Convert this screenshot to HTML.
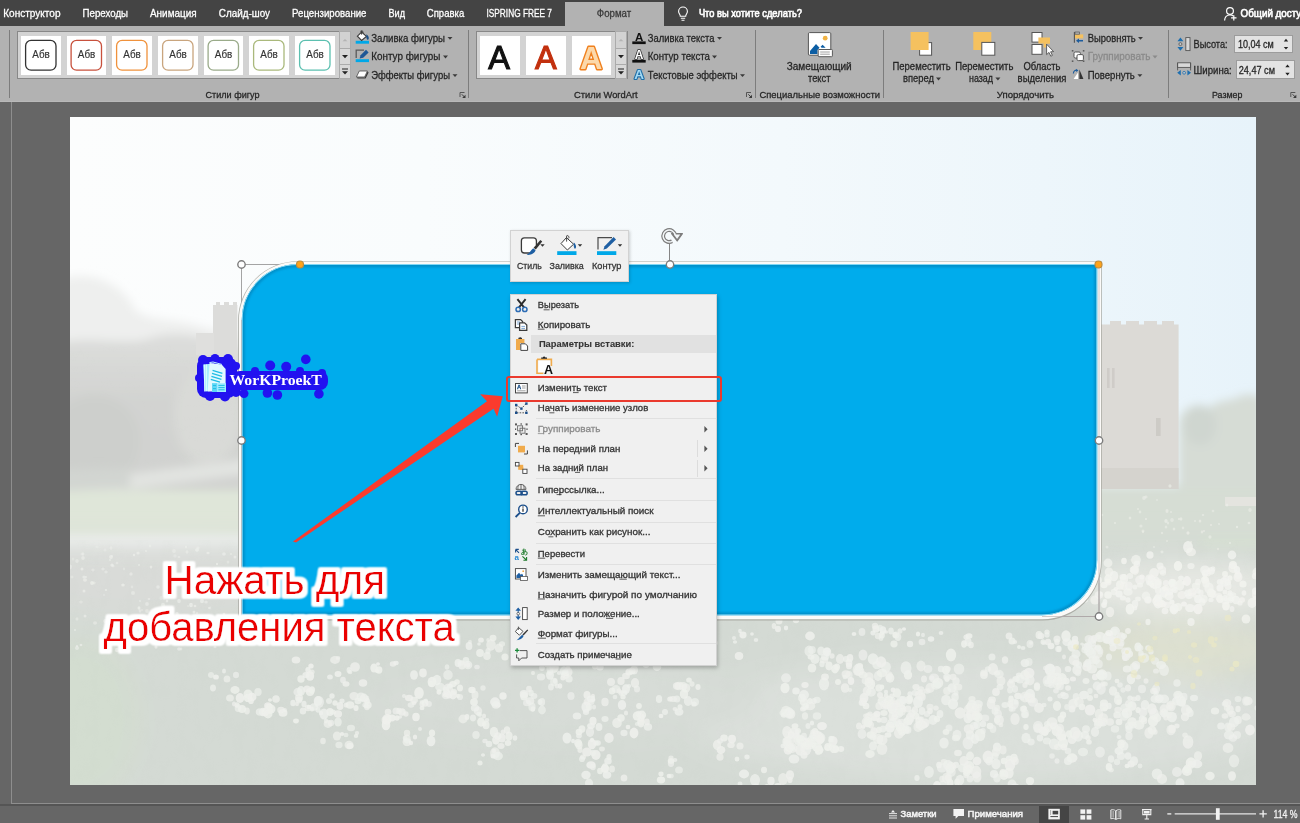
<!DOCTYPE html>
<html lang="ru"><head><meta charset="utf-8"><title>PowerPoint</title>
<style>
html,body{margin:0;padding:0;}
body{width:1300px;height:823px;overflow:hidden;position:relative;background:#666666;font-family:"Liberation Sans",sans-serif;}
.abs{position:absolute;}
#tabbar{left:0;top:0;width:1300px;height:26px;background:#444444;}
#acttab{left:565px;top:2px;width:99px;height:24px;background:#b2b2b2;}
#ribbon{left:0;top:26px;width:1300px;height:76px;background:#b2b2b2;border-bottom:1px solid #b9b9b9;box-sizing:border-box;}
.sep{width:1px;top:30px;height:68px;background:#7d7d7d;}
.gal{background:#d3d3d3;border:1px solid #888888;box-sizing:border-box;}
.gi{background:#ffffff;width:39.5px;height:39px;top:36px;}
.sb{box-sizing:border-box;border:1px solid #ababab;background:#d8d8d8;}
#vline{left:11px;top:102px;width:1px;height:702px;background:#8e8e8e;}
#hline{left:11px;top:803px;width:1289px;height:1px;background:#8e8e8e;}
#hline2{left:0;top:804px;width:1300px;height:2px;background:#555555;}
#status{left:0;top:806px;width:1300px;height:17px;background:#666666;}
#slide{left:70px;top:117px;width:1186px;height:668px;overflow:hidden;background:#eef2f2;}
svg{position:absolute;left:0;top:0;overflow:visible;}
</style></head><body>
<div id="slide" class="abs"></div>
<svg class="abs" width="1300" height="823" viewBox="0 0 1300 823">
<defs>
<clipPath id="sl"><rect x="70" y="117" width="1186" height="668"/></clipPath>
<linearGradient id="sky" x1="0" y1="0" x2="1" y2="0"><stop offset="0" stop-color="#fcfdfd"/><stop offset="0.3" stop-color="#f9fcfd"/><stop offset="0.6" stop-color="#f3f9fc"/><stop offset="0.82" stop-color="#edf6fb"/><stop offset="1" stop-color="#e7f3fa"/></linearGradient>
<linearGradient id="trg" x1="0" y1="0" x2="0" y2="1"><stop offset="0" stop-color="#dddedc"/><stop offset="0.4" stop-color="#d2d3d1"/><stop offset="1" stop-color="#d0d2cf"/></linearGradient>
<filter id="b12" x="-30%" y="-30%" width="160%" height="160%"><feGaussianBlur stdDeviation="12"/></filter>
<filter id="b6" x="-30%" y="-30%" width="160%" height="160%"><feGaussianBlur stdDeviation="5"/></filter>
<filter id="b2" x="-30%" y="-30%" width="160%" height="160%"><feGaussianBlur stdDeviation="1.6"/></filter>
<filter id="b1" x="-30%" y="-30%" width="160%" height="160%"><feGaussianBlur stdDeviation="0.7"/></filter>
<filter id="tex" x="0" y="0" width="100%" height="100%"><feTurbulence type="fractalNoise" baseFrequency="0.09 0.05" numOctaves="3" seed="4"/><feColorMatrix type="matrix" values="0 0 0 0 0.55  0 0 0 0 0.6  0 0 0 0 0.55  0 0 0 -1.6 0.95"/></filter>
<filter id="tex2" x="0" y="0" width="100%" height="100%"><feTurbulence type="fractalNoise" baseFrequency="0.05 0.12" numOctaves="3" seed="9"/><feColorMatrix type="matrix" values="0 0 0 0 0.62  0 0 0 0 0.66  0 0 0 0 0.62  0 0 0 -1.8 1.0"/></filter>
</defs>
<g clip-path="url(#sl)">
<rect x="70" y="117" width="1186" height="668" fill="url(#sky)"/>
<g filter="url(#b6)">
<path d="M60 280 C90 268 125 285 135 310 C150 322 175 318 200 326 L250 338 V360 H60 Z" fill="#eeefee"/>
<path d="M60 342 C100 336 130 346 150 338 C175 330 200 334 215 344 L250 350 V500 H60 Z" fill="url(#trg)"/>
<ellipse cx="95" cy="440" rx="45" ry="45" fill="#cdcfcc"/>
<ellipse cx="208" cy="415" rx="34" ry="50" fill="#d9dad7"/>
</g>
<rect x="70" y="345" width="175" height="135" filter="url(#tex2)" opacity="0.08"/>
<g filter="url(#b1)"><path d="M213 305 h3 v-3 h4 v3 h4 v-3 h5 v3 h4 v-3 h4 v3 h0.4 v56 h-24.4 z" fill="#dcdcda"/><rect x="196" y="333" width="18" height="22" fill="#dfdfdd"/></g>
<g filter="url(#b6)">
<path d="M40 486 L250 458 L250 474 L40 500 Z" fill="#e2e4e1"/>
<rect x="40" y="490" width="330" height="46" fill="#dfe6d9"/>
<path d="M40 470 L130 468 L130 488 L40 492 Z" fill="#d2d5d1"/>
</g>
<g filter="url(#b6)"><path d="M1179 420 C1185 404 1200 402 1208 410 C1216 398 1232 402 1240 396 C1250 392 1262 396 1262 400 V500 H1179 Z" fill="#d6dcd5"/><ellipse cx="1200" cy="425" rx="16" ry="20" fill="#cfd6d0"/></g>
<g filter="url(#b6)"><rect x="1090" y="486" width="180" height="74" fill="#d6ddd4"/><rect x="1200" y="536" width="70" height="18" fill="#d7e3d0"/></g>
<g filter="url(#b1)"><path d="M1101 324.5 h9 v-3.6 h11 v3.6 h5 v-3.6 h13 v3.6 h5 v-3.6 h13 v3.6 h5 v-3.6 h12 v3.6 h4.6 v164 h-77.6 z" fill="#dcdad6"/><rect x="1101" y="468" width="77.6" height="21" fill="#d5d3ce"/><rect x="1107" y="368" width="2.6" height="20" fill="#cfccc8"/><rect x="1112" y="368" width="2.6" height="20" fill="#cfccc8"/><rect x="1156" y="418" width="4.6" height="18" fill="#cdcbc6"/><rect x="1225" y="497" width="31" height="9" fill="#e4e4df"/></g>
<g filter="url(#b12)">
<rect x="30" y="540" width="1260" height="280" fill="#d4dad4"/>
<ellipse cx="150" cy="580" rx="150" ry="38" fill="#d9dbd8"/>
<ellipse cx="1185" cy="590" rx="105" ry="28" fill="#e6e8e3"/>
<ellipse cx="1180" cy="650" rx="100" ry="28" fill="#dde0d0"/>
<ellipse cx="980" cy="720" rx="300" ry="60" fill="#dbe0db"/>
<ellipse cx="560" cy="700" rx="200" ry="40" fill="#d7dcd7"/>
<ellipse cx="80" cy="720" rx="60" ry="80" fill="#d3ddd0"/>
</g>
<rect x="70" y="540" width="1186" height="245" filter="url(#tex)" opacity="0.10"/>
<g filter="url(#b1)"><ellipse cx="147" cy="604" rx="1.9" ry="2.0" fill="#eceeea" opacity="0.59"/><ellipse cx="170" cy="564" rx="1.5" ry="1.7" fill="#eceeea" opacity="0.65"/><ellipse cx="86" cy="577" rx="1.0" ry="1.1" fill="#eceeea" opacity="0.72"/><ellipse cx="77" cy="648" rx="2.0" ry="2.1" fill="#eceeea" opacity="0.66"/><ellipse cx="97" cy="547" rx="1.5" ry="1.3" fill="#eceeea" opacity="0.42"/><ellipse cx="111" cy="548" rx="1.4" ry="1.7" fill="#eceeea" opacity="0.58"/><ellipse cx="158" cy="612" rx="1.4" ry="1.5" fill="#eceeea" opacity="0.66"/><ellipse cx="117" cy="650" rx="2.0" ry="2.2" fill="#eceeea" opacity="0.74"/><ellipse cx="124" cy="569" rx="1.2" ry="1.4" fill="#eceeea" opacity="0.43"/><ellipse cx="138" cy="634" rx="1.3" ry="1.6" fill="#eceeea" opacity="0.78"/><ellipse cx="70" cy="567" rx="1.9" ry="2.4" fill="#eceeea" opacity="0.59"/><ellipse cx="138" cy="553" rx="1.6" ry="1.5" fill="#eceeea" opacity="0.71"/><ellipse cx="85" cy="580" rx="2.0" ry="1.7" fill="#eceeea" opacity="0.70"/><ellipse cx="112" cy="556" rx="1.0" ry="0.8" fill="#eceeea" opacity="0.72"/><ellipse cx="165" cy="592" rx="1.1" ry="1.0" fill="#eceeea" opacity="0.69"/><ellipse cx="179" cy="557" rx="1.4" ry="1.3" fill="#eceeea" opacity="0.49"/><ellipse cx="235" cy="629" rx="1.2" ry="1.1" fill="#eceeea" opacity="0.75"/><ellipse cx="137" cy="635" rx="1.6" ry="2.0" fill="#eceeea" opacity="0.44"/><ellipse cx="106" cy="572" rx="1.7" ry="1.6" fill="#eceeea" opacity="0.53"/><ellipse cx="82" cy="554" rx="1.5" ry="1.6" fill="#eceeea" opacity="0.50"/><ellipse cx="133" cy="593" rx="2.0" ry="2.1" fill="#eceeea" opacity="0.59"/><ellipse cx="217" cy="564" rx="1.1" ry="1.2" fill="#eceeea" opacity="0.76"/><ellipse cx="112" cy="565" rx="1.7" ry="1.5" fill="#eceeea" opacity="0.78"/><ellipse cx="232" cy="638" rx="1.6" ry="1.3" fill="#eceeea" opacity="0.57"/><ellipse cx="77" cy="646" rx="1.2" ry="1.1" fill="#eceeea" opacity="0.68"/><ellipse cx="210" cy="608" rx="1.2" ry="1.4" fill="#eceeea" opacity="0.47"/><ellipse cx="82" cy="569" rx="1.5" ry="1.6" fill="#eceeea" opacity="0.74"/><ellipse cx="118" cy="641" rx="1.1" ry="1.0" fill="#eceeea" opacity="0.41"/><ellipse cx="146" cy="551" rx="1.1" ry="1.2" fill="#eceeea" opacity="0.55"/><ellipse cx="92" cy="583" rx="1.9" ry="2.1" fill="#eceeea" opacity="0.79"/><ellipse cx="188" cy="606" rx="1.1" ry="0.9" fill="#eceeea" opacity="0.41"/><ellipse cx="225" cy="619" rx="2.0" ry="2.1" fill="#eceeea" opacity="0.41"/><ellipse cx="152" cy="622" rx="1.3" ry="1.0" fill="#eceeea" opacity="0.80"/><ellipse cx="163" cy="622" rx="1.9" ry="2.1" fill="#eceeea" opacity="0.69"/><ellipse cx="205" cy="641" rx="1.3" ry="1.6" fill="#eceeea" opacity="0.67"/><ellipse cx="218" cy="589" rx="1.8" ry="1.9" fill="#eceeea" opacity="0.75"/><ellipse cx="176" cy="585" rx="1.5" ry="1.3" fill="#eceeea" opacity="0.64"/><ellipse cx="179" cy="649" rx="1.9" ry="1.8" fill="#eceeea" opacity="0.69"/><ellipse cx="195" cy="606" rx="1.4" ry="1.2" fill="#eceeea" opacity="0.74"/><ellipse cx="198" cy="548" rx="1.6" ry="1.4" fill="#eceeea" opacity="0.59"/><ellipse cx="189" cy="597" rx="1.6" ry="1.4" fill="#eceeea" opacity="0.77"/><ellipse cx="72" cy="577" rx="1.6" ry="1.4" fill="#eceeea" opacity="0.48"/><ellipse cx="224" cy="614" rx="1.4" ry="1.3" fill="#eceeea" opacity="0.76"/><ellipse cx="183" cy="566" rx="1.4" ry="1.7" fill="#eceeea" opacity="0.72"/><ellipse cx="220" cy="585" rx="1.5" ry="1.3" fill="#eceeea" opacity="0.53"/><ellipse cx="154" cy="633" rx="1.8" ry="2.3" fill="#eceeea" opacity="0.68"/><ellipse cx="117" cy="563" rx="1.4" ry="1.3" fill="#eceeea" opacity="0.51"/><ellipse cx="140" cy="611" rx="1.4" ry="1.7" fill="#eceeea" opacity="0.53"/><ellipse cx="237" cy="593" rx="1.0" ry="1.2" fill="#eceeea" opacity="0.41"/><ellipse cx="77" cy="619" rx="1.5" ry="1.8" fill="#eceeea" opacity="0.52"/><ellipse cx="73" cy="559" rx="1.4" ry="1.6" fill="#eceeea" opacity="0.41"/><ellipse cx="110" cy="560" rx="1.0" ry="1.0" fill="#eceeea" opacity="0.65"/><ellipse cx="177" cy="614" rx="1.8" ry="2.0" fill="#eceeea" opacity="0.78"/><ellipse cx="104" cy="595" rx="1.1" ry="1.1" fill="#eceeea" opacity="0.40"/><ellipse cx="191" cy="564" rx="1.2" ry="1.3" fill="#eceeea" opacity="0.54"/><ellipse cx="158" cy="610" rx="1.7" ry="2.0" fill="#eceeea" opacity="0.56"/><ellipse cx="224" cy="554" rx="1.9" ry="1.7" fill="#eceeea" opacity="0.69"/><ellipse cx="147" cy="611" rx="1.9" ry="2.0" fill="#eceeea" opacity="0.55"/><ellipse cx="219" cy="629" rx="1.9" ry="2.1" fill="#eceeea" opacity="0.59"/><ellipse cx="105" cy="621" rx="1.8" ry="2.0" fill="#eceeea" opacity="0.66"/><ellipse cx="106" cy="639" rx="2.0" ry="2.1" fill="#eceeea" opacity="0.79"/><ellipse cx="204" cy="579" rx="1.9" ry="1.8" fill="#eceeea" opacity="0.74"/><ellipse cx="84" cy="591" rx="1.5" ry="1.5" fill="#eceeea" opacity="0.71"/><ellipse cx="75" cy="630" rx="1.0" ry="0.9" fill="#eceeea" opacity="0.72"/><ellipse cx="127" cy="628" rx="1.1" ry="1.1" fill="#eceeea" opacity="0.46"/><ellipse cx="193" cy="633" rx="1.7" ry="1.7" fill="#eceeea" opacity="0.78"/><ellipse cx="231" cy="554" rx="1.1" ry="1.1" fill="#eceeea" opacity="0.61"/><ellipse cx="194" cy="612" rx="1.5" ry="1.6" fill="#eceeea" opacity="0.74"/><ellipse cx="123" cy="585" rx="1.8" ry="1.6" fill="#eceeea" opacity="0.76"/><ellipse cx="215" cy="647" rx="1.5" ry="1.3" fill="#eceeea" opacity="0.63"/><ellipse cx="161" cy="598" rx="1.6" ry="1.9" fill="#eceeea" opacity="0.41"/><ellipse cx="158" cy="587" rx="1.8" ry="1.8" fill="#eceeea" opacity="0.63"/><ellipse cx="187" cy="552" rx="1.5" ry="1.8" fill="#eceeea" opacity="0.57"/><ellipse cx="227" cy="573" rx="1.4" ry="1.4" fill="#eceeea" opacity="0.45"/><ellipse cx="209" cy="640" rx="1.4" ry="1.3" fill="#eceeea" opacity="0.53"/><ellipse cx="175" cy="642" rx="1.0" ry="0.8" fill="#eceeea" opacity="0.71"/><ellipse cx="103" cy="569" rx="1.7" ry="1.6" fill="#eceeea" opacity="0.53"/><ellipse cx="175" cy="556" rx="1.7" ry="1.8" fill="#eceeea" opacity="0.45"/><ellipse cx="113" cy="566" rx="1.5" ry="1.4" fill="#eceeea" opacity="0.57"/><ellipse cx="140" cy="601" rx="1.1" ry="1.2" fill="#eceeea" opacity="0.48"/><ellipse cx="179" cy="601" rx="1.8" ry="2.2" fill="#eceeea" opacity="0.64"/><ellipse cx="110" cy="623" rx="1.8" ry="1.7" fill="#eceeea" opacity="0.76"/><ellipse cx="124" cy="642" rx="1.1" ry="1.4" fill="#eceeea" opacity="0.80"/><ellipse cx="93" cy="570" rx="1.7" ry="1.4" fill="#eceeea" opacity="0.50"/><ellipse cx="211" cy="589" rx="1.8" ry="1.7" fill="#eceeea" opacity="0.45"/><ellipse cx="186" cy="547" rx="1.1" ry="1.4" fill="#eceeea" opacity="0.67"/><ellipse cx="235" cy="557" rx="1.5" ry="1.5" fill="#eceeea" opacity="0.70"/><ellipse cx="187" cy="565" rx="1.0" ry="0.8" fill="#eceeea" opacity="0.44"/><ellipse cx="164" cy="599" rx="1.5" ry="1.3" fill="#eceeea" opacity="0.46"/><ellipse cx="105" cy="633" rx="2.0" ry="1.7" fill="#eceeea" opacity="0.77"/><ellipse cx="81" cy="645" rx="1.4" ry="1.3" fill="#eceeea" opacity="0.71"/><ellipse cx="149" cy="599" rx="1.4" ry="1.1" fill="#eceeea" opacity="0.64"/><ellipse cx="189" cy="634" rx="1.1" ry="1.2" fill="#eceeea" opacity="0.58"/><ellipse cx="139" cy="565" rx="1.1" ry="0.9" fill="#eceeea" opacity="0.61"/><ellipse cx="222" cy="629" rx="1.7" ry="1.8" fill="#eceeea" opacity="0.74"/><ellipse cx="139" cy="608" rx="1.5" ry="1.7" fill="#eceeea" opacity="0.79"/><ellipse cx="114" cy="641" rx="1.7" ry="2.0" fill="#eceeea" opacity="0.71"/><ellipse cx="139" cy="639" rx="1.9" ry="2.1" fill="#eceeea" opacity="0.68"/><ellipse cx="200" cy="588" rx="1.7" ry="1.6" fill="#eceeea" opacity="0.43"/><ellipse cx="150" cy="546" rx="1.3" ry="1.4" fill="#eceeea" opacity="0.66"/><ellipse cx="109" cy="644" rx="1.6" ry="1.8" fill="#eceeea" opacity="0.54"/><ellipse cx="167" cy="601" rx="1.3" ry="1.4" fill="#eceeea" opacity="0.80"/><ellipse cx="189" cy="625" rx="2.0" ry="2.1" fill="#eceeea" opacity="0.41"/><ellipse cx="196" cy="572" rx="1.3" ry="1.2" fill="#eceeea" opacity="0.42"/><ellipse cx="134" cy="555" rx="1.2" ry="1.2" fill="#eceeea" opacity="0.76"/><ellipse cx="156" cy="647" rx="1.5" ry="1.7" fill="#eceeea" opacity="0.80"/><ellipse cx="208" cy="553" rx="1.6" ry="1.3" fill="#eceeea" opacity="0.70"/><ellipse cx="228" cy="562" rx="1.4" ry="1.5" fill="#eceeea" opacity="0.47"/><ellipse cx="174" cy="551" rx="1.9" ry="2.0" fill="#eceeea" opacity="0.57"/><ellipse cx="172" cy="583" rx="1.2" ry="1.3" fill="#eceeea" opacity="0.66"/><ellipse cx="118" cy="620" rx="1.2" ry="1.1" fill="#eceeea" opacity="0.41"/><ellipse cx="77" cy="561" rx="1.7" ry="2.1" fill="#eceeea" opacity="0.56"/><ellipse cx="197" cy="550" rx="2.0" ry="1.7" fill="#eceeea" opacity="0.78"/><ellipse cx="224" cy="590" rx="1.4" ry="1.3" fill="#eceeea" opacity="0.79"/><ellipse cx="159" cy="643" rx="1.7" ry="2.1" fill="#eceeea" opacity="0.59"/><ellipse cx="209" cy="608" rx="1.0" ry="1.0" fill="#eceeea" opacity="0.65"/><ellipse cx="105" cy="550" rx="1.5" ry="1.5" fill="#eceeea" opacity="0.45"/><ellipse cx="184" cy="593" rx="1.2" ry="1.2" fill="#eceeea" opacity="0.63"/><ellipse cx="202" cy="601" rx="2.0" ry="2.3" fill="#eceeea" opacity="0.78"/><ellipse cx="111" cy="557" rx="1.9" ry="2.0" fill="#eceeea" opacity="0.71"/><ellipse cx="131" cy="574" rx="1.7" ry="1.8" fill="#eceeea" opacity="0.63"/><ellipse cx="178" cy="624" rx="1.1" ry="1.4" fill="#eceeea" opacity="0.50"/><ellipse cx="226" cy="637" rx="0.9" ry="0.9" fill="#eceeea" opacity="0.42"/><ellipse cx="142" cy="610" rx="1.0" ry="0.8" fill="#eceeea" opacity="0.62"/><ellipse cx="85" cy="616" rx="1.5" ry="1.5" fill="#eceeea" opacity="0.65"/><ellipse cx="151" cy="567" rx="1.3" ry="1.5" fill="#eceeea" opacity="0.70"/><ellipse cx="83" cy="558" rx="1.8" ry="2.1" fill="#eceeea" opacity="0.65"/><ellipse cx="106" cy="590" rx="1.2" ry="1.1" fill="#eceeea" opacity="0.72"/><ellipse cx="181" cy="649" rx="1.3" ry="1.4" fill="#eceeea" opacity="0.62"/><ellipse cx="227" cy="590" rx="1.3" ry="1.6" fill="#eceeea" opacity="0.44"/><ellipse cx="83" cy="554" rx="1.5" ry="1.7" fill="#eceeea" opacity="0.59"/><ellipse cx="121" cy="626" rx="1.0" ry="1.1" fill="#eceeea" opacity="0.49"/><ellipse cx="84" cy="577" rx="1.7" ry="1.6" fill="#eceeea" opacity="0.68"/><ellipse cx="94" cy="583" rx="1.7" ry="1.4" fill="#eceeea" opacity="0.55"/><ellipse cx="191" cy="605" rx="1.9" ry="2.3" fill="#eceeea" opacity="0.78"/><ellipse cx="144" cy="629" rx="1.2" ry="1.2" fill="#eceeea" opacity="0.53"/><ellipse cx="229" cy="639" rx="1.2" ry="1.1" fill="#eceeea" opacity="0.54"/><ellipse cx="132" cy="587" rx="1.3" ry="1.4" fill="#eceeea" opacity="0.48"/><ellipse cx="206" cy="602" rx="1.8" ry="1.6" fill="#eceeea" opacity="0.63"/><ellipse cx="199" cy="637" rx="1.2" ry="1.2" fill="#eceeea" opacity="0.41"/><ellipse cx="163" cy="605" rx="2.0" ry="2.3" fill="#eceeea" opacity="0.66"/><ellipse cx="81" cy="602" rx="1.8" ry="1.5" fill="#eceeea" opacity="0.43"/><ellipse cx="195" cy="639" rx="1.0" ry="0.9" fill="#eceeea" opacity="0.65"/><ellipse cx="197" cy="613" rx="1.2" ry="1.3" fill="#eceeea" opacity="0.49"/><ellipse cx="159" cy="625" rx="1.3" ry="1.6" fill="#eceeea" opacity="0.54"/><ellipse cx="184" cy="597" rx="1.5" ry="1.7" fill="#eceeea" opacity="0.69"/><ellipse cx="226" cy="588" rx="1.8" ry="2.1" fill="#eceeea" opacity="0.67"/><ellipse cx="207" cy="633" rx="1.9" ry="2.0" fill="#eceeea" opacity="0.78"/><ellipse cx="159" cy="620" rx="1.8" ry="1.8" fill="#eceeea" opacity="0.57"/><ellipse cx="95" cy="623" rx="2.0" ry="1.7" fill="#eceeea" opacity="0.55"/><ellipse cx="487" cy="720" rx="2.4" ry="2.0" fill="#eef0ec" opacity="0.74"/><ellipse cx="483" cy="688" rx="2.7" ry="2.7" fill="#eef0ec" opacity="0.69"/><ellipse cx="473" cy="691" rx="2.3" ry="2.0" fill="#eef0ec" opacity="0.70"/><ellipse cx="496" cy="705" rx="4.2" ry="3.8" fill="#eef0ec" opacity="0.81"/><ellipse cx="498" cy="705" rx="2.7" ry="2.5" fill="#eef0ec" opacity="0.85"/><ellipse cx="475" cy="695" rx="3.5" ry="4.2" fill="#eef0ec" opacity="0.73"/><ellipse cx="503" cy="696" rx="3.7" ry="3.8" fill="#eef0ec" opacity="0.89"/><ellipse cx="495" cy="702" rx="4.9" ry="4.7" fill="#eef0ec" opacity="0.86"/><ellipse cx="796" cy="736" rx="4.0" ry="3.3" fill="#eef0ec" opacity="0.73"/><ellipse cx="791" cy="714" rx="4.4" ry="4.8" fill="#eef0ec" opacity="0.84"/><ellipse cx="805" cy="716" rx="3.1" ry="3.7" fill="#eef0ec" opacity="0.73"/><ellipse cx="786" cy="711" rx="5.0" ry="5.2" fill="#eef0ec" opacity="0.73"/><ellipse cx="812" cy="723" rx="2.2" ry="2.6" fill="#eef0ec" opacity="0.86"/><ellipse cx="803" cy="709" rx="3.0" ry="2.5" fill="#eef0ec" opacity="0.84"/><ellipse cx="789" cy="713" rx="4.9" ry="5.8" fill="#eef0ec" opacity="0.81"/><ellipse cx="795" cy="726" rx="3.4" ry="2.8" fill="#eef0ec" opacity="0.88"/><ellipse cx="805" cy="707" rx="3.7" ry="3.2" fill="#eef0ec" opacity="0.79"/><ellipse cx="806" cy="706" rx="3.1" ry="2.9" fill="#eef0ec" opacity="0.69"/><ellipse cx="784" cy="715" rx="3.2" ry="2.7" fill="#eef0ec" opacity="0.83"/><ellipse cx="695" cy="702" rx="4.0" ry="3.9" fill="#eef0ec" opacity="0.68"/><ellipse cx="673" cy="699" rx="3.8" ry="3.0" fill="#eef0ec" opacity="0.78"/><ellipse cx="694" cy="704" rx="2.8" ry="2.6" fill="#eef0ec" opacity="0.81"/><ellipse cx="665" cy="712" rx="3.0" ry="3.0" fill="#eef0ec" opacity="0.75"/><ellipse cx="670" cy="699" rx="2.8" ry="2.6" fill="#eef0ec" opacity="0.84"/><ellipse cx="688" cy="701" rx="4.2" ry="5.0" fill="#eef0ec" opacity="0.75"/><ellipse cx="680" cy="707" rx="2.5" ry="2.8" fill="#eef0ec" opacity="0.83"/><ellipse cx="679" cy="712" rx="4.5" ry="3.8" fill="#eef0ec" opacity="0.81"/><ellipse cx="675" cy="709" rx="2.5" ry="2.1" fill="#eef0ec" opacity="0.77"/><ellipse cx="1159" cy="699" rx="4.3" ry="4.2" fill="#eef0ec" opacity="0.86"/><ellipse cx="1169" cy="707" rx="2.2" ry="2.5" fill="#eef0ec" opacity="0.77"/><ellipse cx="1194" cy="698" rx="4.0" ry="3.3" fill="#eef0ec" opacity="0.81"/><ellipse cx="1170" cy="706" rx="4.0" ry="3.9" fill="#eef0ec" opacity="0.70"/><ellipse cx="1155" cy="699" rx="4.5" ry="3.9" fill="#eef0ec" opacity="0.81"/><ellipse cx="1177" cy="683" rx="3.7" ry="3.8" fill="#eef0ec" opacity="0.75"/><ellipse cx="1186" cy="710" rx="5.0" ry="5.6" fill="#eef0ec" opacity="0.79"/><ellipse cx="1178" cy="695" rx="4.8" ry="4.3" fill="#eef0ec" opacity="0.82"/><ellipse cx="1182" cy="703" rx="3.8" ry="3.6" fill="#eef0ec" opacity="0.83"/><ellipse cx="1184" cy="697" rx="3.5" ry="4.3" fill="#eef0ec" opacity="0.70"/><ellipse cx="1190" cy="713" rx="3.7" ry="3.9" fill="#eef0ec" opacity="0.80"/><ellipse cx="1172" cy="717" rx="5.0" ry="5.3" fill="#eef0ec" opacity="0.86"/><ellipse cx="1189" cy="710" rx="3.0" ry="2.7" fill="#eef0ec" opacity="0.88"/><ellipse cx="1156" cy="693" rx="2.7" ry="2.3" fill="#eef0ec" opacity="0.80"/><ellipse cx="1181" cy="701" rx="5.0" ry="5.4" fill="#eef0ec" opacity="0.89"/><ellipse cx="591" cy="726" rx="3.9" ry="3.1" fill="#eef0ec" opacity="0.86"/><ellipse cx="596" cy="743" rx="2.6" ry="2.7" fill="#eef0ec" opacity="0.76"/><ellipse cx="598" cy="743" rx="2.9" ry="2.8" fill="#eef0ec" opacity="0.80"/><ellipse cx="590" cy="732" rx="4.1" ry="5.0" fill="#eef0ec" opacity="0.71"/><ellipse cx="582" cy="729" rx="3.4" ry="3.7" fill="#eef0ec" opacity="0.82"/><ellipse cx="593" cy="721" rx="3.6" ry="4.2" fill="#eef0ec" opacity="0.90"/><ellipse cx="599" cy="727" rx="3.4" ry="4.1" fill="#eef0ec" opacity="0.80"/><ellipse cx="579" cy="732" rx="3.4" ry="3.2" fill="#eef0ec" opacity="0.88"/><ellipse cx="609" cy="738" rx="4.7" ry="5.0" fill="#eef0ec" opacity="0.84"/><ellipse cx="1011" cy="681" rx="2.5" ry="2.6" fill="#eef0ec" opacity="0.78"/><ellipse cx="1011" cy="684" rx="4.1" ry="3.8" fill="#eef0ec" opacity="0.79"/><ellipse cx="1010" cy="690" rx="2.9" ry="3.5" fill="#eef0ec" opacity="0.69"/><ellipse cx="1030" cy="680" rx="4.6" ry="5.4" fill="#eef0ec" opacity="0.77"/><ellipse cx="1018" cy="696" rx="3.8" ry="3.2" fill="#eef0ec" opacity="0.88"/><ellipse cx="1016" cy="679" rx="3.7" ry="3.0" fill="#eef0ec" opacity="0.89"/><ellipse cx="1015" cy="689" rx="3.1" ry="3.7" fill="#eef0ec" opacity="0.69"/><ellipse cx="1019" cy="675" rx="3.2" ry="2.6" fill="#eef0ec" opacity="0.81"/><ellipse cx="1037" cy="686" rx="3.1" ry="3.7" fill="#eef0ec" opacity="0.79"/><ellipse cx="1027" cy="681" rx="2.8" ry="3.4" fill="#eef0ec" opacity="0.74"/><ellipse cx="1020" cy="679" rx="4.5" ry="4.6" fill="#eef0ec" opacity="0.75"/><ellipse cx="1025" cy="697" rx="5.0" ry="5.4" fill="#eef0ec" opacity="0.72"/><ellipse cx="1022" cy="698" rx="2.3" ry="2.6" fill="#eef0ec" opacity="0.70"/><ellipse cx="609" cy="757" rx="2.6" ry="3.1" fill="#eef0ec" opacity="0.83"/><ellipse cx="593" cy="767" rx="2.8" ry="3.2" fill="#eef0ec" opacity="0.74"/><ellipse cx="600" cy="771" rx="2.9" ry="3.3" fill="#eef0ec" opacity="0.82"/><ellipse cx="586" cy="775" rx="4.7" ry="4.2" fill="#eef0ec" opacity="0.81"/><ellipse cx="589" cy="783" rx="4.1" ry="4.4" fill="#eef0ec" opacity="0.74"/><ellipse cx="624" cy="778" rx="3.4" ry="3.6" fill="#eef0ec" opacity="0.79"/><ellipse cx="612" cy="769" rx="3.0" ry="3.5" fill="#eef0ec" opacity="0.73"/><ellipse cx="605" cy="769" rx="4.3" ry="4.0" fill="#eef0ec" opacity="0.73"/><ellipse cx="591" cy="765" rx="4.7" ry="3.8" fill="#eef0ec" opacity="0.90"/><ellipse cx="720" cy="757" rx="3.6" ry="3.8" fill="#eef0ec" opacity="0.72"/><ellipse cx="732" cy="739" rx="4.0" ry="4.2" fill="#eef0ec" opacity="0.85"/><ellipse cx="717" cy="745" rx="4.1" ry="5.1" fill="#eef0ec" opacity="0.79"/><ellipse cx="747" cy="757" rx="2.7" ry="2.4" fill="#eef0ec" opacity="0.81"/><ellipse cx="721" cy="750" rx="4.4" ry="4.0" fill="#eef0ec" opacity="0.85"/><ellipse cx="731" cy="745" rx="3.8" ry="3.1" fill="#eef0ec" opacity="0.79"/><ellipse cx="724" cy="738" rx="3.8" ry="3.4" fill="#eef0ec" opacity="0.87"/><ellipse cx="740" cy="746" rx="3.6" ry="3.6" fill="#eef0ec" opacity="0.77"/><ellipse cx="737" cy="759" rx="2.4" ry="2.5" fill="#eef0ec" opacity="0.88"/><ellipse cx="720" cy="741" rx="2.9" ry="2.7" fill="#eef0ec" opacity="0.71"/><ellipse cx="330" cy="677" rx="2.9" ry="2.5" fill="#eef0ec" opacity="0.81"/><ellipse cx="343" cy="680" rx="2.9" ry="3.2" fill="#eef0ec" opacity="0.71"/><ellipse cx="350" cy="672" rx="2.4" ry="2.3" fill="#eef0ec" opacity="0.77"/><ellipse cx="346" cy="705" rx="2.3" ry="2.6" fill="#eef0ec" opacity="0.79"/><ellipse cx="346" cy="684" rx="3.5" ry="2.8" fill="#eef0ec" opacity="0.84"/><ellipse cx="342" cy="701" rx="2.6" ry="2.4" fill="#eef0ec" opacity="0.76"/><ellipse cx="739" cy="656" rx="4.3" ry="3.9" fill="#eef0ec" opacity="0.84"/><ellipse cx="703" cy="661" rx="2.9" ry="3.5" fill="#eef0ec" opacity="0.78"/><ellipse cx="697" cy="656" rx="4.9" ry="4.0" fill="#eef0ec" opacity="0.81"/><ellipse cx="690" cy="657" rx="2.4" ry="2.6" fill="#eef0ec" opacity="0.75"/><ellipse cx="713" cy="643" rx="4.7" ry="4.6" fill="#eef0ec" opacity="0.78"/><ellipse cx="709" cy="644" rx="4.4" ry="4.2" fill="#eef0ec" opacity="0.72"/><ellipse cx="709" cy="660" rx="2.7" ry="2.4" fill="#eef0ec" opacity="0.72"/><ellipse cx="694" cy="652" rx="3.5" ry="3.8" fill="#eef0ec" opacity="0.90"/><ellipse cx="708" cy="647" rx="3.3" ry="3.6" fill="#eef0ec" opacity="0.69"/><ellipse cx="697" cy="656" rx="2.3" ry="2.1" fill="#eef0ec" opacity="0.72"/><ellipse cx="671" cy="763" rx="3.2" ry="3.9" fill="#eef0ec" opacity="0.71"/><ellipse cx="661" cy="780" rx="4.2" ry="3.4" fill="#eef0ec" opacity="0.88"/><ellipse cx="669" cy="776" rx="2.4" ry="2.3" fill="#eef0ec" opacity="0.87"/><ellipse cx="675" cy="760" rx="2.4" ry="2.1" fill="#eef0ec" opacity="0.76"/><ellipse cx="679" cy="770" rx="3.9" ry="3.6" fill="#eef0ec" opacity="0.68"/><ellipse cx="661" cy="774" rx="2.6" ry="2.4" fill="#eef0ec" opacity="0.83"/><ellipse cx="671" cy="758" rx="2.6" ry="2.4" fill="#eef0ec" opacity="0.72"/><ellipse cx="671" cy="761" rx="3.3" ry="3.0" fill="#eef0ec" opacity="0.87"/><ellipse cx="671" cy="776" rx="2.8" ry="2.3" fill="#eef0ec" opacity="0.68"/><ellipse cx="910" cy="699" rx="3.0" ry="3.7" fill="#eef0ec" opacity="0.83"/><ellipse cx="902" cy="731" rx="4.1" ry="4.8" fill="#eef0ec" opacity="0.89"/><ellipse cx="900" cy="730" rx="2.5" ry="2.4" fill="#eef0ec" opacity="0.77"/><ellipse cx="909" cy="722" rx="3.1" ry="2.9" fill="#eef0ec" opacity="0.79"/><ellipse cx="905" cy="726" rx="3.5" ry="3.9" fill="#eef0ec" opacity="0.71"/><ellipse cx="899" cy="723" rx="3.2" ry="2.7" fill="#eef0ec" opacity="0.77"/><ellipse cx="884" cy="713" rx="3.7" ry="3.0" fill="#eef0ec" opacity="0.83"/><ellipse cx="891" cy="724" rx="2.4" ry="2.0" fill="#eef0ec" opacity="0.77"/><ellipse cx="884" cy="720" rx="3.5" ry="3.2" fill="#eef0ec" opacity="0.75"/><ellipse cx="909" cy="720" rx="4.7" ry="4.3" fill="#eef0ec" opacity="0.80"/><ellipse cx="895" cy="715" rx="3.5" ry="4.3" fill="#eef0ec" opacity="0.81"/><ellipse cx="890" cy="727" rx="4.8" ry="5.2" fill="#eef0ec" opacity="0.85"/><ellipse cx="882" cy="701" rx="4.5" ry="4.4" fill="#eef0ec" opacity="0.87"/><ellipse cx="892" cy="696" rx="2.6" ry="2.4" fill="#eef0ec" opacity="0.79"/><ellipse cx="870" cy="714" rx="2.6" ry="2.4" fill="#eef0ec" opacity="0.72"/><ellipse cx="886" cy="692" rx="2.2" ry="2.2" fill="#eef0ec" opacity="0.80"/><ellipse cx="891" cy="707" rx="4.0" ry="4.3" fill="#eef0ec" opacity="0.80"/><ellipse cx="871" cy="692" rx="4.9" ry="4.7" fill="#eef0ec" opacity="0.75"/><ellipse cx="897" cy="693" rx="4.2" ry="4.7" fill="#eef0ec" opacity="0.83"/><ellipse cx="910" cy="694" rx="2.6" ry="2.7" fill="#eef0ec" opacity="0.81"/><ellipse cx="880" cy="695" rx="3.0" ry="3.1" fill="#eef0ec" opacity="0.84"/><ellipse cx="890" cy="704" rx="3.1" ry="3.2" fill="#eef0ec" opacity="0.72"/><ellipse cx="893" cy="700" rx="2.4" ry="2.7" fill="#eef0ec" opacity="0.70"/><ellipse cx="899" cy="703" rx="4.4" ry="3.8" fill="#eef0ec" opacity="0.78"/><ellipse cx="1131" cy="764" rx="3.6" ry="3.5" fill="#eef0ec" opacity="0.85"/><ellipse cx="1121" cy="756" rx="4.2" ry="4.0" fill="#eef0ec" opacity="0.75"/><ellipse cx="1124" cy="746" rx="4.5" ry="4.5" fill="#eef0ec" opacity="0.80"/><ellipse cx="1119" cy="751" rx="4.5" ry="3.9" fill="#eef0ec" opacity="0.86"/><ellipse cx="1111" cy="770" rx="2.8" ry="2.3" fill="#eef0ec" opacity="0.72"/><ellipse cx="1100" cy="752" rx="4.9" ry="5.5" fill="#eef0ec" opacity="0.71"/><ellipse cx="1109" cy="767" rx="3.3" ry="4.1" fill="#eef0ec" opacity="0.89"/><ellipse cx="1140" cy="766" rx="2.5" ry="2.4" fill="#eef0ec" opacity="0.68"/><ellipse cx="1119" cy="737" rx="2.5" ry="2.1" fill="#eef0ec" opacity="0.75"/><ellipse cx="1111" cy="759" rx="3.2" ry="3.8" fill="#eef0ec" opacity="0.74"/><ellipse cx="1128" cy="756" rx="3.3" ry="3.8" fill="#eef0ec" opacity="0.81"/><ellipse cx="1134" cy="761" rx="4.1" ry="4.8" fill="#eef0ec" opacity="0.80"/><ellipse cx="1127" cy="766" rx="2.5" ry="2.3" fill="#eef0ec" opacity="0.89"/><ellipse cx="1117" cy="762" rx="3.1" ry="3.3" fill="#eef0ec" opacity="0.68"/><ellipse cx="550" cy="673" rx="2.9" ry="2.4" fill="#eef0ec" opacity="0.69"/><ellipse cx="568" cy="668" rx="2.4" ry="2.5" fill="#eef0ec" opacity="0.72"/><ellipse cx="568" cy="672" rx="4.6" ry="4.6" fill="#eef0ec" opacity="0.78"/><ellipse cx="564" cy="664" rx="2.4" ry="2.6" fill="#eef0ec" opacity="0.80"/><ellipse cx="554" cy="667" rx="4.8" ry="6.0" fill="#eef0ec" opacity="0.87"/><ellipse cx="541" cy="677" rx="4.2" ry="3.4" fill="#eef0ec" opacity="0.71"/><ellipse cx="563" cy="675" rx="2.4" ry="2.7" fill="#eef0ec" opacity="0.76"/><ellipse cx="555" cy="681" rx="2.2" ry="2.7" fill="#eef0ec" opacity="0.72"/><ellipse cx="318" cy="701" rx="4.3" ry="4.9" fill="#eef0ec" opacity="0.76"/><ellipse cx="319" cy="702" rx="5.0" ry="6.1" fill="#eef0ec" opacity="0.70"/><ellipse cx="296" cy="721" rx="2.9" ry="2.4" fill="#eef0ec" opacity="0.88"/><ellipse cx="303" cy="711" rx="3.3" ry="3.6" fill="#eef0ec" opacity="0.76"/><ellipse cx="314" cy="707" rx="4.0" ry="3.7" fill="#eef0ec" opacity="0.75"/><ellipse cx="318" cy="710" rx="2.5" ry="2.8" fill="#eef0ec" opacity="0.75"/><ellipse cx="485" cy="741" rx="2.7" ry="2.3" fill="#eef0ec" opacity="0.70"/><ellipse cx="494" cy="751" rx="2.2" ry="2.2" fill="#eef0ec" opacity="0.79"/><ellipse cx="495" cy="753" rx="4.9" ry="5.8" fill="#eef0ec" opacity="0.72"/><ellipse cx="493" cy="756" rx="2.5" ry="2.5" fill="#eef0ec" opacity="0.90"/><ellipse cx="508" cy="743" rx="3.3" ry="2.9" fill="#eef0ec" opacity="0.83"/><ellipse cx="498" cy="756" rx="4.9" ry="4.3" fill="#eef0ec" opacity="0.75"/><ellipse cx="480" cy="763" rx="2.6" ry="2.5" fill="#eef0ec" opacity="0.82"/><ellipse cx="496" cy="740" rx="3.9" ry="4.7" fill="#eef0ec" opacity="0.87"/><ellipse cx="892" cy="709" rx="4.5" ry="4.6" fill="#eef0ec" opacity="0.83"/><ellipse cx="891" cy="703" rx="3.3" ry="3.5" fill="#eef0ec" opacity="0.73"/><ellipse cx="885" cy="706" rx="2.3" ry="2.3" fill="#eef0ec" opacity="0.82"/><ellipse cx="885" cy="705" rx="4.8" ry="4.9" fill="#eef0ec" opacity="0.71"/><ellipse cx="915" cy="710" rx="3.1" ry="3.8" fill="#eef0ec" opacity="0.84"/><ellipse cx="879" cy="720" rx="2.6" ry="2.6" fill="#eef0ec" opacity="0.90"/><ellipse cx="899" cy="726" rx="4.0" ry="4.7" fill="#eef0ec" opacity="0.89"/><ellipse cx="901" cy="702" rx="5.0" ry="5.9" fill="#eef0ec" opacity="0.69"/><ellipse cx="895" cy="705" rx="4.5" ry="4.6" fill="#eef0ec" opacity="0.78"/><ellipse cx="902" cy="707" rx="3.0" ry="2.5" fill="#eef0ec" opacity="0.82"/><ellipse cx="879" cy="706" rx="3.6" ry="4.1" fill="#eef0ec" opacity="0.73"/><ellipse cx="909" cy="700" rx="3.7" ry="4.3" fill="#eef0ec" opacity="0.88"/><ellipse cx="447" cy="693" rx="3.2" ry="3.7" fill="#eef0ec" opacity="0.87"/><ellipse cx="449" cy="695" rx="3.3" ry="3.5" fill="#eef0ec" opacity="0.87"/><ellipse cx="448" cy="689" rx="5.0" ry="5.4" fill="#eef0ec" opacity="0.72"/><ellipse cx="457" cy="682" rx="2.8" ry="2.7" fill="#eef0ec" opacity="0.83"/><ellipse cx="454" cy="692" rx="3.1" ry="2.9" fill="#eef0ec" opacity="0.82"/><ellipse cx="431" cy="684" rx="2.7" ry="3.0" fill="#eef0ec" opacity="0.70"/><ellipse cx="439" cy="692" rx="2.5" ry="2.7" fill="#eef0ec" opacity="0.89"/><ellipse cx="657" cy="667" rx="4.3" ry="4.0" fill="#eef0ec" opacity="0.76"/><ellipse cx="634" cy="670" rx="4.0" ry="4.6" fill="#eef0ec" opacity="0.77"/><ellipse cx="629" cy="672" rx="3.6" ry="3.5" fill="#eef0ec" opacity="0.89"/><ellipse cx="637" cy="662" rx="3.8" ry="4.6" fill="#eef0ec" opacity="0.74"/><ellipse cx="635" cy="683" rx="4.1" ry="5.0" fill="#eef0ec" opacity="0.78"/><ellipse cx="626" cy="676" rx="3.9" ry="3.2" fill="#eef0ec" opacity="0.78"/><ellipse cx="632" cy="671" rx="3.4" ry="3.2" fill="#eef0ec" opacity="0.89"/><ellipse cx="634" cy="656" rx="2.9" ry="2.5" fill="#eef0ec" opacity="0.77"/><ellipse cx="646" cy="664" rx="3.4" ry="3.9" fill="#eef0ec" opacity="0.75"/><ellipse cx="1103" cy="722" rx="4.7" ry="4.5" fill="#eef0ec" opacity="0.69"/><ellipse cx="1095" cy="732" rx="4.1" ry="4.9" fill="#eef0ec" opacity="0.75"/><ellipse cx="1110" cy="722" rx="4.0" ry="3.8" fill="#eef0ec" opacity="0.78"/><ellipse cx="1098" cy="724" rx="4.1" ry="5.0" fill="#eef0ec" opacity="0.81"/><ellipse cx="1142" cy="719" rx="3.3" ry="3.6" fill="#eef0ec" opacity="0.86"/><ellipse cx="1096" cy="696" rx="2.4" ry="2.3" fill="#eef0ec" opacity="0.78"/><ellipse cx="1103" cy="718" rx="5.0" ry="4.8" fill="#eef0ec" opacity="0.72"/><ellipse cx="1115" cy="729" rx="4.3" ry="3.7" fill="#eef0ec" opacity="0.69"/><ellipse cx="1099" cy="714" rx="4.3" ry="5.0" fill="#eef0ec" opacity="0.73"/><ellipse cx="1105" cy="709" rx="2.5" ry="2.0" fill="#eef0ec" opacity="0.78"/><ellipse cx="1125" cy="708" rx="4.7" ry="4.5" fill="#eef0ec" opacity="0.68"/><ellipse cx="1095" cy="720" rx="2.5" ry="2.3" fill="#eef0ec" opacity="0.85"/><ellipse cx="1102" cy="723" rx="3.8" ry="3.2" fill="#eef0ec" opacity="0.70"/><ellipse cx="1099" cy="722" rx="4.4" ry="4.3" fill="#eef0ec" opacity="0.73"/><ellipse cx="338" cy="674" rx="3.5" ry="3.0" fill="#eef0ec" opacity="0.87"/><ellipse cx="355" cy="667" rx="4.9" ry="4.8" fill="#eef0ec" opacity="0.79"/><ellipse cx="335" cy="660" rx="4.9" ry="3.9" fill="#eef0ec" opacity="0.77"/><ellipse cx="363" cy="683" rx="4.3" ry="3.7" fill="#eef0ec" opacity="0.84"/><ellipse cx="349" cy="670" rx="2.5" ry="3.1" fill="#eef0ec" opacity="0.74"/><ellipse cx="338" cy="658" rx="2.3" ry="1.9" fill="#eef0ec" opacity="0.77"/><ellipse cx="556" cy="652" rx="3.6" ry="4.3" fill="#eef0ec" opacity="0.82"/><ellipse cx="561" cy="652" rx="3.6" ry="3.5" fill="#eef0ec" opacity="0.88"/><ellipse cx="542" cy="668" rx="2.9" ry="2.9" fill="#eef0ec" opacity="0.76"/><ellipse cx="538" cy="657" rx="3.4" ry="2.8" fill="#eef0ec" opacity="0.78"/><ellipse cx="550" cy="653" rx="3.7" ry="3.6" fill="#eef0ec" opacity="0.80"/><ellipse cx="549" cy="659" rx="3.2" ry="3.3" fill="#eef0ec" opacity="0.75"/><ellipse cx="550" cy="669" rx="3.6" ry="3.5" fill="#eef0ec" opacity="0.68"/><ellipse cx="549" cy="655" rx="3.9" ry="3.7" fill="#eef0ec" opacity="0.89"/><ellipse cx="863" cy="702" rx="3.9" ry="3.9" fill="#eef0ec" opacity="0.75"/><ellipse cx="850" cy="690" rx="2.3" ry="2.1" fill="#eef0ec" opacity="0.70"/><ellipse cx="866" cy="706" rx="3.4" ry="3.3" fill="#eef0ec" opacity="0.87"/><ellipse cx="864" cy="703" rx="2.4" ry="2.9" fill="#eef0ec" opacity="0.90"/><ellipse cx="864" cy="698" rx="4.5" ry="4.9" fill="#eef0ec" opacity="0.85"/><ellipse cx="886" cy="696" rx="2.3" ry="2.4" fill="#eef0ec" opacity="0.82"/><ellipse cx="882" cy="687" rx="2.3" ry="2.6" fill="#eef0ec" opacity="0.89"/><ellipse cx="867" cy="691" rx="4.3" ry="4.7" fill="#eef0ec" opacity="0.77"/><ellipse cx="893" cy="690" rx="2.4" ry="2.4" fill="#eef0ec" opacity="0.85"/><ellipse cx="868" cy="684" rx="3.5" ry="2.9" fill="#eef0ec" opacity="0.77"/><ellipse cx="861" cy="703" rx="2.4" ry="2.8" fill="#eef0ec" opacity="0.70"/><ellipse cx="937" cy="719" rx="3.1" ry="3.2" fill="#eef0ec" opacity="0.89"/><ellipse cx="940" cy="714" rx="3.4" ry="4.0" fill="#eef0ec" opacity="0.80"/><ellipse cx="949" cy="728" rx="3.5" ry="3.5" fill="#eef0ec" opacity="0.68"/><ellipse cx="921" cy="725" rx="4.8" ry="5.3" fill="#eef0ec" opacity="0.79"/><ellipse cx="918" cy="726" rx="2.5" ry="2.2" fill="#eef0ec" opacity="0.84"/><ellipse cx="927" cy="714" rx="3.2" ry="3.0" fill="#eef0ec" opacity="0.71"/><ellipse cx="922" cy="711" rx="3.3" ry="3.9" fill="#eef0ec" opacity="0.80"/><ellipse cx="924" cy="725" rx="3.5" ry="3.4" fill="#eef0ec" opacity="0.90"/><ellipse cx="930" cy="711" rx="2.9" ry="3.1" fill="#eef0ec" opacity="0.84"/><ellipse cx="933" cy="720" rx="4.5" ry="5.1" fill="#eef0ec" opacity="0.76"/><ellipse cx="919" cy="721" rx="3.8" ry="4.6" fill="#eef0ec" opacity="0.89"/><ellipse cx="921" cy="719" rx="2.8" ry="2.4" fill="#eef0ec" opacity="0.84"/><ellipse cx="608" cy="761" rx="3.8" ry="3.6" fill="#eef0ec" opacity="0.80"/><ellipse cx="607" cy="775" rx="4.3" ry="3.7" fill="#eef0ec" opacity="0.86"/><ellipse cx="593" cy="753" rx="2.8" ry="3.0" fill="#eef0ec" opacity="0.80"/><ellipse cx="605" cy="768" rx="3.8" ry="4.7" fill="#eef0ec" opacity="0.88"/><ellipse cx="587" cy="752" rx="4.9" ry="4.5" fill="#eef0ec" opacity="0.84"/><ellipse cx="602" cy="749" rx="2.9" ry="2.4" fill="#eef0ec" opacity="0.73"/><ellipse cx="583" cy="757" rx="3.0" ry="2.6" fill="#eef0ec" opacity="0.73"/><ellipse cx="582" cy="759" rx="3.0" ry="3.1" fill="#eef0ec" opacity="0.74"/><ellipse cx="596" cy="755" rx="4.6" ry="4.9" fill="#eef0ec" opacity="0.87"/><ellipse cx="801" cy="740" rx="4.8" ry="4.4" fill="#eef0ec" opacity="0.85"/><ellipse cx="841" cy="749" rx="3.2" ry="2.9" fill="#eef0ec" opacity="0.85"/><ellipse cx="806" cy="745" rx="4.2" ry="4.4" fill="#eef0ec" opacity="0.89"/><ellipse cx="807" cy="740" rx="2.9" ry="2.4" fill="#eef0ec" opacity="0.89"/><ellipse cx="832" cy="738" rx="2.4" ry="2.0" fill="#eef0ec" opacity="0.88"/><ellipse cx="812" cy="741" rx="5.0" ry="5.9" fill="#eef0ec" opacity="0.74"/><ellipse cx="832" cy="747" rx="2.4" ry="2.5" fill="#eef0ec" opacity="0.68"/><ellipse cx="833" cy="741" rx="4.6" ry="4.8" fill="#eef0ec" opacity="0.85"/><ellipse cx="829" cy="747" rx="2.7" ry="2.6" fill="#eef0ec" opacity="0.79"/><ellipse cx="809" cy="743" rx="4.2" ry="4.3" fill="#eef0ec" opacity="0.77"/><ellipse cx="828" cy="747" rx="3.8" ry="4.0" fill="#eef0ec" opacity="0.89"/><ellipse cx="419" cy="693" rx="4.8" ry="5.9" fill="#eef0ec" opacity="0.89"/><ellipse cx="448" cy="675" rx="4.8" ry="4.9" fill="#eef0ec" opacity="0.68"/><ellipse cx="414" cy="675" rx="3.9" ry="4.8" fill="#eef0ec" opacity="0.81"/><ellipse cx="440" cy="687" rx="4.9" ry="4.2" fill="#eef0ec" opacity="0.68"/><ellipse cx="447" cy="667" rx="2.3" ry="2.7" fill="#eef0ec" opacity="0.68"/><ellipse cx="423" cy="673" rx="3.8" ry="4.4" fill="#eef0ec" opacity="0.85"/><ellipse cx="432" cy="682" rx="4.4" ry="5.2" fill="#eef0ec" opacity="0.89"/><ellipse cx="686" cy="688" rx="4.4" ry="4.6" fill="#eef0ec" opacity="0.73"/><ellipse cx="677" cy="686" rx="4.1" ry="3.7" fill="#eef0ec" opacity="0.78"/><ellipse cx="692" cy="684" rx="2.6" ry="2.7" fill="#eef0ec" opacity="0.73"/><ellipse cx="689" cy="680" rx="2.9" ry="2.6" fill="#eef0ec" opacity="0.82"/><ellipse cx="679" cy="686" rx="4.7" ry="4.2" fill="#eef0ec" opacity="0.72"/><ellipse cx="684" cy="694" rx="4.2" ry="4.9" fill="#eef0ec" opacity="0.83"/><ellipse cx="683" cy="686" rx="4.3" ry="3.9" fill="#eef0ec" opacity="0.73"/><ellipse cx="659" cy="699" rx="3.2" ry="3.9" fill="#eef0ec" opacity="0.76"/><ellipse cx="698" cy="687" rx="2.6" ry="3.0" fill="#eef0ec" opacity="0.85"/><ellipse cx="677" cy="699" rx="3.3" ry="3.5" fill="#eef0ec" opacity="0.74"/><ellipse cx="1005" cy="705" rx="3.6" ry="3.0" fill="#eef0ec" opacity="0.76"/><ellipse cx="1010" cy="704" rx="2.8" ry="3.4" fill="#eef0ec" opacity="0.87"/><ellipse cx="1014" cy="704" rx="4.8" ry="5.4" fill="#eef0ec" opacity="0.71"/><ellipse cx="1011" cy="705" rx="2.6" ry="3.1" fill="#eef0ec" opacity="0.83"/><ellipse cx="1000" cy="687" rx="3.5" ry="3.0" fill="#eef0ec" opacity="0.76"/><ellipse cx="1001" cy="725" rx="2.4" ry="2.3" fill="#eef0ec" opacity="0.72"/><ellipse cx="1013" cy="709" rx="2.7" ry="2.8" fill="#eef0ec" opacity="0.70"/><ellipse cx="991" cy="704" rx="4.3" ry="5.3" fill="#eef0ec" opacity="0.79"/><ellipse cx="1011" cy="709" rx="2.4" ry="2.8" fill="#eef0ec" opacity="0.74"/><ellipse cx="1016" cy="702" rx="2.6" ry="2.8" fill="#eef0ec" opacity="0.75"/><ellipse cx="999" cy="720" rx="4.9" ry="5.3" fill="#eef0ec" opacity="0.78"/><ellipse cx="1011" cy="699" rx="2.7" ry="3.4" fill="#eef0ec" opacity="0.89"/><ellipse cx="1023" cy="709" rx="3.3" ry="2.9" fill="#eef0ec" opacity="0.69"/><ellipse cx="505" cy="657" rx="3.6" ry="3.6" fill="#eef0ec" opacity="0.82"/><ellipse cx="502" cy="644" rx="3.1" ry="2.8" fill="#eef0ec" opacity="0.68"/><ellipse cx="493" cy="638" rx="3.5" ry="3.3" fill="#eef0ec" opacity="0.82"/><ellipse cx="487" cy="656" rx="3.8" ry="4.0" fill="#eef0ec" opacity="0.77"/><ellipse cx="491" cy="645" rx="4.8" ry="5.8" fill="#eef0ec" opacity="0.73"/><ellipse cx="515" cy="630" rx="2.7" ry="3.3" fill="#eef0ec" opacity="0.79"/><ellipse cx="499" cy="648" rx="4.2" ry="4.5" fill="#eef0ec" opacity="0.73"/><ellipse cx="516" cy="659" rx="3.0" ry="3.3" fill="#eef0ec" opacity="0.70"/><ellipse cx="605" cy="719" rx="3.6" ry="2.9" fill="#eef0ec" opacity="0.76"/><ellipse cx="621" cy="718" rx="3.8" ry="3.8" fill="#eef0ec" opacity="0.82"/><ellipse cx="641" cy="723" rx="3.5" ry="4.4" fill="#eef0ec" opacity="0.82"/><ellipse cx="628" cy="727" rx="2.4" ry="2.2" fill="#eef0ec" opacity="0.85"/><ellipse cx="639" cy="706" rx="2.9" ry="3.0" fill="#eef0ec" opacity="0.88"/><ellipse cx="617" cy="723" rx="4.8" ry="4.9" fill="#eef0ec" opacity="0.79"/><ellipse cx="624" cy="733" rx="3.6" ry="3.2" fill="#eef0ec" opacity="0.75"/><ellipse cx="634" cy="733" rx="4.4" ry="5.4" fill="#eef0ec" opacity="0.90"/><ellipse cx="622" cy="705" rx="4.2" ry="4.9" fill="#eef0ec" opacity="0.86"/><ellipse cx="247" cy="711" rx="2.8" ry="3.4" fill="#eef0ec" opacity="0.73"/><ellipse cx="251" cy="701" rx="2.9" ry="3.1" fill="#eef0ec" opacity="0.85"/><ellipse cx="258" cy="692" rx="3.7" ry="4.0" fill="#eef0ec" opacity="0.69"/><ellipse cx="260" cy="712" rx="4.3" ry="3.8" fill="#eef0ec" opacity="0.74"/><ellipse cx="235" cy="690" rx="4.6" ry="3.9" fill="#eef0ec" opacity="0.82"/><ellipse cx="240" cy="698" rx="4.3" ry="4.9" fill="#eef0ec" opacity="0.85"/><ellipse cx="248" cy="694" rx="4.5" ry="4.5" fill="#eef0ec" opacity="0.82"/><ellipse cx="234" cy="704" rx="2.1" ry="2.4" fill="#eef0ec" opacity="0.71"/><ellipse cx="242" cy="709" rx="4.0" ry="4.1" fill="#eef0ec" opacity="0.83"/><ellipse cx="237" cy="705" rx="2.5" ry="2.8" fill="#eef0ec" opacity="0.82"/><ellipse cx="248" cy="698" rx="4.4" ry="4.1" fill="#eef0ec" opacity="0.88"/><ellipse cx="252" cy="697" rx="4.5" ry="4.3" fill="#eef0ec" opacity="0.85"/><ellipse cx="238" cy="708" rx="3.3" ry="3.9" fill="#eef0ec" opacity="0.68"/><ellipse cx="230" cy="698" rx="3.9" ry="3.5" fill="#eef0ec" opacity="0.73"/><ellipse cx="269" cy="706" rx="2.9" ry="2.3" fill="#eef0ec" opacity="0.69"/><ellipse cx="268" cy="714" rx="4.5" ry="4.4" fill="#eef0ec" opacity="0.82"/><ellipse cx="270" cy="711" rx="3.2" ry="2.8" fill="#eef0ec" opacity="0.89"/><ellipse cx="263" cy="712" rx="4.0" ry="4.3" fill="#eef0ec" opacity="0.80"/><ellipse cx="293" cy="703" rx="2.7" ry="3.3" fill="#eef0ec" opacity="0.80"/><ellipse cx="269" cy="707" rx="4.0" ry="3.5" fill="#eef0ec" opacity="0.69"/><ellipse cx="268" cy="706" rx="3.9" ry="3.7" fill="#eef0ec" opacity="0.84"/><ellipse cx="276" cy="699" rx="3.8" ry="3.8" fill="#eef0ec" opacity="0.78"/><ellipse cx="283" cy="713" rx="4.5" ry="3.7" fill="#eef0ec" opacity="0.87"/><ellipse cx="281" cy="710" rx="3.8" ry="3.3" fill="#eef0ec" opacity="0.77"/><ellipse cx="265" cy="712" rx="3.9" ry="4.3" fill="#eef0ec" opacity="0.77"/><ellipse cx="270" cy="700" rx="2.1" ry="1.8" fill="#eef0ec" opacity="0.83"/><ellipse cx="285" cy="710" rx="2.0" ry="2.0" fill="#eef0ec" opacity="0.69"/><ellipse cx="271" cy="709" rx="4.5" ry="4.6" fill="#eef0ec" opacity="0.87"/><ellipse cx="298" cy="692" rx="4.6" ry="4.3" fill="#eef0ec" opacity="0.70"/><ellipse cx="308" cy="708" rx="3.3" ry="3.3" fill="#eef0ec" opacity="0.77"/><ellipse cx="310" cy="692" rx="4.1" ry="4.1" fill="#eef0ec" opacity="0.83"/><ellipse cx="299" cy="700" rx="3.2" ry="3.4" fill="#eef0ec" opacity="0.75"/><ellipse cx="299" cy="698" rx="4.0" ry="4.1" fill="#eef0ec" opacity="0.78"/><ellipse cx="312" cy="690" rx="3.0" ry="3.7" fill="#eef0ec" opacity="0.88"/><ellipse cx="307" cy="689" rx="3.7" ry="3.5" fill="#eef0ec" opacity="0.84"/><ellipse cx="301" cy="679" rx="3.7" ry="3.7" fill="#eef0ec" opacity="0.83"/><ellipse cx="301" cy="691" rx="4.0" ry="5.0" fill="#eef0ec" opacity="0.80"/><ellipse cx="297" cy="704" rx="2.0" ry="2.3" fill="#eef0ec" opacity="0.77"/><ellipse cx="304" cy="704" rx="2.6" ry="3.2" fill="#eef0ec" opacity="0.76"/><ellipse cx="312" cy="709" rx="2.2" ry="2.5" fill="#eef0ec" opacity="0.81"/><ellipse cx="340" cy="706" rx="3.5" ry="4.0" fill="#eef0ec" opacity="0.84"/><ellipse cx="335" cy="703" rx="2.7" ry="2.8" fill="#eef0ec" opacity="0.83"/><ellipse cx="309" cy="707" rx="2.4" ry="2.2" fill="#eef0ec" opacity="0.85"/><ellipse cx="332" cy="696" rx="2.7" ry="2.8" fill="#eef0ec" opacity="0.80"/><ellipse cx="330" cy="712" rx="3.6" ry="4.0" fill="#eef0ec" opacity="0.88"/><ellipse cx="331" cy="723" rx="3.1" ry="3.3" fill="#eef0ec" opacity="0.71"/><ellipse cx="324" cy="714" rx="4.6" ry="5.6" fill="#eef0ec" opacity="0.80"/><ellipse cx="326" cy="721" rx="2.2" ry="2.4" fill="#eef0ec" opacity="0.74"/><ellipse cx="329" cy="701" rx="3.0" ry="2.9" fill="#eef0ec" opacity="0.74"/><ellipse cx="333" cy="712" rx="3.0" ry="2.6" fill="#eef0ec" opacity="0.82"/><ellipse cx="328" cy="724" rx="4.4" ry="3.9" fill="#eef0ec" opacity="0.73"/><ellipse cx="338" cy="714" rx="4.1" ry="3.7" fill="#eef0ec" opacity="0.84"/><ellipse cx="321" cy="713" rx="2.1" ry="2.5" fill="#eef0ec" opacity="0.86"/><ellipse cx="338" cy="722" rx="3.8" ry="4.6" fill="#eef0ec" opacity="0.75"/><ellipse cx="367" cy="707" rx="2.8" ry="3.3" fill="#eef0ec" opacity="0.77"/><ellipse cx="354" cy="696" rx="4.6" ry="4.1" fill="#eef0ec" opacity="0.73"/><ellipse cx="361" cy="697" rx="4.5" ry="4.5" fill="#eef0ec" opacity="0.75"/><ellipse cx="350" cy="705" rx="4.4" ry="3.8" fill="#eef0ec" opacity="0.83"/><ellipse cx="356" cy="708" rx="2.6" ry="3.1" fill="#eef0ec" opacity="0.87"/><ellipse cx="366" cy="706" rx="2.6" ry="2.1" fill="#eef0ec" opacity="0.84"/><ellipse cx="364" cy="698" rx="4.2" ry="4.4" fill="#eef0ec" opacity="0.80"/><ellipse cx="367" cy="701" rx="2.9" ry="3.1" fill="#eef0ec" opacity="0.90"/><ellipse cx="367" cy="698" rx="2.3" ry="2.5" fill="#eef0ec" opacity="0.68"/><ellipse cx="368" cy="705" rx="3.7" ry="3.5" fill="#eef0ec" opacity="0.83"/><ellipse cx="358" cy="701" rx="3.5" ry="3.3" fill="#eef0ec" opacity="0.76"/><ellipse cx="365" cy="705" rx="2.7" ry="2.5" fill="#eef0ec" opacity="0.68"/><ellipse cx="389" cy="717" rx="2.3" ry="2.3" fill="#eef0ec" opacity="0.87"/><ellipse cx="387" cy="720" rx="4.3" ry="4.7" fill="#eef0ec" opacity="0.84"/><ellipse cx="388" cy="712" rx="3.3" ry="3.2" fill="#eef0ec" opacity="0.77"/><ellipse cx="385" cy="720" rx="3.4" ry="3.9" fill="#eef0ec" opacity="0.79"/><ellipse cx="400" cy="717" rx="2.1" ry="1.7" fill="#eef0ec" opacity="0.74"/><ellipse cx="399" cy="711" rx="2.7" ry="3.3" fill="#eef0ec" opacity="0.72"/><ellipse cx="402" cy="712" rx="3.8" ry="3.8" fill="#eef0ec" opacity="0.84"/><ellipse cx="386" cy="725" rx="4.3" ry="5.2" fill="#eef0ec" opacity="0.90"/><ellipse cx="397" cy="718" rx="2.6" ry="2.8" fill="#eef0ec" opacity="0.89"/><ellipse cx="387" cy="719" rx="4.2" ry="5.3" fill="#eef0ec" opacity="0.79"/><ellipse cx="420" cy="729" rx="2.0" ry="2.0" fill="#eef0ec" opacity="0.71"/><ellipse cx="392" cy="718" rx="3.5" ry="3.4" fill="#eef0ec" opacity="0.89"/><ellipse cx="396" cy="711" rx="3.5" ry="3.5" fill="#eef0ec" opacity="0.71"/><ellipse cx="406" cy="714" rx="2.6" ry="2.7" fill="#eef0ec" opacity="0.78"/><ellipse cx="339" cy="745" rx="3.6" ry="3.3" fill="#eef0ec" opacity="0.68"/><ellipse cx="342" cy="734" rx="2.2" ry="2.1" fill="#eef0ec" opacity="0.85"/><ellipse cx="356" cy="736" rx="2.3" ry="2.1" fill="#eef0ec" opacity="0.82"/><ellipse cx="351" cy="728" rx="4.0" ry="3.2" fill="#eef0ec" opacity="0.69"/><ellipse cx="346" cy="735" rx="2.5" ry="2.2" fill="#eef0ec" opacity="0.68"/><ellipse cx="323" cy="741" rx="2.8" ry="3.3" fill="#eef0ec" opacity="0.73"/><ellipse cx="350" cy="746" rx="3.6" ry="3.0" fill="#eef0ec" opacity="0.89"/><ellipse cx="337" cy="736" rx="4.1" ry="4.6" fill="#eef0ec" opacity="0.73"/><ellipse cx="349" cy="745" rx="4.5" ry="4.2" fill="#eef0ec" opacity="0.73"/><ellipse cx="357" cy="733" rx="2.2" ry="2.0" fill="#eef0ec" opacity="0.72"/><ellipse cx="416" cy="717" rx="3.8" ry="4.2" fill="#eef0ec" opacity="0.90"/><ellipse cx="414" cy="700" rx="3.9" ry="3.2" fill="#eef0ec" opacity="0.79"/><ellipse cx="411" cy="705" rx="3.4" ry="2.7" fill="#eef0ec" opacity="0.69"/><ellipse cx="429" cy="704" rx="2.9" ry="3.0" fill="#eef0ec" opacity="0.71"/><ellipse cx="425" cy="703" rx="3.3" ry="3.8" fill="#eef0ec" opacity="0.79"/><ellipse cx="414" cy="703" rx="2.5" ry="2.1" fill="#eef0ec" opacity="0.84"/><ellipse cx="422" cy="704" rx="2.5" ry="2.9" fill="#eef0ec" opacity="0.78"/><ellipse cx="409" cy="698" rx="4.0" ry="3.3" fill="#eef0ec" opacity="0.84"/><ellipse cx="422" cy="702" rx="2.4" ry="2.0" fill="#eef0ec" opacity="0.68"/><ellipse cx="426" cy="701" rx="2.2" ry="2.6" fill="#eef0ec" opacity="0.69"/><ellipse cx="404" cy="696" rx="2.1" ry="1.9" fill="#eef0ec" opacity="0.70"/><ellipse cx="422" cy="708" rx="2.5" ry="2.2" fill="#eef0ec" opacity="0.82"/><ellipse cx="460" cy="697" rx="3.0" ry="3.1" fill="#eef0ec" opacity="0.71"/><ellipse cx="446" cy="690" rx="3.2" ry="3.5" fill="#eef0ec" opacity="0.68"/><ellipse cx="458" cy="696" rx="2.0" ry="2.2" fill="#eef0ec" opacity="0.87"/><ellipse cx="446" cy="695" rx="4.4" ry="4.3" fill="#eef0ec" opacity="0.70"/><ellipse cx="453" cy="684" rx="3.8" ry="3.1" fill="#eef0ec" opacity="0.88"/><ellipse cx="453" cy="695" rx="4.0" ry="4.4" fill="#eef0ec" opacity="0.85"/><ellipse cx="460" cy="688" rx="3.0" ry="3.5" fill="#eef0ec" opacity="0.87"/><ellipse cx="474" cy="702" rx="3.9" ry="3.8" fill="#eef0ec" opacity="0.87"/><ellipse cx="437" cy="680" rx="4.3" ry="5.2" fill="#eef0ec" opacity="0.80"/><ellipse cx="472" cy="690" rx="3.7" ry="3.2" fill="#eef0ec" opacity="0.89"/><ellipse cx="445" cy="695" rx="2.3" ry="1.9" fill="#eef0ec" opacity="0.85"/><ellipse cx="450" cy="686" rx="2.8" ry="2.5" fill="#eef0ec" opacity="0.81"/><ellipse cx="463" cy="719" rx="4.6" ry="4.4" fill="#eef0ec" opacity="0.73"/><ellipse cx="478" cy="711" rx="4.2" ry="4.4" fill="#eef0ec" opacity="0.72"/><ellipse cx="480" cy="715" rx="2.0" ry="1.9" fill="#eef0ec" opacity="0.68"/><ellipse cx="476" cy="735" rx="3.7" ry="4.1" fill="#eef0ec" opacity="0.69"/><ellipse cx="481" cy="722" rx="3.9" ry="4.7" fill="#eef0ec" opacity="0.87"/><ellipse cx="473" cy="718" rx="3.0" ry="3.4" fill="#eef0ec" opacity="0.75"/><ellipse cx="467" cy="717" rx="2.4" ry="3.0" fill="#eef0ec" opacity="0.85"/><ellipse cx="484" cy="724" rx="2.4" ry="2.4" fill="#eef0ec" opacity="0.68"/><ellipse cx="486" cy="725" rx="3.5" ry="4.3" fill="#eef0ec" opacity="0.83"/><ellipse cx="484" cy="716" rx="2.1" ry="2.5" fill="#eef0ec" opacity="0.78"/><ellipse cx="475" cy="708" rx="4.2" ry="3.6" fill="#eef0ec" opacity="0.76"/><ellipse cx="479" cy="714" rx="2.6" ry="2.3" fill="#eef0ec" opacity="0.68"/><ellipse cx="515" cy="738" rx="2.3" ry="2.7" fill="#eef0ec" opacity="0.81"/><ellipse cx="502" cy="738" rx="3.7" ry="4.5" fill="#eef0ec" opacity="0.84"/><ellipse cx="494" cy="732" rx="4.2" ry="5.3" fill="#eef0ec" opacity="0.83"/><ellipse cx="501" cy="746" rx="3.6" ry="2.9" fill="#eef0ec" opacity="0.78"/><ellipse cx="498" cy="736" rx="3.6" ry="3.7" fill="#eef0ec" opacity="0.79"/><ellipse cx="509" cy="736" rx="3.6" ry="4.5" fill="#eef0ec" opacity="0.83"/><ellipse cx="507" cy="730" rx="3.2" ry="3.7" fill="#eef0ec" opacity="0.79"/><ellipse cx="489" cy="744" rx="3.3" ry="3.3" fill="#eef0ec" opacity="0.76"/><ellipse cx="483" cy="755" rx="2.1" ry="1.8" fill="#eef0ec" opacity="0.76"/><ellipse cx="503" cy="732" rx="2.4" ry="2.6" fill="#eef0ec" opacity="0.77"/><ellipse cx="531" cy="693" rx="2.8" ry="3.3" fill="#eef0ec" opacity="0.76"/><ellipse cx="530" cy="701" rx="4.3" ry="3.7" fill="#eef0ec" opacity="0.78"/><ellipse cx="542" cy="710" rx="3.9" ry="4.4" fill="#eef0ec" opacity="0.69"/><ellipse cx="532" cy="707" rx="3.6" ry="4.4" fill="#eef0ec" opacity="0.69"/><ellipse cx="527" cy="703" rx="4.0" ry="3.3" fill="#eef0ec" opacity="0.70"/><ellipse cx="524" cy="694" rx="4.3" ry="3.9" fill="#eef0ec" opacity="0.85"/><ellipse cx="542" cy="702" rx="3.2" ry="3.9" fill="#eef0ec" opacity="0.74"/><ellipse cx="533" cy="709" rx="2.2" ry="2.7" fill="#eef0ec" opacity="0.88"/><ellipse cx="524" cy="696" rx="3.9" ry="4.5" fill="#eef0ec" opacity="0.88"/><ellipse cx="540" cy="702" rx="2.4" ry="2.9" fill="#eef0ec" opacity="0.80"/><ellipse cx="534" cy="696" rx="3.4" ry="3.0" fill="#eef0ec" opacity="0.75"/><ellipse cx="529" cy="689" rx="2.9" ry="3.2" fill="#eef0ec" opacity="0.77"/><ellipse cx="559" cy="673" rx="2.3" ry="2.0" fill="#eef0ec" opacity="0.70"/><ellipse cx="565" cy="673" rx="3.7" ry="3.6" fill="#eef0ec" opacity="0.76"/><ellipse cx="571" cy="696" rx="3.6" ry="4.0" fill="#eef0ec" opacity="0.70"/><ellipse cx="550" cy="675" rx="4.0" ry="4.8" fill="#eef0ec" opacity="0.81"/><ellipse cx="569" cy="679" rx="3.7" ry="3.6" fill="#eef0ec" opacity="0.76"/><ellipse cx="551" cy="687" rx="2.9" ry="3.4" fill="#eef0ec" opacity="0.75"/><ellipse cx="564" cy="671" rx="4.2" ry="4.6" fill="#eef0ec" opacity="0.76"/><ellipse cx="560" cy="686" rx="2.3" ry="2.7" fill="#eef0ec" opacity="0.85"/><ellipse cx="557" cy="686" rx="2.3" ry="2.5" fill="#eef0ec" opacity="0.71"/><ellipse cx="563" cy="678" rx="2.7" ry="2.4" fill="#eef0ec" opacity="0.85"/><ellipse cx="566" cy="676" rx="3.2" ry="3.0" fill="#eef0ec" opacity="0.72"/><ellipse cx="554" cy="682" rx="3.9" ry="4.2" fill="#eef0ec" opacity="0.68"/><ellipse cx="593" cy="700" rx="2.5" ry="2.1" fill="#eef0ec" opacity="0.70"/><ellipse cx="593" cy="696" rx="2.0" ry="2.2" fill="#eef0ec" opacity="0.78"/><ellipse cx="589" cy="707" rx="3.1" ry="3.8" fill="#eef0ec" opacity="0.75"/><ellipse cx="577" cy="716" rx="4.3" ry="3.6" fill="#eef0ec" opacity="0.80"/><ellipse cx="591" cy="702" rx="3.4" ry="2.9" fill="#eef0ec" opacity="0.70"/><ellipse cx="586" cy="707" rx="4.6" ry="5.5" fill="#eef0ec" opacity="0.81"/><ellipse cx="605" cy="702" rx="3.7" ry="4.2" fill="#eef0ec" opacity="0.78"/><ellipse cx="587" cy="702" rx="3.4" ry="3.5" fill="#eef0ec" opacity="0.77"/><ellipse cx="587" cy="695" rx="3.5" ry="4.1" fill="#eef0ec" opacity="0.85"/><ellipse cx="594" cy="707" rx="2.1" ry="2.6" fill="#eef0ec" opacity="0.71"/><ellipse cx="586" cy="712" rx="3.2" ry="3.0" fill="#eef0ec" opacity="0.80"/><ellipse cx="591" cy="699" rx="4.2" ry="3.4" fill="#eef0ec" opacity="0.86"/><ellipse cx="616" cy="689" rx="4.3" ry="4.0" fill="#eef0ec" opacity="0.69"/><ellipse cx="621" cy="681" rx="3.7" ry="3.9" fill="#eef0ec" opacity="0.77"/><ellipse cx="623" cy="697" rx="2.7" ry="2.3" fill="#eef0ec" opacity="0.83"/><ellipse cx="624" cy="693" rx="3.4" ry="2.7" fill="#eef0ec" opacity="0.81"/><ellipse cx="637" cy="689" rx="3.0" ry="3.5" fill="#eef0ec" opacity="0.71"/><ellipse cx="626" cy="689" rx="4.0" ry="4.8" fill="#eef0ec" opacity="0.86"/><ellipse cx="621" cy="693" rx="2.4" ry="2.9" fill="#eef0ec" opacity="0.73"/><ellipse cx="629" cy="686" rx="2.3" ry="2.1" fill="#eef0ec" opacity="0.75"/><ellipse cx="611" cy="682" rx="4.0" ry="4.0" fill="#eef0ec" opacity="0.77"/><ellipse cx="612" cy="691" rx="3.2" ry="3.6" fill="#eef0ec" opacity="0.83"/><ellipse cx="615" cy="697" rx="2.4" ry="2.3" fill="#eef0ec" opacity="0.69"/><ellipse cx="619" cy="691" rx="2.2" ry="2.7" fill="#eef0ec" opacity="0.77"/><ellipse cx="641" cy="719" rx="2.8" ry="2.7" fill="#eef0ec" opacity="0.76"/><ellipse cx="648" cy="727" rx="4.2" ry="3.7" fill="#eef0ec" opacity="0.76"/><ellipse cx="641" cy="721" rx="4.0" ry="4.5" fill="#eef0ec" opacity="0.73"/><ellipse cx="641" cy="717" rx="2.5" ry="2.9" fill="#eef0ec" opacity="0.75"/><ellipse cx="639" cy="714" rx="3.2" ry="3.2" fill="#eef0ec" opacity="0.75"/><ellipse cx="642" cy="715" rx="4.1" ry="4.4" fill="#eef0ec" opacity="0.88"/><ellipse cx="661" cy="716" rx="2.4" ry="2.2" fill="#eef0ec" opacity="0.90"/><ellipse cx="642" cy="717" rx="2.8" ry="3.3" fill="#eef0ec" opacity="0.77"/><ellipse cx="637" cy="716" rx="4.3" ry="4.5" fill="#eef0ec" opacity="0.87"/><ellipse cx="647" cy="722" rx="2.8" ry="3.4" fill="#eef0ec" opacity="0.77"/><ellipse cx="626" cy="713" rx="2.2" ry="2.5" fill="#eef0ec" opacity="0.73"/><ellipse cx="637" cy="724" rx="2.2" ry="2.1" fill="#eef0ec" opacity="0.69"/><ellipse cx="461" cy="663" rx="3.5" ry="2.8" fill="#eef0ec" opacity="0.74"/><ellipse cx="466" cy="660" rx="3.3" ry="3.0" fill="#eef0ec" opacity="0.76"/><ellipse cx="477" cy="667" rx="2.8" ry="2.3" fill="#eef0ec" opacity="0.70"/><ellipse cx="468" cy="665" rx="4.3" ry="4.3" fill="#eef0ec" opacity="0.76"/><ellipse cx="468" cy="665" rx="2.3" ry="2.4" fill="#eef0ec" opacity="0.85"/><ellipse cx="462" cy="665" rx="4.0" ry="4.6" fill="#eef0ec" opacity="0.79"/><ellipse cx="480" cy="653" rx="3.9" ry="3.9" fill="#eef0ec" opacity="0.83"/><ellipse cx="458" cy="663" rx="3.4" ry="4.0" fill="#eef0ec" opacity="0.86"/><ellipse cx="554" cy="663" rx="3.6" ry="4.4" fill="#eef0ec" opacity="0.81"/><ellipse cx="550" cy="662" rx="3.0" ry="2.6" fill="#eef0ec" opacity="0.89"/><ellipse cx="535" cy="659" rx="4.0" ry="4.5" fill="#eef0ec" opacity="0.79"/><ellipse cx="533" cy="673" rx="2.0" ry="2.3" fill="#eef0ec" opacity="0.73"/><ellipse cx="551" cy="652" rx="2.7" ry="3.0" fill="#eef0ec" opacity="0.69"/><ellipse cx="540" cy="658" rx="4.4" ry="3.6" fill="#eef0ec" opacity="0.79"/><ellipse cx="532" cy="661" rx="2.3" ry="2.8" fill="#eef0ec" opacity="0.87"/><ellipse cx="547" cy="665" rx="2.7" ry="2.3" fill="#eef0ec" opacity="0.83"/><ellipse cx="595" cy="666" rx="3.2" ry="3.4" fill="#eef0ec" opacity="0.77"/><ellipse cx="619" cy="654" rx="4.4" ry="3.9" fill="#eef0ec" opacity="0.86"/><ellipse cx="600" cy="667" rx="3.7" ry="3.5" fill="#eef0ec" opacity="0.81"/><ellipse cx="608" cy="660" rx="2.1" ry="1.8" fill="#eef0ec" opacity="0.70"/><ellipse cx="598" cy="648" rx="2.1" ry="1.9" fill="#eef0ec" opacity="0.73"/><ellipse cx="604" cy="646" rx="2.7" ry="3.3" fill="#eef0ec" opacity="0.70"/><ellipse cx="614" cy="658" rx="3.2" ry="3.7" fill="#eef0ec" opacity="0.84"/><ellipse cx="593" cy="660" rx="3.4" ry="3.2" fill="#eef0ec" opacity="0.82"/><ellipse cx="407" cy="742" rx="4.5" ry="4.1" fill="#eef0ec" opacity="0.72"/><ellipse cx="431" cy="741" rx="4.4" ry="5.2" fill="#eef0ec" opacity="0.86"/><ellipse cx="415" cy="737" rx="2.2" ry="2.6" fill="#eef0ec" opacity="0.84"/><ellipse cx="411" cy="743" rx="2.2" ry="2.2" fill="#eef0ec" opacity="0.84"/><ellipse cx="432" cy="733" rx="3.2" ry="3.5" fill="#eef0ec" opacity="0.83"/><ellipse cx="407" cy="739" rx="3.7" ry="4.4" fill="#eef0ec" opacity="0.69"/><ellipse cx="407" cy="733" rx="3.2" ry="3.2" fill="#eef0ec" opacity="0.72"/><ellipse cx="405" cy="738" rx="2.3" ry="2.2" fill="#eef0ec" opacity="0.68"/><ellipse cx="580" cy="750" rx="2.6" ry="2.9" fill="#eef0ec" opacity="0.77"/><ellipse cx="592" cy="740" rx="2.1" ry="2.2" fill="#eef0ec" opacity="0.87"/><ellipse cx="579" cy="736" rx="2.9" ry="2.4" fill="#eef0ec" opacity="0.75"/><ellipse cx="578" cy="743" rx="3.8" ry="4.1" fill="#eef0ec" opacity="0.88"/><ellipse cx="567" cy="738" rx="4.5" ry="5.6" fill="#eef0ec" opacity="0.86"/><ellipse cx="579" cy="745" rx="3.6" ry="4.3" fill="#eef0ec" opacity="0.82"/><ellipse cx="573" cy="741" rx="2.0" ry="2.2" fill="#eef0ec" opacity="0.86"/><ellipse cx="592" cy="744" rx="4.2" ry="5.3" fill="#eef0ec" opacity="0.85"/><ellipse cx="211" cy="675" rx="3.0" ry="2.9" fill="#eef0ec" opacity="0.68"/><ellipse cx="213" cy="688" rx="3.0" ry="3.4" fill="#eef0ec" opacity="0.74"/><ellipse cx="236" cy="675" rx="3.0" ry="3.2" fill="#eef0ec" opacity="0.70"/><ellipse cx="216" cy="677" rx="2.9" ry="2.6" fill="#eef0ec" opacity="0.89"/><ellipse cx="224" cy="671" rx="2.0" ry="2.5" fill="#eef0ec" opacity="0.74"/><ellipse cx="227" cy="679" rx="3.4" ry="3.5" fill="#eef0ec" opacity="0.73"/><ellipse cx="308" cy="670" rx="2.7" ry="3.1" fill="#eef0ec" opacity="0.86"/><ellipse cx="296" cy="660" rx="4.3" ry="3.5" fill="#eef0ec" opacity="0.84"/><ellipse cx="310" cy="676" rx="4.2" ry="4.8" fill="#eef0ec" opacity="0.90"/><ellipse cx="306" cy="675" rx="3.6" ry="3.1" fill="#eef0ec" opacity="0.81"/><ellipse cx="311" cy="666" rx="2.7" ry="2.6" fill="#eef0ec" opacity="0.90"/><ellipse cx="312" cy="672" rx="2.7" ry="2.5" fill="#eef0ec" opacity="0.72"/><ellipse cx="374" cy="668" rx="3.7" ry="4.6" fill="#eef0ec" opacity="0.88"/><ellipse cx="396" cy="663" rx="2.7" ry="2.2" fill="#eef0ec" opacity="0.86"/><ellipse cx="377" cy="671" rx="2.3" ry="1.9" fill="#eef0ec" opacity="0.89"/><ellipse cx="378" cy="664" rx="2.0" ry="1.7" fill="#eef0ec" opacity="0.85"/><ellipse cx="393" cy="664" rx="3.3" ry="2.7" fill="#eef0ec" opacity="0.78"/><ellipse cx="379" cy="670" rx="3.4" ry="3.7" fill="#eef0ec" opacity="0.88"/><ellipse cx="814" cy="736" rx="4.8" ry="4.7" fill="#eef0ec" opacity="0.81"/><ellipse cx="807" cy="743" rx="3.4" ry="3.2" fill="#eef0ec" opacity="0.87"/><ellipse cx="819" cy="735" rx="3.1" ry="3.8" fill="#eef0ec" opacity="0.68"/><ellipse cx="817" cy="716" rx="4.3" ry="3.7" fill="#eef0ec" opacity="0.69"/><ellipse cx="834" cy="749" rx="4.4" ry="4.1" fill="#eef0ec" opacity="0.89"/><ellipse cx="818" cy="752" rx="2.9" ry="3.0" fill="#eef0ec" opacity="0.68"/><ellipse cx="806" cy="749" rx="5.4" ry="6.3" fill="#eef0ec" opacity="0.75"/><ellipse cx="811" cy="744" rx="2.6" ry="3.1" fill="#eef0ec" opacity="0.81"/><ellipse cx="836" cy="749" rx="3.2" ry="3.8" fill="#eef0ec" opacity="0.83"/><ellipse cx="816" cy="737" rx="3.0" ry="3.6" fill="#eef0ec" opacity="0.89"/><ellipse cx="831" cy="739" rx="2.7" ry="3.2" fill="#eef0ec" opacity="0.76"/><ellipse cx="827" cy="748" rx="2.6" ry="2.5" fill="#eef0ec" opacity="0.87"/><ellipse cx="804" cy="702" rx="4.3" ry="3.7" fill="#eef0ec" opacity="0.82"/><ellipse cx="796" cy="691" rx="3.8" ry="3.5" fill="#eef0ec" opacity="0.86"/><ellipse cx="805" cy="685" rx="3.7" ry="2.9" fill="#eef0ec" opacity="0.85"/><ellipse cx="785" cy="688" rx="4.6" ry="5.2" fill="#eef0ec" opacity="0.89"/><ellipse cx="802" cy="698" rx="3.9" ry="4.1" fill="#eef0ec" opacity="0.74"/><ellipse cx="817" cy="700" rx="3.7" ry="3.2" fill="#eef0ec" opacity="0.69"/><ellipse cx="824" cy="684" rx="5.1" ry="6.4" fill="#eef0ec" opacity="0.76"/><ellipse cx="810" cy="706" rx="5.3" ry="4.3" fill="#eef0ec" opacity="0.72"/><ellipse cx="804" cy="695" rx="4.9" ry="5.0" fill="#eef0ec" opacity="0.81"/><ellipse cx="814" cy="701" rx="2.9" ry="3.1" fill="#eef0ec" opacity="0.71"/><ellipse cx="786" cy="678" rx="5.0" ry="4.7" fill="#eef0ec" opacity="0.71"/><ellipse cx="810" cy="701" rx="2.6" ry="2.9" fill="#eef0ec" opacity="0.87"/><ellipse cx="1177" cy="701" rx="5.0" ry="4.5" fill="#eef0ec" opacity="0.86"/><ellipse cx="1154" cy="714" rx="4.8" ry="6.0" fill="#eef0ec" opacity="0.78"/><ellipse cx="1153" cy="721" rx="5.1" ry="5.8" fill="#eef0ec" opacity="0.89"/><ellipse cx="1178" cy="696" rx="3.3" ry="2.7" fill="#eef0ec" opacity="0.81"/><ellipse cx="1142" cy="689" rx="4.0" ry="4.2" fill="#eef0ec" opacity="0.71"/><ellipse cx="1169" cy="715" rx="2.7" ry="3.2" fill="#eef0ec" opacity="0.77"/><ellipse cx="1154" cy="691" rx="3.9" ry="3.2" fill="#eef0ec" opacity="0.77"/><ellipse cx="1160" cy="698" rx="3.7" ry="3.7" fill="#eef0ec" opacity="0.71"/><ellipse cx="1162" cy="713" rx="2.7" ry="2.4" fill="#eef0ec" opacity="0.77"/><ellipse cx="1164" cy="699" rx="5.1" ry="4.4" fill="#eef0ec" opacity="0.80"/><ellipse cx="1152" cy="730" rx="4.3" ry="4.6" fill="#eef0ec" opacity="0.82"/><ellipse cx="1164" cy="713" rx="3.8" ry="4.6" fill="#eef0ec" opacity="0.86"/><ellipse cx="1066" cy="681" rx="3.7" ry="3.3" fill="#eef0ec" opacity="0.88"/><ellipse cx="1050" cy="679" rx="2.6" ry="3.1" fill="#eef0ec" opacity="0.86"/><ellipse cx="1051" cy="679" rx="4.2" ry="4.6" fill="#eef0ec" opacity="0.73"/><ellipse cx="1068" cy="669" rx="3.3" ry="3.1" fill="#eef0ec" opacity="0.81"/><ellipse cx="1050" cy="670" rx="5.1" ry="6.1" fill="#eef0ec" opacity="0.83"/><ellipse cx="1031" cy="698" rx="4.2" ry="4.6" fill="#eef0ec" opacity="0.73"/><ellipse cx="1047" cy="682" rx="2.6" ry="2.4" fill="#eef0ec" opacity="0.81"/><ellipse cx="1068" cy="688" rx="2.9" ry="2.7" fill="#eef0ec" opacity="0.84"/><ellipse cx="1030" cy="695" rx="5.0" ry="6.2" fill="#eef0ec" opacity="0.86"/><ellipse cx="1025" cy="663" rx="4.4" ry="4.1" fill="#eef0ec" opacity="0.81"/><ellipse cx="1037" cy="687" rx="3.2" ry="3.9" fill="#eef0ec" opacity="0.82"/><ellipse cx="1048" cy="671" rx="2.6" ry="2.6" fill="#eef0ec" opacity="0.76"/><ellipse cx="1157" cy="718" rx="4.2" ry="4.4" fill="#eef0ec" opacity="0.83"/><ellipse cx="1166" cy="717" rx="2.9" ry="3.4" fill="#eef0ec" opacity="0.77"/><ellipse cx="1185" cy="717" rx="4.2" ry="4.2" fill="#eef0ec" opacity="0.79"/><ellipse cx="1185" cy="735" rx="2.8" ry="2.6" fill="#eef0ec" opacity="0.73"/><ellipse cx="1177" cy="726" rx="2.7" ry="2.4" fill="#eef0ec" opacity="0.79"/><ellipse cx="1164" cy="709" rx="4.4" ry="4.7" fill="#eef0ec" opacity="0.78"/><ellipse cx="1171" cy="730" rx="4.6" ry="5.2" fill="#eef0ec" opacity="0.72"/><ellipse cx="1145" cy="705" rx="4.3" ry="5.0" fill="#eef0ec" opacity="0.80"/><ellipse cx="1172" cy="729" rx="3.8" ry="4.3" fill="#eef0ec" opacity="0.84"/><ellipse cx="1188" cy="742" rx="5.4" ry="6.8" fill="#eef0ec" opacity="0.79"/><ellipse cx="1166" cy="713" rx="2.8" ry="2.9" fill="#eef0ec" opacity="0.68"/><ellipse cx="1171" cy="706" rx="4.8" ry="5.5" fill="#eef0ec" opacity="0.77"/><ellipse cx="1038" cy="728" rx="4.2" ry="4.6" fill="#eef0ec" opacity="0.70"/><ellipse cx="1052" cy="722" rx="5.4" ry="4.7" fill="#eef0ec" opacity="0.78"/><ellipse cx="1044" cy="731" rx="3.0" ry="2.6" fill="#eef0ec" opacity="0.87"/><ellipse cx="1054" cy="726" rx="4.1" ry="3.4" fill="#eef0ec" opacity="0.90"/><ellipse cx="1057" cy="731" rx="5.4" ry="5.4" fill="#eef0ec" opacity="0.88"/><ellipse cx="1047" cy="724" rx="3.0" ry="3.0" fill="#eef0ec" opacity="0.76"/><ellipse cx="1060" cy="728" rx="4.1" ry="4.3" fill="#eef0ec" opacity="0.78"/><ellipse cx="1061" cy="719" rx="3.5" ry="3.7" fill="#eef0ec" opacity="0.89"/><ellipse cx="1054" cy="744" rx="5.1" ry="5.6" fill="#eef0ec" opacity="0.69"/><ellipse cx="1045" cy="733" rx="3.0" ry="3.0" fill="#eef0ec" opacity="0.73"/><ellipse cx="1040" cy="738" rx="3.3" ry="3.4" fill="#eef0ec" opacity="0.81"/><ellipse cx="1063" cy="715" rx="3.2" ry="3.4" fill="#eef0ec" opacity="0.89"/><ellipse cx="921" cy="666" rx="4.6" ry="5.4" fill="#eef0ec" opacity="0.73"/><ellipse cx="922" cy="697" rx="3.8" ry="4.0" fill="#eef0ec" opacity="0.77"/><ellipse cx="908" cy="675" rx="4.2" ry="4.7" fill="#eef0ec" opacity="0.89"/><ellipse cx="956" cy="693" rx="2.5" ry="3.0" fill="#eef0ec" opacity="0.69"/><ellipse cx="924" cy="679" rx="3.0" ry="3.6" fill="#eef0ec" opacity="0.79"/><ellipse cx="932" cy="678" rx="2.5" ry="2.4" fill="#eef0ec" opacity="0.69"/><ellipse cx="890" cy="678" rx="4.4" ry="4.7" fill="#eef0ec" opacity="0.87"/><ellipse cx="941" cy="669" rx="3.2" ry="3.3" fill="#eef0ec" opacity="0.76"/><ellipse cx="947" cy="691" rx="3.9" ry="4.0" fill="#eef0ec" opacity="0.72"/><ellipse cx="928" cy="669" rx="4.3" ry="3.9" fill="#eef0ec" opacity="0.70"/><ellipse cx="930" cy="688" rx="4.6" ry="5.1" fill="#eef0ec" opacity="0.73"/><ellipse cx="906" cy="668" rx="5.5" ry="6.8" fill="#eef0ec" opacity="0.75"/><ellipse cx="985" cy="718" rx="4.4" ry="3.6" fill="#eef0ec" opacity="0.70"/><ellipse cx="997" cy="720" rx="3.1" ry="3.5" fill="#eef0ec" opacity="0.73"/><ellipse cx="976" cy="716" rx="4.5" ry="4.9" fill="#eef0ec" opacity="0.90"/><ellipse cx="968" cy="718" rx="4.6" ry="5.3" fill="#eef0ec" opacity="0.86"/><ellipse cx="983" cy="731" rx="2.8" ry="2.9" fill="#eef0ec" opacity="0.70"/><ellipse cx="990" cy="726" rx="3.4" ry="3.3" fill="#eef0ec" opacity="0.89"/><ellipse cx="996" cy="692" rx="3.9" ry="3.9" fill="#eef0ec" opacity="0.85"/><ellipse cx="978" cy="717" rx="4.5" ry="5.0" fill="#eef0ec" opacity="0.88"/><ellipse cx="977" cy="725" rx="3.6" ry="4.1" fill="#eef0ec" opacity="0.76"/><ellipse cx="998" cy="714" rx="4.0" ry="4.6" fill="#eef0ec" opacity="0.71"/><ellipse cx="983" cy="724" rx="3.2" ry="3.2" fill="#eef0ec" opacity="0.81"/><ellipse cx="978" cy="704" rx="4.9" ry="4.1" fill="#eef0ec" opacity="0.80"/><ellipse cx="992" cy="700" rx="3.9" ry="3.4" fill="#eef0ec" opacity="0.84"/><ellipse cx="997" cy="673" rx="3.2" ry="2.6" fill="#eef0ec" opacity="0.70"/><ellipse cx="1029" cy="662" rx="3.6" ry="4.1" fill="#eef0ec" opacity="0.68"/><ellipse cx="999" cy="674" rx="4.8" ry="4.3" fill="#eef0ec" opacity="0.69"/><ellipse cx="1005" cy="660" rx="3.2" ry="3.7" fill="#eef0ec" opacity="0.79"/><ellipse cx="988" cy="669" rx="3.1" ry="2.7" fill="#eef0ec" opacity="0.69"/><ellipse cx="984" cy="675" rx="3.9" ry="4.1" fill="#eef0ec" opacity="0.82"/><ellipse cx="993" cy="669" rx="5.0" ry="6.0" fill="#eef0ec" opacity="0.79"/><ellipse cx="1025" cy="675" rx="4.8" ry="5.1" fill="#eef0ec" opacity="0.83"/><ellipse cx="1001" cy="681" rx="4.5" ry="4.8" fill="#eef0ec" opacity="0.73"/><ellipse cx="984" cy="673" rx="3.8" ry="3.5" fill="#eef0ec" opacity="0.73"/><ellipse cx="992" cy="657" rx="3.5" ry="3.5" fill="#eef0ec" opacity="0.75"/><ellipse cx="971" cy="715" rx="4.9" ry="6.1" fill="#eef0ec" opacity="0.84"/><ellipse cx="957" cy="735" rx="4.5" ry="5.2" fill="#eef0ec" opacity="0.75"/><ellipse cx="956" cy="738" rx="4.1" ry="3.3" fill="#eef0ec" opacity="0.76"/><ellipse cx="968" cy="743" rx="5.4" ry="6.5" fill="#eef0ec" opacity="0.71"/><ellipse cx="993" cy="729" rx="3.3" ry="4.0" fill="#eef0ec" opacity="0.68"/><ellipse cx="980" cy="735" rx="5.3" ry="6.2" fill="#eef0ec" opacity="0.83"/><ellipse cx="974" cy="726" rx="4.0" ry="3.9" fill="#eef0ec" opacity="0.70"/><ellipse cx="946" cy="732" rx="3.4" ry="2.9" fill="#eef0ec" opacity="0.82"/><ellipse cx="970" cy="735" rx="4.2" ry="4.8" fill="#eef0ec" opacity="0.81"/><ellipse cx="944" cy="743" rx="4.7" ry="5.6" fill="#eef0ec" opacity="0.80"/><ellipse cx="975" cy="739" rx="4.2" ry="5.1" fill="#eef0ec" opacity="0.81"/><ellipse cx="969" cy="729" rx="5.3" ry="4.8" fill="#eef0ec" opacity="0.78"/><ellipse cx="1144" cy="721" rx="3.3" ry="3.3" fill="#eef0ec" opacity="0.78"/><ellipse cx="1123" cy="742" rx="2.9" ry="2.5" fill="#eef0ec" opacity="0.73"/><ellipse cx="1149" cy="733" rx="4.7" ry="5.7" fill="#eef0ec" opacity="0.77"/><ellipse cx="1119" cy="722" rx="3.4" ry="3.2" fill="#eef0ec" opacity="0.88"/><ellipse cx="1139" cy="725" rx="5.4" ry="4.7" fill="#eef0ec" opacity="0.83"/><ellipse cx="1133" cy="725" rx="3.7" ry="3.5" fill="#eef0ec" opacity="0.76"/><ellipse cx="1129" cy="736" rx="3.7" ry="4.3" fill="#eef0ec" opacity="0.70"/><ellipse cx="1121" cy="744" rx="3.8" ry="4.5" fill="#eef0ec" opacity="0.89"/><ellipse cx="1127" cy="713" rx="5.2" ry="5.2" fill="#eef0ec" opacity="0.88"/><ellipse cx="1129" cy="729" rx="3.6" ry="3.9" fill="#eef0ec" opacity="0.75"/><ellipse cx="1155" cy="732" rx="2.7" ry="2.8" fill="#eef0ec" opacity="0.77"/><ellipse cx="1144" cy="719" rx="2.9" ry="2.7" fill="#eef0ec" opacity="0.82"/><ellipse cx="1076" cy="697" rx="3.3" ry="4.1" fill="#eef0ec" opacity="0.74"/><ellipse cx="1057" cy="706" rx="4.1" ry="5.0" fill="#eef0ec" opacity="0.83"/><ellipse cx="1073" cy="704" rx="4.7" ry="5.2" fill="#eef0ec" opacity="0.79"/><ellipse cx="1060" cy="696" rx="2.7" ry="2.5" fill="#eef0ec" opacity="0.71"/><ellipse cx="1067" cy="707" rx="2.8" ry="2.9" fill="#eef0ec" opacity="0.68"/><ellipse cx="1063" cy="694" rx="2.8" ry="2.3" fill="#eef0ec" opacity="0.84"/><ellipse cx="1072" cy="709" rx="3.4" ry="3.5" fill="#eef0ec" opacity="0.85"/><ellipse cx="1050" cy="699" rx="2.6" ry="2.5" fill="#eef0ec" opacity="0.86"/><ellipse cx="1065" cy="696" rx="3.8" ry="3.3" fill="#eef0ec" opacity="0.80"/><ellipse cx="1090" cy="710" rx="5.3" ry="5.6" fill="#eef0ec" opacity="0.90"/><ellipse cx="1060" cy="686" rx="3.9" ry="4.3" fill="#eef0ec" opacity="0.71"/><ellipse cx="1044" cy="705" rx="2.6" ry="2.2" fill="#eef0ec" opacity="0.74"/><ellipse cx="1129" cy="726" rx="4.1" ry="4.0" fill="#eef0ec" opacity="0.74"/><ellipse cx="1138" cy="710" rx="2.6" ry="3.1" fill="#eef0ec" opacity="0.89"/><ellipse cx="1104" cy="703" rx="4.1" ry="3.5" fill="#eef0ec" opacity="0.83"/><ellipse cx="1117" cy="715" rx="3.7" ry="3.6" fill="#eef0ec" opacity="0.82"/><ellipse cx="1129" cy="704" rx="4.0" ry="4.1" fill="#eef0ec" opacity="0.77"/><ellipse cx="1143" cy="712" rx="4.6" ry="4.7" fill="#eef0ec" opacity="0.71"/><ellipse cx="1152" cy="709" rx="4.7" ry="5.8" fill="#eef0ec" opacity="0.85"/><ellipse cx="1124" cy="716" rx="4.8" ry="4.8" fill="#eef0ec" opacity="0.68"/><ellipse cx="1132" cy="722" rx="4.7" ry="4.8" fill="#eef0ec" opacity="0.87"/><ellipse cx="1132" cy="706" rx="4.5" ry="4.8" fill="#eef0ec" opacity="0.88"/><ellipse cx="1118" cy="710" rx="3.7" ry="3.3" fill="#eef0ec" opacity="0.72"/><ellipse cx="1138" cy="698" rx="2.6" ry="3.1" fill="#eef0ec" opacity="0.81"/><ellipse cx="1087" cy="664" rx="4.0" ry="3.5" fill="#eef0ec" opacity="0.78"/><ellipse cx="1078" cy="673" rx="3.0" ry="3.3" fill="#eef0ec" opacity="0.68"/><ellipse cx="1074" cy="660" rx="5.4" ry="5.4" fill="#eef0ec" opacity="0.77"/><ellipse cx="1096" cy="660" rx="3.9" ry="4.4" fill="#eef0ec" opacity="0.84"/><ellipse cx="1077" cy="670" rx="4.7" ry="5.0" fill="#eef0ec" opacity="0.84"/><ellipse cx="1095" cy="677" rx="3.0" ry="3.3" fill="#eef0ec" opacity="0.85"/><ellipse cx="1076" cy="663" rx="3.6" ry="3.1" fill="#eef0ec" opacity="0.84"/><ellipse cx="1092" cy="669" rx="5.1" ry="4.6" fill="#eef0ec" opacity="0.82"/><ellipse cx="1101" cy="675" rx="5.0" ry="4.5" fill="#eef0ec" opacity="0.83"/><ellipse cx="1079" cy="665" rx="3.0" ry="3.7" fill="#eef0ec" opacity="0.75"/><ellipse cx="1087" cy="667" rx="4.7" ry="4.3" fill="#eef0ec" opacity="0.85"/><ellipse cx="1102" cy="675" rx="5.4" ry="5.7" fill="#eef0ec" opacity="0.88"/><ellipse cx="787" cy="732" rx="4.8" ry="5.9" fill="#eef0ec" opacity="0.79"/><ellipse cx="788" cy="750" rx="4.4" ry="4.7" fill="#eef0ec" opacity="0.85"/><ellipse cx="811" cy="744" rx="5.2" ry="5.0" fill="#eef0ec" opacity="0.87"/><ellipse cx="819" cy="750" rx="4.4" ry="4.6" fill="#eef0ec" opacity="0.89"/><ellipse cx="798" cy="731" rx="3.0" ry="3.0" fill="#eef0ec" opacity="0.83"/><ellipse cx="804" cy="755" rx="3.6" ry="3.8" fill="#eef0ec" opacity="0.84"/><ellipse cx="800" cy="750" rx="4.9" ry="5.7" fill="#eef0ec" opacity="0.84"/><ellipse cx="803" cy="744" rx="3.3" ry="3.1" fill="#eef0ec" opacity="0.78"/><ellipse cx="806" cy="741" rx="2.5" ry="2.1" fill="#eef0ec" opacity="0.78"/><ellipse cx="819" cy="750" rx="4.3" ry="3.6" fill="#eef0ec" opacity="0.80"/><ellipse cx="787" cy="743" rx="3.4" ry="3.0" fill="#eef0ec" opacity="0.73"/><ellipse cx="789" cy="748" rx="4.3" ry="3.9" fill="#eef0ec" opacity="0.83"/><ellipse cx="1057" cy="671" rx="4.3" ry="5.0" fill="#eef0ec" opacity="0.84"/><ellipse cx="1029" cy="673" rx="5.5" ry="5.2" fill="#eef0ec" opacity="0.85"/><ellipse cx="1056" cy="691" rx="2.9" ry="2.4" fill="#eef0ec" opacity="0.71"/><ellipse cx="1050" cy="669" rx="5.3" ry="5.5" fill="#eef0ec" opacity="0.86"/><ellipse cx="1051" cy="685" rx="2.7" ry="3.2" fill="#eef0ec" opacity="0.70"/><ellipse cx="1057" cy="679" rx="5.4" ry="6.2" fill="#eef0ec" opacity="0.76"/><ellipse cx="1025" cy="685" rx="2.7" ry="3.0" fill="#eef0ec" opacity="0.78"/><ellipse cx="1086" cy="681" rx="3.5" ry="2.9" fill="#eef0ec" opacity="0.83"/><ellipse cx="1062" cy="679" rx="4.9" ry="5.9" fill="#eef0ec" opacity="0.89"/><ellipse cx="1052" cy="677" rx="4.8" ry="5.6" fill="#eef0ec" opacity="0.79"/><ellipse cx="1046" cy="668" rx="3.0" ry="2.5" fill="#eef0ec" opacity="0.71"/><ellipse cx="1048" cy="681" rx="5.4" ry="6.1" fill="#eef0ec" opacity="0.69"/><ellipse cx="827" cy="652" rx="4.3" ry="4.2" fill="#eef0ec" opacity="0.81"/><ellipse cx="815" cy="659" rx="4.6" ry="4.9" fill="#eef0ec" opacity="0.76"/><ellipse cx="821" cy="651" rx="3.8" ry="4.6" fill="#eef0ec" opacity="0.75"/><ellipse cx="812" cy="650" rx="3.9" ry="4.0" fill="#eef0ec" opacity="0.68"/><ellipse cx="825" cy="657" rx="4.0" ry="3.6" fill="#eef0ec" opacity="0.80"/><ellipse cx="809" cy="651" rx="4.6" ry="5.4" fill="#eef0ec" opacity="0.69"/><ellipse cx="811" cy="657" rx="3.4" ry="2.8" fill="#eef0ec" opacity="0.82"/><ellipse cx="827" cy="651" rx="3.7" ry="3.8" fill="#eef0ec" opacity="0.69"/><ellipse cx="827" cy="653" rx="3.0" ry="3.3" fill="#eef0ec" opacity="0.80"/><ellipse cx="824" cy="660" rx="4.3" ry="3.5" fill="#eef0ec" opacity="0.73"/><ellipse cx="810" cy="636" rx="4.9" ry="4.4" fill="#eef0ec" opacity="0.87"/><ellipse cx="812" cy="668" rx="4.3" ry="4.6" fill="#eef0ec" opacity="0.82"/><ellipse cx="878" cy="676" rx="4.2" ry="5.1" fill="#eef0ec" opacity="0.69"/><ellipse cx="882" cy="673" rx="5.4" ry="4.3" fill="#eef0ec" opacity="0.82"/><ellipse cx="865" cy="681" rx="3.4" ry="3.1" fill="#eef0ec" opacity="0.69"/><ellipse cx="889" cy="676" rx="3.9" ry="4.8" fill="#eef0ec" opacity="0.73"/><ellipse cx="886" cy="667" rx="4.9" ry="5.6" fill="#eef0ec" opacity="0.75"/><ellipse cx="877" cy="665" rx="4.7" ry="4.1" fill="#eef0ec" opacity="0.75"/><ellipse cx="869" cy="677" rx="4.7" ry="4.8" fill="#eef0ec" opacity="0.73"/><ellipse cx="881" cy="662" rx="5.2" ry="5.8" fill="#eef0ec" opacity="0.84"/><ellipse cx="873" cy="659" rx="5.3" ry="5.8" fill="#eef0ec" opacity="0.81"/><ellipse cx="859" cy="671" rx="5.3" ry="4.7" fill="#eef0ec" opacity="0.74"/><ellipse cx="863" cy="675" rx="4.6" ry="3.7" fill="#eef0ec" opacity="0.82"/><ellipse cx="879" cy="688" rx="3.7" ry="3.7" fill="#eef0ec" opacity="0.83"/><ellipse cx="820" cy="739" rx="4.3" ry="4.7" fill="#eef0ec" opacity="0.81"/><ellipse cx="799" cy="740" rx="5.5" ry="5.4" fill="#eef0ec" opacity="0.87"/><ellipse cx="822" cy="726" rx="4.9" ry="4.1" fill="#eef0ec" opacity="0.90"/><ellipse cx="817" cy="747" rx="5.0" ry="4.5" fill="#eef0ec" opacity="0.88"/><ellipse cx="787" cy="742" rx="4.7" ry="5.6" fill="#eef0ec" opacity="0.81"/><ellipse cx="820" cy="738" rx="5.4" ry="5.8" fill="#eef0ec" opacity="0.74"/><ellipse cx="815" cy="732" rx="3.4" ry="4.0" fill="#eef0ec" opacity="0.88"/><ellipse cx="820" cy="739" rx="4.4" ry="5.4" fill="#eef0ec" opacity="0.84"/><ellipse cx="813" cy="732" rx="2.8" ry="2.6" fill="#eef0ec" opacity="0.71"/><ellipse cx="804" cy="736" rx="2.9" ry="3.3" fill="#eef0ec" opacity="0.69"/><ellipse cx="817" cy="735" rx="4.0" ry="3.9" fill="#eef0ec" opacity="0.90"/><ellipse cx="791" cy="736" rx="2.6" ry="3.0" fill="#eef0ec" opacity="0.87"/><ellipse cx="1090" cy="691" rx="2.7" ry="2.9" fill="#eef0ec" opacity="0.69"/><ellipse cx="1128" cy="688" rx="3.1" ry="3.5" fill="#eef0ec" opacity="0.78"/><ellipse cx="1103" cy="684" rx="2.7" ry="2.8" fill="#eef0ec" opacity="0.72"/><ellipse cx="1120" cy="685" rx="2.8" ry="2.7" fill="#eef0ec" opacity="0.75"/><ellipse cx="1117" cy="695" rx="2.7" ry="3.3" fill="#eef0ec" opacity="0.82"/><ellipse cx="1101" cy="673" rx="2.9" ry="2.8" fill="#eef0ec" opacity="0.81"/><ellipse cx="1131" cy="679" rx="4.3" ry="5.3" fill="#eef0ec" opacity="0.88"/><ellipse cx="1130" cy="698" rx="2.8" ry="2.5" fill="#eef0ec" opacity="0.80"/><ellipse cx="1117" cy="681" rx="2.5" ry="2.2" fill="#eef0ec" opacity="0.87"/><ellipse cx="1119" cy="702" rx="2.7" ry="3.0" fill="#eef0ec" opacity="0.85"/><ellipse cx="1134" cy="699" rx="2.9" ry="2.4" fill="#eef0ec" opacity="0.79"/><ellipse cx="1118" cy="700" rx="4.1" ry="5.0" fill="#eef0ec" opacity="0.82"/><ellipse cx="930" cy="707" rx="3.6" ry="3.2" fill="#eef0ec" opacity="0.72"/><ellipse cx="903" cy="700" rx="3.8" ry="3.9" fill="#eef0ec" opacity="0.86"/><ellipse cx="916" cy="687" rx="3.7" ry="3.1" fill="#eef0ec" opacity="0.84"/><ellipse cx="915" cy="693" rx="3.4" ry="3.0" fill="#eef0ec" opacity="0.75"/><ellipse cx="921" cy="689" rx="3.2" ry="2.8" fill="#eef0ec" opacity="0.73"/><ellipse cx="934" cy="678" rx="5.2" ry="4.6" fill="#eef0ec" opacity="0.70"/><ellipse cx="918" cy="702" rx="5.0" ry="5.9" fill="#eef0ec" opacity="0.86"/><ellipse cx="927" cy="691" rx="3.5" ry="2.8" fill="#eef0ec" opacity="0.77"/><ellipse cx="920" cy="695" rx="5.1" ry="4.8" fill="#eef0ec" opacity="0.72"/><ellipse cx="936" cy="708" rx="2.8" ry="2.6" fill="#eef0ec" opacity="0.77"/><ellipse cx="925" cy="723" rx="4.6" ry="4.5" fill="#eef0ec" opacity="0.84"/><ellipse cx="958" cy="687" rx="4.4" ry="3.6" fill="#eef0ec" opacity="0.73"/><ellipse cx="1057" cy="683" rx="5.0" ry="6.2" fill="#eef0ec" opacity="0.73"/><ellipse cx="1024" cy="709" rx="3.1" ry="3.6" fill="#eef0ec" opacity="0.89"/><ellipse cx="1026" cy="696" rx="2.6" ry="2.4" fill="#eef0ec" opacity="0.89"/><ellipse cx="1029" cy="698" rx="4.0" ry="4.8" fill="#eef0ec" opacity="0.79"/><ellipse cx="1033" cy="702" rx="5.1" ry="4.8" fill="#eef0ec" opacity="0.71"/><ellipse cx="1025" cy="713" rx="3.7" ry="4.6" fill="#eef0ec" opacity="0.68"/><ellipse cx="1033" cy="700" rx="2.7" ry="3.1" fill="#eef0ec" opacity="0.73"/><ellipse cx="1025" cy="715" rx="3.8" ry="3.2" fill="#eef0ec" opacity="0.81"/><ellipse cx="1015" cy="719" rx="4.7" ry="5.9" fill="#eef0ec" opacity="0.77"/><ellipse cx="1026" cy="727" rx="2.7" ry="2.9" fill="#eef0ec" opacity="0.88"/><ellipse cx="1038" cy="727" rx="5.1" ry="6.2" fill="#eef0ec" opacity="0.70"/><ellipse cx="1039" cy="708" rx="4.9" ry="5.1" fill="#eef0ec" opacity="0.84"/><ellipse cx="959" cy="669" rx="5.3" ry="5.6" fill="#eef0ec" opacity="0.69"/><ellipse cx="947" cy="679" rx="2.6" ry="3.0" fill="#eef0ec" opacity="0.88"/><ellipse cx="947" cy="677" rx="3.8" ry="3.2" fill="#eef0ec" opacity="0.86"/><ellipse cx="946" cy="670" rx="3.9" ry="4.2" fill="#eef0ec" opacity="0.89"/><ellipse cx="956" cy="681" rx="3.7" ry="3.8" fill="#eef0ec" opacity="0.74"/><ellipse cx="951" cy="655" rx="5.2" ry="6.5" fill="#eef0ec" opacity="0.87"/><ellipse cx="948" cy="669" rx="2.8" ry="2.8" fill="#eef0ec" opacity="0.77"/><ellipse cx="972" cy="699" rx="3.6" ry="3.0" fill="#eef0ec" opacity="0.73"/><ellipse cx="938" cy="683" rx="5.3" ry="5.3" fill="#eef0ec" opacity="0.82"/><ellipse cx="952" cy="688" rx="4.6" ry="4.7" fill="#eef0ec" opacity="0.81"/><ellipse cx="936" cy="685" rx="5.2" ry="4.7" fill="#eef0ec" opacity="0.69"/><ellipse cx="953" cy="677" rx="3.5" ry="3.3" fill="#eef0ec" opacity="0.77"/><ellipse cx="1113" cy="648" rx="3.5" ry="3.4" fill="#eef0ec" opacity="0.84"/><ellipse cx="1128" cy="651" rx="3.5" ry="3.7" fill="#eef0ec" opacity="0.80"/><ellipse cx="1129" cy="654" rx="4.1" ry="3.8" fill="#eef0ec" opacity="0.87"/><ellipse cx="1137" cy="667" rx="3.2" ry="2.7" fill="#eef0ec" opacity="0.70"/><ellipse cx="1113" cy="639" rx="4.8" ry="5.7" fill="#eef0ec" opacity="0.81"/><ellipse cx="1138" cy="647" rx="3.6" ry="4.5" fill="#eef0ec" opacity="0.89"/><ellipse cx="1121" cy="643" rx="3.5" ry="3.3" fill="#eef0ec" opacity="0.70"/><ellipse cx="1134" cy="668" rx="4.5" ry="5.4" fill="#eef0ec" opacity="0.82"/><ellipse cx="1141" cy="654" rx="2.8" ry="3.4" fill="#eef0ec" opacity="0.76"/><ellipse cx="1109" cy="657" rx="3.0" ry="3.5" fill="#eef0ec" opacity="0.75"/><ellipse cx="1127" cy="669" rx="4.3" ry="3.5" fill="#eef0ec" opacity="0.82"/><ellipse cx="1108" cy="676" rx="3.6" ry="4.5" fill="#eef0ec" opacity="0.74"/><ellipse cx="1031" cy="742" rx="3.7" ry="3.4" fill="#eef0ec" opacity="0.74"/><ellipse cx="1052" cy="756" rx="2.8" ry="2.8" fill="#eef0ec" opacity="0.70"/><ellipse cx="1072" cy="740" rx="4.5" ry="4.0" fill="#eef0ec" opacity="0.84"/><ellipse cx="1047" cy="741" rx="4.1" ry="3.5" fill="#eef0ec" opacity="0.68"/><ellipse cx="1058" cy="747" rx="3.9" ry="3.3" fill="#eef0ec" opacity="0.72"/><ellipse cx="1072" cy="758" rx="5.5" ry="4.7" fill="#eef0ec" opacity="0.88"/><ellipse cx="1057" cy="761" rx="2.5" ry="2.8" fill="#eef0ec" opacity="0.71"/><ellipse cx="1078" cy="736" rx="5.0" ry="5.7" fill="#eef0ec" opacity="0.75"/><ellipse cx="1075" cy="733" rx="5.4" ry="6.2" fill="#eef0ec" opacity="0.85"/><ellipse cx="1045" cy="731" rx="4.2" ry="4.5" fill="#eef0ec" opacity="0.88"/><ellipse cx="1063" cy="743" rx="5.1" ry="5.2" fill="#eef0ec" opacity="0.83"/><ellipse cx="1069" cy="734" rx="3.2" ry="3.8" fill="#eef0ec" opacity="0.83"/><ellipse cx="740" cy="784" rx="2.5" ry="2.4" fill="#eef0ec" opacity="0.75"/><ellipse cx="767" cy="790" rx="4.9" ry="5.9" fill="#eef0ec" opacity="0.82"/><ellipse cx="771" cy="781" rx="3.7" ry="4.2" fill="#eef0ec" opacity="0.85"/><ellipse cx="790" cy="775" rx="4.1" ry="4.8" fill="#eef0ec" opacity="0.84"/><ellipse cx="744" cy="774" rx="5.1" ry="4.4" fill="#eef0ec" opacity="0.86"/><ellipse cx="783" cy="779" rx="4.9" ry="5.9" fill="#eef0ec" opacity="0.72"/><ellipse cx="764" cy="770" rx="3.0" ry="3.2" fill="#eef0ec" opacity="0.82"/><ellipse cx="778" cy="794" rx="3.1" ry="3.9" fill="#eef0ec" opacity="0.86"/><ellipse cx="778" cy="787" rx="4.1" ry="4.1" fill="#eef0ec" opacity="0.88"/><ellipse cx="755" cy="780" rx="5.0" ry="6.1" fill="#eef0ec" opacity="0.75"/><ellipse cx="790" cy="780" rx="2.6" ry="3.1" fill="#eef0ec" opacity="0.84"/><ellipse cx="756" cy="788" rx="3.7" ry="4.4" fill="#eef0ec" opacity="0.69"/><ellipse cx="1009" cy="758" rx="3.2" ry="2.6" fill="#eef0ec" opacity="0.86"/><ellipse cx="1014" cy="758" rx="3.7" ry="4.3" fill="#eef0ec" opacity="0.87"/><ellipse cx="1003" cy="773" rx="3.6" ry="3.9" fill="#eef0ec" opacity="0.85"/><ellipse cx="1015" cy="761" rx="3.8" ry="4.0" fill="#eef0ec" opacity="0.78"/><ellipse cx="997" cy="747" rx="4.1" ry="4.5" fill="#eef0ec" opacity="0.86"/><ellipse cx="1004" cy="761" rx="3.3" ry="3.2" fill="#eef0ec" opacity="0.89"/><ellipse cx="1026" cy="738" rx="4.6" ry="5.2" fill="#eef0ec" opacity="0.76"/><ellipse cx="970" cy="756" rx="4.0" ry="4.4" fill="#eef0ec" opacity="0.82"/><ellipse cx="996" cy="752" rx="4.2" ry="4.7" fill="#eef0ec" opacity="0.77"/><ellipse cx="1003" cy="750" rx="3.6" ry="4.4" fill="#eef0ec" opacity="0.73"/><ellipse cx="988" cy="757" rx="5.4" ry="6.4" fill="#eef0ec" opacity="0.85"/><ellipse cx="995" cy="756" rx="3.6" ry="3.5" fill="#eef0ec" opacity="0.69"/><ellipse cx="997" cy="708" rx="3.0" ry="3.3" fill="#eef0ec" opacity="0.72"/><ellipse cx="968" cy="709" rx="4.0" ry="4.4" fill="#eef0ec" opacity="0.77"/><ellipse cx="978" cy="708" rx="4.0" ry="4.2" fill="#eef0ec" opacity="0.73"/><ellipse cx="960" cy="713" rx="5.4" ry="5.8" fill="#eef0ec" opacity="0.84"/><ellipse cx="975" cy="709" rx="4.7" ry="4.6" fill="#eef0ec" opacity="0.72"/><ellipse cx="972" cy="706" rx="5.1" ry="6.3" fill="#eef0ec" opacity="0.80"/><ellipse cx="995" cy="711" rx="3.5" ry="3.8" fill="#eef0ec" opacity="0.80"/><ellipse cx="955" cy="697" rx="3.8" ry="4.3" fill="#eef0ec" opacity="0.76"/><ellipse cx="971" cy="707" rx="5.3" ry="4.4" fill="#eef0ec" opacity="0.73"/><ellipse cx="953" cy="704" rx="5.1" ry="5.4" fill="#eef0ec" opacity="0.86"/><ellipse cx="970" cy="709" rx="3.0" ry="3.5" fill="#eef0ec" opacity="0.77"/><ellipse cx="946" cy="700" rx="4.9" ry="5.2" fill="#eef0ec" opacity="0.80"/><ellipse cx="969" cy="766" rx="5.2" ry="5.0" fill="#eef0ec" opacity="0.83"/><ellipse cx="964" cy="761" rx="4.6" ry="5.0" fill="#eef0ec" opacity="0.79"/><ellipse cx="989" cy="761" rx="3.9" ry="4.4" fill="#eef0ec" opacity="0.76"/><ellipse cx="962" cy="768" rx="4.0" ry="4.4" fill="#eef0ec" opacity="0.74"/><ellipse cx="970" cy="779" rx="3.3" ry="3.4" fill="#eef0ec" opacity="0.74"/><ellipse cx="977" cy="761" rx="4.4" ry="4.3" fill="#eef0ec" opacity="0.85"/><ellipse cx="948" cy="778" rx="3.1" ry="3.8" fill="#eef0ec" opacity="0.84"/><ellipse cx="968" cy="769" rx="5.2" ry="4.5" fill="#eef0ec" opacity="0.73"/><ellipse cx="956" cy="765" rx="3.0" ry="3.2" fill="#eef0ec" opacity="0.81"/><ellipse cx="950" cy="769" rx="4.4" ry="4.9" fill="#eef0ec" opacity="0.85"/><ellipse cx="958" cy="753" rx="3.9" ry="3.3" fill="#eef0ec" opacity="0.82"/><ellipse cx="977" cy="777" rx="4.5" ry="5.6" fill="#eef0ec" opacity="0.73"/><ellipse cx="868" cy="716" rx="3.0" ry="3.2" fill="#eef0ec" opacity="0.73"/><ellipse cx="894" cy="718" rx="2.9" ry="2.9" fill="#eef0ec" opacity="0.88"/><ellipse cx="893" cy="708" rx="5.3" ry="5.9" fill="#eef0ec" opacity="0.70"/><ellipse cx="916" cy="716" rx="3.5" ry="3.5" fill="#eef0ec" opacity="0.89"/><ellipse cx="903" cy="709" rx="3.2" ry="3.1" fill="#eef0ec" opacity="0.90"/><ellipse cx="912" cy="713" rx="3.6" ry="3.5" fill="#eef0ec" opacity="0.79"/><ellipse cx="897" cy="722" rx="3.9" ry="4.0" fill="#eef0ec" opacity="0.72"/><ellipse cx="887" cy="705" rx="4.7" ry="4.2" fill="#eef0ec" opacity="0.78"/><ellipse cx="908" cy="709" rx="3.4" ry="3.4" fill="#eef0ec" opacity="0.77"/><ellipse cx="908" cy="730" rx="3.4" ry="3.7" fill="#eef0ec" opacity="0.80"/><ellipse cx="911" cy="719" rx="2.9" ry="3.3" fill="#eef0ec" opacity="0.80"/><ellipse cx="920" cy="692" rx="2.8" ry="3.1" fill="#eef0ec" opacity="0.78"/><ellipse cx="917" cy="778" rx="2.7" ry="3.0" fill="#eef0ec" opacity="0.76"/><ellipse cx="951" cy="767" rx="5.1" ry="5.0" fill="#eef0ec" opacity="0.85"/><ellipse cx="939" cy="765" rx="2.8" ry="3.3" fill="#eef0ec" opacity="0.88"/><ellipse cx="951" cy="772" rx="4.8" ry="5.0" fill="#eef0ec" opacity="0.68"/><ellipse cx="938" cy="788" rx="3.6" ry="3.6" fill="#eef0ec" opacity="0.80"/><ellipse cx="944" cy="762" rx="3.3" ry="3.0" fill="#eef0ec" opacity="0.72"/><ellipse cx="937" cy="786" rx="4.0" ry="5.0" fill="#eef0ec" opacity="0.85"/><ellipse cx="943" cy="785" rx="4.1" ry="4.4" fill="#eef0ec" opacity="0.68"/><ellipse cx="960" cy="780" rx="4.3" ry="5.3" fill="#eef0ec" opacity="0.76"/><ellipse cx="942" cy="779" rx="2.8" ry="3.2" fill="#eef0ec" opacity="0.73"/><ellipse cx="942" cy="768" rx="5.1" ry="4.6" fill="#eef0ec" opacity="0.71"/><ellipse cx="929" cy="772" rx="4.9" ry="5.9" fill="#eef0ec" opacity="0.74"/><ellipse cx="1062" cy="737" rx="4.2" ry="3.4" fill="#eef0ec" opacity="0.89"/><ellipse cx="1064" cy="747" rx="3.3" ry="3.6" fill="#eef0ec" opacity="0.85"/><ellipse cx="1083" cy="752" rx="5.1" ry="4.2" fill="#eef0ec" opacity="0.69"/><ellipse cx="1048" cy="728" rx="4.2" ry="4.1" fill="#eef0ec" opacity="0.79"/><ellipse cx="1043" cy="731" rx="4.3" ry="4.3" fill="#eef0ec" opacity="0.84"/><ellipse cx="1086" cy="729" rx="4.0" ry="3.8" fill="#eef0ec" opacity="0.74"/><ellipse cx="1088" cy="738" rx="2.7" ry="2.7" fill="#eef0ec" opacity="0.79"/><ellipse cx="1061" cy="735" rx="5.2" ry="6.1" fill="#eef0ec" opacity="0.78"/><ellipse cx="1068" cy="761" rx="4.1" ry="4.1" fill="#eef0ec" opacity="0.80"/><ellipse cx="1085" cy="735" rx="4.1" ry="4.1" fill="#eef0ec" opacity="0.76"/><ellipse cx="1068" cy="751" rx="3.3" ry="3.2" fill="#eef0ec" opacity="0.69"/><ellipse cx="1089" cy="742" rx="2.8" ry="2.6" fill="#eef0ec" opacity="0.88"/><ellipse cx="888" cy="735" rx="3.4" ry="2.8" fill="#eef0ec" opacity="0.88"/><ellipse cx="918" cy="727" rx="4.6" ry="5.0" fill="#eef0ec" opacity="0.73"/><ellipse cx="883" cy="729" rx="3.3" ry="3.6" fill="#eef0ec" opacity="0.80"/><ellipse cx="899" cy="713" rx="4.2" ry="5.0" fill="#eef0ec" opacity="0.80"/><ellipse cx="867" cy="722" rx="5.3" ry="5.2" fill="#eef0ec" opacity="0.77"/><ellipse cx="910" cy="717" rx="4.1" ry="4.4" fill="#eef0ec" opacity="0.85"/><ellipse cx="874" cy="718" rx="3.3" ry="2.6" fill="#eef0ec" opacity="0.76"/><ellipse cx="889" cy="701" rx="4.7" ry="5.4" fill="#eef0ec" opacity="0.89"/><ellipse cx="902" cy="725" rx="5.3" ry="6.3" fill="#eef0ec" opacity="0.70"/><ellipse cx="895" cy="714" rx="3.1" ry="3.4" fill="#eef0ec" opacity="0.84"/><ellipse cx="909" cy="722" rx="3.1" ry="3.2" fill="#eef0ec" opacity="0.87"/><ellipse cx="906" cy="721" rx="2.5" ry="3.0" fill="#eef0ec" opacity="0.88"/><ellipse cx="1121" cy="637" rx="4.5" ry="4.7" fill="#eef0ec" opacity="0.85"/><ellipse cx="1119" cy="645" rx="4.7" ry="4.5" fill="#eef0ec" opacity="0.70"/><ellipse cx="1124" cy="636" rx="3.0" ry="2.8" fill="#eef0ec" opacity="0.82"/><ellipse cx="1115" cy="631" rx="5.0" ry="4.4" fill="#eef0ec" opacity="0.86"/><ellipse cx="1098" cy="637" rx="2.9" ry="2.7" fill="#eef0ec" opacity="0.88"/><ellipse cx="1108" cy="638" rx="5.4" ry="5.9" fill="#eef0ec" opacity="0.90"/><ellipse cx="1125" cy="651" rx="3.9" ry="3.5" fill="#eef0ec" opacity="0.78"/><ellipse cx="1126" cy="656" rx="4.3" ry="4.9" fill="#eef0ec" opacity="0.84"/><ellipse cx="1098" cy="648" rx="3.4" ry="3.4" fill="#eef0ec" opacity="0.82"/><ellipse cx="1114" cy="632" rx="3.6" ry="3.0" fill="#eef0ec" opacity="0.69"/><ellipse cx="1112" cy="642" rx="3.8" ry="4.5" fill="#eef0ec" opacity="0.76"/><ellipse cx="1148" cy="648" rx="2.8" ry="2.7" fill="#eef0ec" opacity="0.86"/><ellipse cx="879" cy="730" rx="2.9" ry="3.2" fill="#eef0ec" opacity="0.83"/><ellipse cx="890" cy="728" rx="4.8" ry="5.0" fill="#eef0ec" opacity="0.75"/><ellipse cx="878" cy="739" rx="5.2" ry="5.2" fill="#eef0ec" opacity="0.73"/><ellipse cx="892" cy="723" rx="4.9" ry="4.7" fill="#eef0ec" opacity="0.80"/><ellipse cx="877" cy="714" rx="3.6" ry="3.1" fill="#eef0ec" opacity="0.90"/><ellipse cx="893" cy="716" rx="4.6" ry="5.3" fill="#eef0ec" opacity="0.78"/><ellipse cx="899" cy="733" rx="5.1" ry="5.8" fill="#eef0ec" opacity="0.77"/><ellipse cx="875" cy="717" rx="4.8" ry="4.1" fill="#eef0ec" opacity="0.78"/><ellipse cx="859" cy="726" rx="3.0" ry="3.5" fill="#eef0ec" opacity="0.78"/><ellipse cx="906" cy="730" rx="3.6" ry="4.0" fill="#eef0ec" opacity="0.76"/><ellipse cx="871" cy="725" rx="3.0" ry="3.6" fill="#eef0ec" opacity="0.77"/><ellipse cx="901" cy="728" rx="4.6" ry="5.6" fill="#eef0ec" opacity="0.83"/><ellipse cx="840" cy="659" rx="4.1" ry="4.9" fill="#eef0ec" opacity="0.77"/><ellipse cx="832" cy="656" rx="2.7" ry="2.8" fill="#eef0ec" opacity="0.78"/><ellipse cx="822" cy="664" rx="2.7" ry="3.2" fill="#eef0ec" opacity="0.76"/><ellipse cx="837" cy="667" rx="3.0" ry="3.6" fill="#eef0ec" opacity="0.89"/><ellipse cx="829" cy="666" rx="3.6" ry="4.4" fill="#eef0ec" opacity="0.87"/><ellipse cx="863" cy="655" rx="4.5" ry="5.6" fill="#eef0ec" opacity="0.70"/><ellipse cx="849" cy="675" rx="3.6" ry="3.9" fill="#eef0ec" opacity="0.68"/><ellipse cx="838" cy="682" rx="3.0" ry="3.0" fill="#eef0ec" opacity="0.83"/><ellipse cx="849" cy="663" rx="3.4" ry="3.9" fill="#eef0ec" opacity="0.85"/><ellipse cx="846" cy="659" rx="3.1" ry="3.0" fill="#eef0ec" opacity="0.76"/><ellipse cx="845" cy="677" rx="2.5" ry="2.2" fill="#eef0ec" opacity="0.80"/><ellipse cx="835" cy="669" rx="3.9" ry="4.4" fill="#eef0ec" opacity="0.89"/><ellipse cx="970" cy="790" rx="4.4" ry="5.0" fill="#eef0ec" opacity="0.85"/><ellipse cx="950" cy="783" rx="3.5" ry="4.0" fill="#eef0ec" opacity="0.89"/><ellipse cx="976" cy="772" rx="5.3" ry="6.5" fill="#eef0ec" opacity="0.78"/><ellipse cx="941" cy="792" rx="3.5" ry="3.6" fill="#eef0ec" opacity="0.79"/><ellipse cx="947" cy="778" rx="5.0" ry="5.6" fill="#eef0ec" opacity="0.72"/><ellipse cx="957" cy="782" rx="2.8" ry="3.5" fill="#eef0ec" opacity="0.88"/><ellipse cx="968" cy="771" rx="2.7" ry="2.6" fill="#eef0ec" opacity="0.75"/><ellipse cx="981" cy="789" rx="3.6" ry="3.0" fill="#eef0ec" opacity="0.77"/><ellipse cx="992" cy="802" rx="4.2" ry="4.2" fill="#eef0ec" opacity="0.73"/><ellipse cx="961" cy="792" rx="3.0" ry="3.7" fill="#eef0ec" opacity="0.84"/><ellipse cx="948" cy="765" rx="4.9" ry="5.1" fill="#eef0ec" opacity="0.80"/><ellipse cx="966" cy="775" rx="2.7" ry="3.2" fill="#eef0ec" opacity="0.78"/><ellipse cx="1092" cy="643" rx="4.1" ry="3.8" fill="#eef0ec" opacity="0.71"/><ellipse cx="1093" cy="660" rx="4.6" ry="4.8" fill="#eef0ec" opacity="0.87"/><ellipse cx="1094" cy="647" rx="2.8" ry="2.4" fill="#eef0ec" opacity="0.70"/><ellipse cx="1089" cy="651" rx="5.1" ry="5.1" fill="#eef0ec" opacity="0.76"/><ellipse cx="1092" cy="640" rx="4.0" ry="4.1" fill="#eef0ec" opacity="0.68"/><ellipse cx="1106" cy="640" rx="3.4" ry="3.5" fill="#eef0ec" opacity="0.82"/><ellipse cx="1072" cy="646" rx="4.6" ry="5.7" fill="#eef0ec" opacity="0.88"/><ellipse cx="1114" cy="641" rx="4.5" ry="4.0" fill="#eef0ec" opacity="0.85"/><ellipse cx="1099" cy="664" rx="3.8" ry="4.3" fill="#eef0ec" opacity="0.68"/><ellipse cx="1098" cy="652" rx="5.3" ry="6.2" fill="#eef0ec" opacity="0.72"/><ellipse cx="1088" cy="663" rx="3.6" ry="4.0" fill="#eef0ec" opacity="0.80"/><ellipse cx="1089" cy="639" rx="4.5" ry="4.1" fill="#eef0ec" opacity="0.71"/><ellipse cx="1136" cy="665" rx="4.2" ry="4.1" fill="#eef0ec" opacity="0.71"/><ellipse cx="1155" cy="661" rx="4.0" ry="3.7" fill="#eef0ec" opacity="0.68"/><ellipse cx="1156" cy="671" rx="3.0" ry="2.6" fill="#eef0ec" opacity="0.71"/><ellipse cx="1140" cy="648" rx="3.4" ry="3.1" fill="#eef0ec" opacity="0.75"/><ellipse cx="1125" cy="658" rx="2.9" ry="3.1" fill="#eef0ec" opacity="0.71"/><ellipse cx="1138" cy="677" rx="3.0" ry="2.5" fill="#eef0ec" opacity="0.70"/><ellipse cx="1151" cy="652" rx="2.6" ry="2.8" fill="#eef0ec" opacity="0.76"/><ellipse cx="1146" cy="681" rx="2.5" ry="2.7" fill="#eef0ec" opacity="0.79"/><ellipse cx="1156" cy="689" rx="4.1" ry="4.7" fill="#eef0ec" opacity="0.70"/><ellipse cx="1161" cy="665" rx="5.0" ry="4.1" fill="#eef0ec" opacity="0.82"/><ellipse cx="1164" cy="670" rx="5.0" ry="6.1" fill="#eef0ec" opacity="0.74"/><ellipse cx="1144" cy="658" rx="5.2" ry="4.9" fill="#eef0ec" opacity="0.68"/><ellipse cx="858" cy="670" rx="5.4" ry="6.0" fill="#eef0ec" opacity="0.72"/><ellipse cx="845" cy="688" rx="4.2" ry="4.8" fill="#eef0ec" opacity="0.79"/><ellipse cx="849" cy="666" rx="3.0" ry="3.3" fill="#eef0ec" opacity="0.85"/><ellipse cx="825" cy="677" rx="3.9" ry="3.4" fill="#eef0ec" opacity="0.84"/><ellipse cx="851" cy="681" rx="3.3" ry="4.1" fill="#eef0ec" opacity="0.90"/><ellipse cx="850" cy="658" rx="3.3" ry="3.9" fill="#eef0ec" opacity="0.85"/><ellipse cx="846" cy="674" rx="4.5" ry="3.7" fill="#eef0ec" opacity="0.73"/><ellipse cx="869" cy="682" rx="4.4" ry="4.1" fill="#eef0ec" opacity="0.87"/><ellipse cx="869" cy="680" rx="3.0" ry="3.1" fill="#eef0ec" opacity="0.73"/><ellipse cx="860" cy="666" rx="3.0" ry="3.1" fill="#eef0ec" opacity="0.78"/><ellipse cx="871" cy="684" rx="4.2" ry="5.2" fill="#eef0ec" opacity="0.89"/><ellipse cx="859" cy="667" rx="4.1" ry="3.8" fill="#eef0ec" opacity="0.74"/><ellipse cx="791" cy="734" rx="3.2" ry="3.3" fill="#eef0ec" opacity="0.90"/><ellipse cx="794" cy="733" rx="5.3" ry="5.5" fill="#eef0ec" opacity="0.84"/><ellipse cx="808" cy="747" rx="2.6" ry="3.0" fill="#eef0ec" opacity="0.72"/><ellipse cx="804" cy="745" rx="3.5" ry="3.1" fill="#eef0ec" opacity="0.89"/><ellipse cx="783" cy="746" rx="2.6" ry="2.2" fill="#eef0ec" opacity="0.80"/><ellipse cx="792" cy="748" rx="5.5" ry="5.1" fill="#eef0ec" opacity="0.77"/><ellipse cx="792" cy="748" rx="3.0" ry="3.3" fill="#eef0ec" opacity="0.75"/><ellipse cx="791" cy="746" rx="2.6" ry="2.4" fill="#eef0ec" opacity="0.85"/><ellipse cx="794" cy="759" rx="5.4" ry="4.5" fill="#eef0ec" opacity="0.80"/><ellipse cx="808" cy="726" rx="2.6" ry="3.0" fill="#eef0ec" opacity="0.74"/><ellipse cx="789" cy="741" rx="5.5" ry="4.8" fill="#eef0ec" opacity="0.72"/><ellipse cx="784" cy="713" rx="4.6" ry="3.7" fill="#eef0ec" opacity="0.68"/><ellipse cx="871" cy="735" rx="4.5" ry="3.7" fill="#eef0ec" opacity="0.83"/><ellipse cx="874" cy="731" rx="3.6" ry="3.8" fill="#eef0ec" opacity="0.85"/><ellipse cx="862" cy="734" rx="4.4" ry="5.1" fill="#eef0ec" opacity="0.71"/><ellipse cx="868" cy="722" rx="4.4" ry="5.2" fill="#eef0ec" opacity="0.89"/><ellipse cx="863" cy="727" rx="2.5" ry="2.1" fill="#eef0ec" opacity="0.90"/><ellipse cx="882" cy="740" rx="5.5" ry="4.9" fill="#eef0ec" opacity="0.78"/><ellipse cx="873" cy="737" rx="3.6" ry="3.3" fill="#eef0ec" opacity="0.75"/><ellipse cx="901" cy="710" rx="5.4" ry="6.1" fill="#eef0ec" opacity="0.72"/><ellipse cx="873" cy="746" rx="4.0" ry="4.6" fill="#eef0ec" opacity="0.75"/><ellipse cx="870" cy="754" rx="4.8" ry="4.0" fill="#eef0ec" opacity="0.82"/><ellipse cx="882" cy="749" rx="5.4" ry="5.9" fill="#eef0ec" opacity="0.73"/><ellipse cx="866" cy="716" rx="2.9" ry="2.4" fill="#eef0ec" opacity="0.72"/><ellipse cx="1097" cy="686" rx="4.4" ry="4.4" fill="#eef0ec" opacity="0.74"/><ellipse cx="1073" cy="679" rx="3.1" ry="2.5" fill="#eef0ec" opacity="0.85"/><ellipse cx="1109" cy="706" rx="2.7" ry="3.3" fill="#eef0ec" opacity="0.86"/><ellipse cx="1104" cy="707" rx="4.4" ry="4.5" fill="#eef0ec" opacity="0.89"/><ellipse cx="1082" cy="707" rx="3.3" ry="3.2" fill="#eef0ec" opacity="0.88"/><ellipse cx="1079" cy="702" rx="4.8" ry="5.2" fill="#eef0ec" opacity="0.72"/><ellipse cx="1113" cy="691" rx="4.2" ry="4.7" fill="#eef0ec" opacity="0.82"/><ellipse cx="1090" cy="698" rx="3.0" ry="2.9" fill="#eef0ec" opacity="0.82"/><ellipse cx="1101" cy="689" rx="4.8" ry="5.7" fill="#eef0ec" opacity="0.71"/><ellipse cx="1105" cy="684" rx="2.8" ry="2.5" fill="#eef0ec" opacity="0.72"/><ellipse cx="1123" cy="690" rx="2.6" ry="2.7" fill="#eef0ec" opacity="0.68"/><ellipse cx="1084" cy="695" rx="5.0" ry="4.3" fill="#eef0ec" opacity="0.86"/><ellipse cx="1227" cy="708" rx="3.2" ry="3.0" fill="#eef0ec" opacity="0.72"/><ellipse cx="1225" cy="704" rx="3.3" ry="2.7" fill="#eef0ec" opacity="0.70"/><ellipse cx="1246" cy="701" rx="3.9" ry="4.8" fill="#eef0ec" opacity="0.70"/><ellipse cx="1257" cy="708" rx="2.6" ry="2.7" fill="#eef0ec" opacity="0.74"/><ellipse cx="1215" cy="711" rx="4.2" ry="3.5" fill="#eef0ec" opacity="0.83"/><ellipse cx="1232" cy="714" rx="3.9" ry="3.3" fill="#eef0ec" opacity="0.77"/><ellipse cx="1238" cy="709" rx="2.7" ry="3.3" fill="#eef0ec" opacity="0.82"/><ellipse cx="1227" cy="703" rx="4.3" ry="4.0" fill="#eef0ec" opacity="0.79"/><ellipse cx="1238" cy="699" rx="3.4" ry="3.1" fill="#eef0ec" opacity="0.69"/><ellipse cx="1248" cy="701" rx="4.7" ry="4.3" fill="#eef0ec" opacity="0.79"/><ellipse cx="1225" cy="716" rx="3.4" ry="2.8" fill="#eef0ec" opacity="0.79"/><ellipse cx="1230" cy="710" rx="3.9" ry="4.8" fill="#eef0ec" opacity="0.79"/><ellipse cx="1177" cy="772" rx="5.0" ry="4.9" fill="#eef0ec" opacity="0.70"/><ellipse cx="1210" cy="776" rx="4.7" ry="4.2" fill="#eef0ec" opacity="0.88"/><ellipse cx="1198" cy="756" rx="4.1" ry="4.8" fill="#eef0ec" opacity="0.77"/><ellipse cx="1157" cy="774" rx="5.3" ry="5.5" fill="#eef0ec" opacity="0.76"/><ellipse cx="1162" cy="779" rx="5.1" ry="4.9" fill="#eef0ec" opacity="0.77"/><ellipse cx="1180" cy="783" rx="4.5" ry="4.7" fill="#eef0ec" opacity="0.81"/><ellipse cx="1187" cy="769" rx="3.9" ry="4.4" fill="#eef0ec" opacity="0.83"/><ellipse cx="1191" cy="763" rx="5.3" ry="5.7" fill="#eef0ec" opacity="0.89"/><ellipse cx="1191" cy="764" rx="3.1" ry="3.2" fill="#eef0ec" opacity="0.72"/><ellipse cx="1197" cy="764" rx="5.3" ry="4.3" fill="#eef0ec" opacity="0.86"/><ellipse cx="1232" cy="776" rx="4.0" ry="4.8" fill="#eef0ec" opacity="0.85"/><ellipse cx="1187" cy="771" rx="5.1" ry="5.0" fill="#eef0ec" opacity="0.88"/><ellipse cx="1100" cy="637" rx="5.4" ry="5.2" fill="#eef0ec" opacity="0.83"/><ellipse cx="1091" cy="653" rx="5.1" ry="5.3" fill="#eef0ec" opacity="0.80"/><ellipse cx="1085" cy="647" rx="3.2" ry="3.3" fill="#eef0ec" opacity="0.74"/><ellipse cx="1094" cy="639" rx="3.2" ry="3.9" fill="#eef0ec" opacity="0.84"/><ellipse cx="1085" cy="650" rx="3.7" ry="3.2" fill="#eef0ec" opacity="0.69"/><ellipse cx="1075" cy="639" rx="3.2" ry="3.3" fill="#eef0ec" opacity="0.86"/><ellipse cx="1066" cy="636" rx="4.7" ry="5.8" fill="#eef0ec" opacity="0.88"/><ellipse cx="1100" cy="652" rx="2.6" ry="2.4" fill="#eef0ec" opacity="0.70"/><ellipse cx="1089" cy="646" rx="3.2" ry="3.7" fill="#eef0ec" opacity="0.86"/><ellipse cx="1067" cy="642" rx="4.7" ry="4.0" fill="#eef0ec" opacity="0.81"/><ellipse cx="1075" cy="643" rx="3.9" ry="3.5" fill="#eef0ec" opacity="0.89"/><ellipse cx="1076" cy="654" rx="4.5" ry="4.4" fill="#eef0ec" opacity="0.74"/><ellipse cx="1030" cy="781" rx="4.2" ry="4.1" fill="#eef0ec" opacity="0.88"/><ellipse cx="1003" cy="773" rx="3.2" ry="3.0" fill="#eef0ec" opacity="0.82"/><ellipse cx="967" cy="772" rx="4.2" ry="4.4" fill="#eef0ec" opacity="0.83"/><ellipse cx="1004" cy="804" rx="3.6" ry="3.6" fill="#eef0ec" opacity="0.68"/><ellipse cx="997" cy="778" rx="3.8" ry="4.6" fill="#eef0ec" opacity="0.69"/><ellipse cx="994" cy="774" rx="4.1" ry="4.0" fill="#eef0ec" opacity="0.81"/><ellipse cx="1010" cy="765" rx="5.3" ry="5.9" fill="#eef0ec" opacity="0.85"/><ellipse cx="1015" cy="788" rx="5.4" ry="4.5" fill="#eef0ec" opacity="0.86"/><ellipse cx="1004" cy="775" rx="4.5" ry="5.0" fill="#eef0ec" opacity="0.87"/><ellipse cx="996" cy="764" rx="4.7" ry="5.4" fill="#eef0ec" opacity="0.80"/><ellipse cx="1012" cy="784" rx="4.4" ry="4.6" fill="#eef0ec" opacity="0.69"/><ellipse cx="1009" cy="773" rx="4.7" ry="5.6" fill="#eef0ec" opacity="0.84"/><ellipse cx="1221" cy="726" rx="3.8" ry="3.6" fill="#eef0ec" opacity="0.81"/><ellipse cx="1238" cy="720" rx="3.8" ry="4.3" fill="#eef0ec" opacity="0.79"/><ellipse cx="1246" cy="717" rx="4.6" ry="3.7" fill="#eef0ec" opacity="0.73"/><ellipse cx="1237" cy="735" rx="4.0" ry="4.1" fill="#eef0ec" opacity="0.69"/><ellipse cx="1234" cy="722" rx="5.1" ry="5.2" fill="#eef0ec" opacity="0.76"/><ellipse cx="1233" cy="738" rx="4.2" ry="3.7" fill="#eef0ec" opacity="0.70"/><ellipse cx="1228" cy="748" rx="5.4" ry="4.9" fill="#eef0ec" opacity="0.72"/><ellipse cx="1250" cy="730" rx="4.9" ry="5.4" fill="#eef0ec" opacity="0.90"/><ellipse cx="1234" cy="761" rx="5.2" ry="6.4" fill="#eef0ec" opacity="0.68"/><ellipse cx="1228" cy="727" rx="3.9" ry="4.5" fill="#eef0ec" opacity="0.74"/><ellipse cx="1229" cy="735" rx="5.2" ry="4.5" fill="#eef0ec" opacity="0.75"/><ellipse cx="1231" cy="727" rx="4.3" ry="3.7" fill="#eef0ec" opacity="0.78"/><ellipse cx="1087" cy="646" rx="3.0" ry="3.4" fill="#eef0ec" opacity="0.86"/><ellipse cx="1073" cy="646" rx="2.1" ry="2.6" fill="#eef0ec" opacity="0.86"/><ellipse cx="1057" cy="639" rx="3.6" ry="3.6" fill="#eef0ec" opacity="0.79"/><ellipse cx="1064" cy="657" rx="2.0" ry="2.4" fill="#eef0ec" opacity="0.72"/><ellipse cx="1075" cy="643" rx="2.8" ry="2.7" fill="#eef0ec" opacity="0.73"/><ellipse cx="1082" cy="644" rx="1.9" ry="1.6" fill="#eef0ec" opacity="0.74"/><ellipse cx="891" cy="631" rx="2.8" ry="3.4" fill="#eef0ec" opacity="0.75"/><ellipse cx="896" cy="635" rx="3.4" ry="3.4" fill="#eef0ec" opacity="0.69"/><ellipse cx="886" cy="632" rx="2.1" ry="1.7" fill="#eef0ec" opacity="0.79"/><ellipse cx="900" cy="631" rx="2.5" ry="2.8" fill="#eef0ec" opacity="0.73"/><ellipse cx="882" cy="635" rx="2.9" ry="3.5" fill="#eef0ec" opacity="0.83"/><ellipse cx="880" cy="628" rx="2.8" ry="3.3" fill="#eef0ec" opacity="0.69"/><ellipse cx="779" cy="621" rx="3.5" ry="3.5" fill="#eef0ec" opacity="0.77"/><ellipse cx="796" cy="620" rx="3.2" ry="3.2" fill="#eef0ec" opacity="0.78"/><ellipse cx="778" cy="616" rx="2.6" ry="2.8" fill="#eef0ec" opacity="0.83"/><ellipse cx="774" cy="626" rx="2.3" ry="2.9" fill="#eef0ec" opacity="0.73"/><ellipse cx="786" cy="628" rx="2.2" ry="2.4" fill="#eef0ec" opacity="0.86"/><ellipse cx="778" cy="629" rx="3.0" ry="3.3" fill="#eef0ec" opacity="0.84"/><ellipse cx="922" cy="642" rx="3.4" ry="3.3" fill="#eef0ec" opacity="0.71"/><ellipse cx="931" cy="639" rx="3.3" ry="2.8" fill="#eef0ec" opacity="0.86"/><ellipse cx="918" cy="634" rx="2.2" ry="2.5" fill="#eef0ec" opacity="0.88"/><ellipse cx="923" cy="635" rx="2.0" ry="2.3" fill="#eef0ec" opacity="0.71"/><ellipse cx="910" cy="644" rx="3.2" ry="3.2" fill="#eef0ec" opacity="0.86"/><ellipse cx="894" cy="644" rx="3.6" ry="3.4" fill="#eef0ec" opacity="0.82"/><ellipse cx="572" cy="625" rx="2.2" ry="2.4" fill="#eef0ec" opacity="0.84"/><ellipse cx="573" cy="628" rx="2.5" ry="2.6" fill="#eef0ec" opacity="0.68"/><ellipse cx="573" cy="622" rx="3.6" ry="3.1" fill="#eef0ec" opacity="0.82"/><ellipse cx="589" cy="626" rx="3.5" ry="3.0" fill="#eef0ec" opacity="0.89"/><ellipse cx="586" cy="631" rx="3.0" ry="3.3" fill="#eef0ec" opacity="0.79"/><ellipse cx="578" cy="636" rx="2.0" ry="2.2" fill="#eef0ec" opacity="0.72"/><ellipse cx="560" cy="617" rx="3.5" ry="3.9" fill="#eef0ec" opacity="0.87"/><ellipse cx="581" cy="629" rx="2.8" ry="3.4" fill="#eef0ec" opacity="0.79"/><ellipse cx="588" cy="630" rx="1.9" ry="1.6" fill="#eef0ec" opacity="0.84"/><ellipse cx="560" cy="629" rx="3.6" ry="4.1" fill="#eef0ec" opacity="0.85"/><ellipse cx="572" cy="636" rx="2.8" ry="3.0" fill="#eef0ec" opacity="0.79"/><ellipse cx="567" cy="630" rx="3.2" ry="3.9" fill="#eef0ec" opacity="0.82"/><ellipse cx="1059" cy="649" rx="2.7" ry="3.3" fill="#eef0ec" opacity="0.85"/><ellipse cx="1051" cy="646" rx="3.4" ry="3.2" fill="#eef0ec" opacity="0.89"/><ellipse cx="1043" cy="642" rx="2.5" ry="2.8" fill="#eef0ec" opacity="0.82"/><ellipse cx="1057" cy="642" rx="2.7" ry="3.3" fill="#eef0ec" opacity="0.78"/><ellipse cx="1030" cy="644" rx="3.5" ry="4.1" fill="#eef0ec" opacity="0.68"/><ellipse cx="1058" cy="649" rx="2.9" ry="3.1" fill="#eef0ec" opacity="0.69"/><ellipse cx="882" cy="633" rx="2.1" ry="2.5" fill="#eef0ec" opacity="0.73"/><ellipse cx="883" cy="630" rx="3.2" ry="3.7" fill="#eef0ec" opacity="0.86"/><ellipse cx="881" cy="638" rx="2.4" ry="2.9" fill="#eef0ec" opacity="0.69"/><ellipse cx="898" cy="637" rx="3.3" ry="4.0" fill="#eef0ec" opacity="0.74"/><ellipse cx="895" cy="635" rx="2.6" ry="3.0" fill="#eef0ec" opacity="0.82"/><ellipse cx="904" cy="629" rx="2.1" ry="1.8" fill="#eef0ec" opacity="0.90"/><ellipse cx="743" cy="635" rx="3.6" ry="3.4" fill="#eef0ec" opacity="0.89"/><ellipse cx="752" cy="634" rx="1.9" ry="1.7" fill="#eef0ec" opacity="0.81"/><ellipse cx="735" cy="642" rx="2.2" ry="1.7" fill="#eef0ec" opacity="0.75"/><ellipse cx="734" cy="638" rx="2.0" ry="2.0" fill="#eef0ec" opacity="0.70"/><ellipse cx="756" cy="640" rx="2.3" ry="1.9" fill="#eef0ec" opacity="0.76"/><ellipse cx="740" cy="631" rx="1.9" ry="2.3" fill="#eef0ec" opacity="0.76"/><ellipse cx="1041" cy="636" rx="3.4" ry="3.1" fill="#eef0ec" opacity="0.84"/><ellipse cx="1047" cy="635" rx="2.7" ry="2.8" fill="#eef0ec" opacity="0.74"/><ellipse cx="1044" cy="643" rx="2.3" ry="1.9" fill="#eef0ec" opacity="0.68"/><ellipse cx="1047" cy="632" rx="2.7" ry="2.5" fill="#eef0ec" opacity="0.82"/><ellipse cx="1048" cy="642" rx="3.2" ry="3.2" fill="#eef0ec" opacity="0.84"/><ellipse cx="1039" cy="635" rx="3.5" ry="4.1" fill="#eef0ec" opacity="0.82"/><ellipse cx="668" cy="634" rx="3.2" ry="3.7" fill="#eef0ec" opacity="0.74"/><ellipse cx="667" cy="645" rx="2.1" ry="2.5" fill="#eef0ec" opacity="0.77"/><ellipse cx="677" cy="641" rx="2.8" ry="3.1" fill="#eef0ec" opacity="0.82"/><ellipse cx="665" cy="633" rx="2.9" ry="3.0" fill="#eef0ec" opacity="0.71"/><ellipse cx="671" cy="640" rx="2.7" ry="2.7" fill="#eef0ec" opacity="0.89"/><ellipse cx="672" cy="633" rx="1.9" ry="2.3" fill="#eef0ec" opacity="0.80"/><ellipse cx="876" cy="629" rx="3.5" ry="3.7" fill="#eef0ec" opacity="0.87"/><ellipse cx="854" cy="634" rx="2.4" ry="2.0" fill="#eef0ec" opacity="0.87"/><ellipse cx="873" cy="633" rx="2.6" ry="2.4" fill="#eef0ec" opacity="0.81"/><ellipse cx="862" cy="632" rx="3.4" ry="4.0" fill="#eef0ec" opacity="0.70"/><ellipse cx="875" cy="626" rx="3.2" ry="3.3" fill="#eef0ec" opacity="0.72"/><ellipse cx="878" cy="636" rx="3.2" ry="3.2" fill="#eef0ec" opacity="0.72"/><ellipse cx="481" cy="640" rx="2.9" ry="2.6" fill="#eef0ec" opacity="0.87"/><ellipse cx="488" cy="640" rx="1.8" ry="2.1" fill="#eef0ec" opacity="0.69"/><ellipse cx="488" cy="651" rx="2.6" ry="3.0" fill="#eef0ec" opacity="0.69"/><ellipse cx="479" cy="644" rx="1.8" ry="1.8" fill="#eef0ec" opacity="0.74"/><ellipse cx="470" cy="642" rx="1.9" ry="2.3" fill="#eef0ec" opacity="0.68"/><ellipse cx="469" cy="646" rx="3.4" ry="3.9" fill="#eef0ec" opacity="0.81"/><ellipse cx="544" cy="630" rx="3.5" ry="3.9" fill="#eef0ec" opacity="0.73"/><ellipse cx="568" cy="636" rx="2.3" ry="2.2" fill="#eef0ec" opacity="0.90"/><ellipse cx="566" cy="632" rx="3.3" ry="3.9" fill="#eef0ec" opacity="0.69"/><ellipse cx="571" cy="635" rx="1.9" ry="2.3" fill="#eef0ec" opacity="0.75"/><ellipse cx="565" cy="635" rx="3.1" ry="3.6" fill="#eef0ec" opacity="0.73"/><ellipse cx="588" cy="629" rx="1.9" ry="2.2" fill="#eef0ec" opacity="0.85"/><ellipse cx="971" cy="645" rx="2.8" ry="3.3" fill="#eef0ec" opacity="0.78"/><ellipse cx="964" cy="644" rx="2.9" ry="3.7" fill="#eef0ec" opacity="0.88"/><ellipse cx="966" cy="637" rx="2.6" ry="2.6" fill="#eef0ec" opacity="0.79"/><ellipse cx="968" cy="642" rx="3.5" ry="4.2" fill="#eef0ec" opacity="0.76"/><ellipse cx="969" cy="636" rx="3.5" ry="2.8" fill="#eef0ec" opacity="0.89"/><ellipse cx="941" cy="633" rx="2.4" ry="2.0" fill="#eef0ec" opacity="0.76"/><ellipse cx="1009" cy="636" rx="3.4" ry="3.6" fill="#eef0ec" opacity="0.79"/><ellipse cx="1012" cy="641" rx="3.5" ry="3.6" fill="#eef0ec" opacity="0.82"/><ellipse cx="1031" cy="643" rx="1.9" ry="1.7" fill="#eef0ec" opacity="0.78"/><ellipse cx="1015" cy="642" rx="2.2" ry="1.9" fill="#eef0ec" opacity="0.77"/><ellipse cx="1019" cy="647" rx="2.0" ry="2.0" fill="#eef0ec" opacity="0.87"/><ellipse cx="1023" cy="648" rx="2.5" ry="2.0" fill="#eef0ec" opacity="0.76"/><ellipse cx="1191" cy="622" rx="3.7" ry="3.9" fill="#f2f3ef" opacity="0.77"/><ellipse cx="1169" cy="596" rx="4.6" ry="4.4" fill="#f2f3ef" opacity="0.82"/><ellipse cx="1172" cy="583" rx="3.6" ry="4.2" fill="#f2f3ef" opacity="0.85"/><ellipse cx="1128" cy="631" rx="2.9" ry="3.0" fill="#f2f3ef" opacity="0.73"/><ellipse cx="1104" cy="585" rx="3.6" ry="3.3" fill="#f2f3ef" opacity="0.85"/><ellipse cx="1095" cy="600" rx="4.7" ry="4.5" fill="#f2f3ef" opacity="0.73"/><ellipse cx="1119" cy="594" rx="3.7" ry="3.4" fill="#f2f3ef" opacity="0.89"/><ellipse cx="1191" cy="566" rx="3.7" ry="3.1" fill="#f2f3ef" opacity="0.75"/><ellipse cx="1076" cy="584" rx="3.4" ry="4.0" fill="#f2f3ef" opacity="0.73"/><ellipse cx="1178" cy="607" rx="4.4" ry="4.1" fill="#f2f3ef" opacity="0.79"/><ellipse cx="1120" cy="585" rx="4.1" ry="4.8" fill="#f2f3ef" opacity="0.85"/><ellipse cx="1153" cy="585" rx="3.1" ry="3.4" fill="#f2f3ef" opacity="0.83"/><ellipse cx="1184" cy="583" rx="2.6" ry="2.1" fill="#f2f3ef" opacity="0.69"/><ellipse cx="1116" cy="589" rx="2.5" ry="2.1" fill="#f2f3ef" opacity="0.88"/><ellipse cx="1110" cy="612" rx="4.2" ry="5.2" fill="#f2f3ef" opacity="0.72"/><ellipse cx="1080" cy="600" rx="3.5" ry="4.3" fill="#f2f3ef" opacity="0.82"/><ellipse cx="1198" cy="599" rx="3.9" ry="4.2" fill="#f2f3ef" opacity="0.89"/><ellipse cx="1148" cy="600" rx="3.8" ry="3.7" fill="#f2f3ef" opacity="0.71"/><ellipse cx="1175" cy="590" rx="2.9" ry="3.0" fill="#f2f3ef" opacity="0.83"/><ellipse cx="1180" cy="585" rx="4.4" ry="5.5" fill="#f2f3ef" opacity="0.77"/><ellipse cx="1173" cy="588" rx="3.4" ry="3.4" fill="#f2f3ef" opacity="0.78"/><ellipse cx="1099" cy="580" rx="2.8" ry="3.3" fill="#f2f3ef" opacity="0.82"/><ellipse cx="1123" cy="598" rx="3.1" ry="2.6" fill="#f2f3ef" opacity="0.81"/><ellipse cx="1158" cy="604" rx="4.2" ry="4.4" fill="#f2f3ef" opacity="0.84"/><ellipse cx="1172" cy="602" rx="2.6" ry="2.6" fill="#f2f3ef" opacity="0.90"/><ellipse cx="1166" cy="583" rx="3.1" ry="3.0" fill="#f2f3ef" opacity="0.71"/><ellipse cx="1130" cy="576" rx="3.2" ry="3.0" fill="#f2f3ef" opacity="0.70"/><ellipse cx="1153" cy="583" rx="5.0" ry="4.4" fill="#f2f3ef" opacity="0.86"/><ellipse cx="1225" cy="592" rx="2.5" ry="2.6" fill="#f2f3ef" opacity="0.83"/><ellipse cx="1105" cy="602" rx="2.4" ry="2.9" fill="#f2f3ef" opacity="0.84"/><ellipse cx="1182" cy="595" rx="4.6" ry="4.0" fill="#f2f3ef" opacity="0.72"/><ellipse cx="1191" cy="552" rx="5.0" ry="4.3" fill="#f2f3ef" opacity="0.72"/><ellipse cx="1170" cy="592" rx="3.3" ry="3.7" fill="#f2f3ef" opacity="0.89"/><ellipse cx="1167" cy="605" rx="3.8" ry="3.2" fill="#f2f3ef" opacity="0.71"/><ellipse cx="1162" cy="603" rx="2.5" ry="3.1" fill="#f2f3ef" opacity="0.89"/><ellipse cx="1108" cy="595" rx="3.8" ry="3.8" fill="#f2f3ef" opacity="0.86"/><ellipse cx="1238" cy="575" rx="3.1" ry="3.8" fill="#f2f3ef" opacity="0.81"/><ellipse cx="1109" cy="633" rx="3.7" ry="3.1" fill="#f2f3ef" opacity="0.83"/><ellipse cx="1104" cy="605" rx="2.9" ry="2.9" fill="#f2f3ef" opacity="0.89"/><ellipse cx="1087" cy="582" rx="3.2" ry="3.6" fill="#f2f3ef" opacity="0.83"/><ellipse cx="1156" cy="580" rx="3.3" ry="3.3" fill="#f2f3ef" opacity="0.81"/><ellipse cx="1099" cy="595" rx="4.4" ry="3.9" fill="#f2f3ef" opacity="0.71"/><ellipse cx="1184" cy="604" rx="2.9" ry="2.6" fill="#f2f3ef" opacity="0.88"/><ellipse cx="1085" cy="600" rx="3.1" ry="2.8" fill="#f2f3ef" opacity="0.69"/><ellipse cx="1140" cy="580" rx="4.9" ry="4.5" fill="#f2f3ef" opacity="0.71"/><ellipse cx="1114" cy="592" rx="3.2" ry="3.3" fill="#f2f3ef" opacity="0.70"/><ellipse cx="1150" cy="579" rx="5.0" ry="4.8" fill="#f2f3ef" opacity="0.81"/><ellipse cx="1128" cy="600" rx="2.6" ry="2.8" fill="#f2f3ef" opacity="0.78"/><ellipse cx="1155" cy="587" rx="2.5" ry="2.4" fill="#f2f3ef" opacity="0.88"/><ellipse cx="1137" cy="564" rx="3.1" ry="3.6" fill="#f2f3ef" opacity="0.71"/><ellipse cx="1135" cy="608" rx="2.4" ry="2.4" fill="#f2f3ef" opacity="0.81"/><ellipse cx="1157" cy="601" rx="4.8" ry="4.5" fill="#f2f3ef" opacity="0.88"/><ellipse cx="1135" cy="604" rx="3.3" ry="4.1" fill="#f2f3ef" opacity="0.76"/><ellipse cx="1188" cy="593" rx="3.8" ry="3.6" fill="#f2f3ef" opacity="0.81"/><ellipse cx="1142" cy="577" rx="2.8" ry="2.5" fill="#f2f3ef" opacity="0.88"/><ellipse cx="1124" cy="561" rx="2.8" ry="3.3" fill="#f2f3ef" opacity="0.85"/><ellipse cx="1099" cy="618" rx="2.8" ry="3.4" fill="#f2f3ef" opacity="0.79"/><ellipse cx="1069" cy="587" rx="3.4" ry="3.5" fill="#f2f3ef" opacity="0.82"/><ellipse cx="1134" cy="570" rx="4.3" ry="3.8" fill="#f2f3ef" opacity="0.85"/><ellipse cx="1109" cy="572" rx="4.3" ry="4.5" fill="#f2f3ef" opacity="0.72"/><ellipse cx="1256" cy="595" rx="4.1" ry="4.4" fill="#f2f3ef" opacity="0.73"/><ellipse cx="1130" cy="609" rx="4.4" ry="5.5" fill="#f2f3ef" opacity="0.87"/><ellipse cx="1123" cy="577" rx="3.7" ry="3.0" fill="#f2f3ef" opacity="0.71"/><ellipse cx="1233" cy="568" rx="4.6" ry="4.9" fill="#f2f3ef" opacity="0.72"/><ellipse cx="1162" cy="604" rx="4.5" ry="3.6" fill="#f2f3ef" opacity="0.88"/><ellipse cx="1162" cy="570" rx="4.2" ry="4.0" fill="#f2f3ef" opacity="0.71"/><ellipse cx="1149" cy="583" rx="2.8" ry="2.5" fill="#f2f3ef" opacity="0.78"/><ellipse cx="1148" cy="600" rx="3.0" ry="2.9" fill="#f2f3ef" opacity="0.70"/><ellipse cx="1138" cy="599" rx="2.9" ry="2.4" fill="#f2f3ef" opacity="0.77"/><ellipse cx="1146" cy="596" rx="4.3" ry="4.4" fill="#f2f3ef" opacity="0.70"/><ellipse cx="1190" cy="608" rx="4.9" ry="4.1" fill="#f2f3ef" opacity="0.83"/><ellipse cx="1158" cy="600" rx="4.7" ry="5.4" fill="#f2f3ef" opacity="0.69"/><ellipse cx="1160" cy="566" rx="3.5" ry="3.4" fill="#f2f3ef" opacity="0.77"/><ellipse cx="1124" cy="579" rx="4.2" ry="5.0" fill="#f2f3ef" opacity="0.77"/><ellipse cx="1124" cy="586" rx="3.5" ry="4.2" fill="#f2f3ef" opacity="0.73"/><ellipse cx="1189" cy="596" rx="3.5" ry="3.0" fill="#f2f3ef" opacity="0.81"/><ellipse cx="1140" cy="585" rx="3.1" ry="2.6" fill="#f2f3ef" opacity="0.75"/><ellipse cx="1164" cy="592" rx="4.7" ry="5.8" fill="#f2f3ef" opacity="0.83"/><ellipse cx="1108" cy="582" rx="3.6" ry="3.4" fill="#f2f3ef" opacity="0.80"/><ellipse cx="1174" cy="609" rx="4.5" ry="5.4" fill="#f2f3ef" opacity="0.89"/><ellipse cx="1129" cy="586" rx="3.9" ry="4.6" fill="#f2f3ef" opacity="0.71"/><ellipse cx="1151" cy="578" rx="3.2" ry="3.2" fill="#f2f3ef" opacity="0.88"/><ellipse cx="1202" cy="602" rx="3.5" ry="4.1" fill="#f2f3ef" opacity="0.70"/><ellipse cx="1157" cy="601" rx="3.8" ry="3.6" fill="#f2f3ef" opacity="0.73"/><ellipse cx="1062" cy="602" rx="3.9" ry="4.6" fill="#f2f3ef" opacity="0.77"/><ellipse cx="1230" cy="578" rx="2.5" ry="2.8" fill="#f2f3ef" opacity="0.86"/><ellipse cx="1135" cy="570" rx="4.1" ry="5.0" fill="#f2f3ef" opacity="0.72"/><ellipse cx="1158" cy="582" rx="3.8" ry="3.4" fill="#f2f3ef" opacity="0.72"/><ellipse cx="1135" cy="587" rx="2.4" ry="2.6" fill="#f2f3ef" opacity="0.81"/><ellipse cx="1158" cy="590" rx="3.2" ry="3.9" fill="#f2f3ef" opacity="0.70"/><ellipse cx="1158" cy="584" rx="3.6" ry="3.9" fill="#f2f3ef" opacity="0.83"/><ellipse cx="1100" cy="594" rx="2.9" ry="2.6" fill="#f2f3ef" opacity="0.69"/><ellipse cx="1128" cy="592" rx="4.7" ry="3.8" fill="#f2f3ef" opacity="0.74"/><ellipse cx="1114" cy="576" rx="4.3" ry="5.3" fill="#f2f3ef" opacity="0.78"/><ellipse cx="1108" cy="563" rx="4.5" ry="4.4" fill="#f2f3ef" opacity="0.74"/><ellipse cx="1165" cy="611" rx="3.4" ry="3.3" fill="#f2f3ef" opacity="0.78"/><ellipse cx="1174" cy="609" rx="4.3" ry="3.7" fill="#f2f3ef" opacity="0.75"/><ellipse cx="1108" cy="579" rx="3.8" ry="4.7" fill="#f2f3ef" opacity="0.86"/><ellipse cx="1154" cy="573" rx="4.8" ry="5.0" fill="#f2f3ef" opacity="0.80"/><ellipse cx="1160" cy="604" rx="3.3" ry="3.1" fill="#f2f3ef" opacity="0.73"/><ellipse cx="1158" cy="598" rx="3.8" ry="4.5" fill="#f2f3ef" opacity="0.77"/><ellipse cx="1136" cy="560" rx="4.8" ry="5.2" fill="#f2f3ef" opacity="0.70"/><ellipse cx="1165" cy="589" rx="2.8" ry="2.4" fill="#f2f3ef" opacity="0.68"/><ellipse cx="1228" cy="583" rx="2.8" ry="2.4" fill="#f2f3ef" opacity="0.68"/><ellipse cx="1173" cy="583" rx="3.9" ry="3.8" fill="#f2f3ef" opacity="0.76"/><ellipse cx="1087" cy="567" rx="2.6" ry="2.9" fill="#f2f3ef" opacity="0.77"/><ellipse cx="1163" cy="573" rx="3.1" ry="2.8" fill="#f2f3ef" opacity="0.68"/><ellipse cx="1071" cy="581" rx="3.9" ry="3.8" fill="#f2f3ef" opacity="0.81"/><ellipse cx="1150" cy="555" rx="3.6" ry="3.8" fill="#f2f3ef" opacity="0.82"/><ellipse cx="1148" cy="622" rx="2.6" ry="3.2" fill="#f2f3ef" opacity="0.77"/><ellipse cx="1198" cy="582" rx="2.9" ry="3.3" fill="#f2f3ef" opacity="0.76"/><ellipse cx="1205" cy="570" rx="4.9" ry="4.5" fill="#f2f3ef" opacity="0.76"/><ellipse cx="1178" cy="566" rx="4.2" ry="5.0" fill="#f2f3ef" opacity="0.87"/><ellipse cx="1255" cy="591" rx="3.0" ry="3.5" fill="#f2f3ef" opacity="0.83"/><ellipse cx="1226" cy="579" rx="3.4" ry="3.9" fill="#f2f3ef" opacity="0.71"/><ellipse cx="1211" cy="571" rx="3.8" ry="3.8" fill="#f2f3ef" opacity="0.84"/><ellipse cx="1246" cy="619" rx="4.4" ry="4.6" fill="#f2f3ef" opacity="0.79"/><ellipse cx="1225" cy="598" rx="2.5" ry="3.0" fill="#f2f3ef" opacity="0.82"/><ellipse cx="1219" cy="597" rx="3.5" ry="4.0" fill="#f2f3ef" opacity="0.74"/><ellipse cx="1220" cy="599" rx="3.5" ry="3.9" fill="#f2f3ef" opacity="0.87"/><ellipse cx="1230" cy="593" rx="2.5" ry="2.8" fill="#f2f3ef" opacity="0.83"/><ellipse cx="1230" cy="598" rx="4.6" ry="5.2" fill="#f2f3ef" opacity="0.69"/><ellipse cx="1237" cy="570" rx="3.2" ry="3.9" fill="#f2f3ef" opacity="0.84"/><ellipse cx="1187" cy="581" rx="4.0" ry="4.9" fill="#f2f3ef" opacity="0.88"/><ellipse cx="1205" cy="574" rx="2.7" ry="2.7" fill="#f2f3ef" opacity="0.78"/><ellipse cx="1208" cy="573" rx="3.0" ry="3.4" fill="#f2f3ef" opacity="0.72"/><ellipse cx="1181" cy="578" rx="2.9" ry="2.5" fill="#f2f3ef" opacity="0.78"/><ellipse cx="1231" cy="599" rx="3.1" ry="2.6" fill="#f2f3ef" opacity="0.89"/><ellipse cx="1209" cy="588" rx="4.7" ry="5.6" fill="#f2f3ef" opacity="0.70"/><ellipse cx="1211" cy="600" rx="2.7" ry="2.2" fill="#f2f3ef" opacity="0.82"/><ellipse cx="1205" cy="573" rx="3.1" ry="3.5" fill="#f2f3ef" opacity="0.82"/><ellipse cx="1271" cy="600" rx="4.7" ry="5.7" fill="#f2f3ef" opacity="0.85"/><ellipse cx="1213" cy="594" rx="3.5" ry="3.9" fill="#f2f3ef" opacity="0.88"/><ellipse cx="1252" cy="603" rx="4.5" ry="4.9" fill="#f2f3ef" opacity="0.78"/><ellipse cx="1238" cy="577" rx="4.5" ry="5.1" fill="#f2f3ef" opacity="0.80"/><ellipse cx="1228" cy="582" rx="2.9" ry="2.8" fill="#f2f3ef" opacity="0.81"/><ellipse cx="1220" cy="588" rx="3.6" ry="3.5" fill="#f2f3ef" opacity="0.90"/><ellipse cx="1225" cy="601" rx="4.0" ry="3.5" fill="#f2f3ef" opacity="0.68"/><ellipse cx="1196" cy="586" rx="4.2" ry="3.5" fill="#f2f3ef" opacity="0.70"/><ellipse cx="1256" cy="576" rx="4.1" ry="3.6" fill="#f2f3ef" opacity="0.81"/><ellipse cx="1236" cy="600" rx="4.2" ry="4.3" fill="#f2f3ef" opacity="0.78"/><ellipse cx="1273" cy="604" rx="3.0" ry="3.5" fill="#f2f3ef" opacity="0.76"/><ellipse cx="1243" cy="584" rx="3.6" ry="3.6" fill="#f2f3ef" opacity="0.86"/><ellipse cx="1233" cy="595" rx="3.3" ry="2.7" fill="#f2f3ef" opacity="0.68"/><ellipse cx="1257" cy="572" rx="4.6" ry="4.4" fill="#f2f3ef" opacity="0.74"/><ellipse cx="1228" cy="586" rx="3.5" ry="4.0" fill="#f2f3ef" opacity="0.76"/><ellipse cx="1188" cy="547" rx="4.9" ry="6.0" fill="#f2f3ef" opacity="0.81"/><ellipse cx="1206" cy="583" rx="3.7" ry="4.5" fill="#f2f3ef" opacity="0.74"/><ellipse cx="1224" cy="582" rx="4.1" ry="4.7" fill="#f2f3ef" opacity="0.82"/><ellipse cx="1240" cy="603" rx="2.7" ry="2.6" fill="#f2f3ef" opacity="0.77"/><ellipse cx="1204" cy="599" rx="3.7" ry="3.9" fill="#f2f3ef" opacity="0.70"/><ellipse cx="1255" cy="598" rx="2.5" ry="2.0" fill="#f2f3ef" opacity="0.78"/><ellipse cx="1232" cy="555" rx="4.3" ry="4.4" fill="#f2f3ef" opacity="0.78"/><ellipse cx="1220" cy="582" rx="3.3" ry="2.9" fill="#f2f3ef" opacity="0.78"/><ellipse cx="1198" cy="591" rx="2.8" ry="2.8" fill="#f2f3ef" opacity="0.81"/><ellipse cx="1242" cy="600" rx="3.0" ry="2.8" fill="#f2f3ef" opacity="0.80"/><ellipse cx="1213" cy="569" rx="2.4" ry="2.7" fill="#f2f3ef" opacity="0.75"/><ellipse cx="1198" cy="609" rx="4.6" ry="5.3" fill="#f2f3ef" opacity="0.88"/><ellipse cx="1194" cy="595" rx="2.6" ry="2.4" fill="#f2f3ef" opacity="0.74"/><ellipse cx="1233" cy="565" rx="4.0" ry="4.0" fill="#f2f3ef" opacity="0.85"/><ellipse cx="1205" cy="578" rx="2.4" ry="2.9" fill="#f2f3ef" opacity="0.79"/><ellipse cx="1166" cy="588" rx="3.4" ry="3.0" fill="#f2f3ef" opacity="0.73"/><ellipse cx="1201" cy="593" rx="2.7" ry="3.3" fill="#f2f3ef" opacity="0.75"/><ellipse cx="1225" cy="574" rx="3.0" ry="2.9" fill="#f2f3ef" opacity="0.79"/><ellipse cx="1205" cy="580" rx="4.0" ry="3.7" fill="#f2f3ef" opacity="0.85"/><ellipse cx="1226" cy="606" rx="3.9" ry="4.5" fill="#f2f3ef" opacity="0.87"/><ellipse cx="1192" cy="592" rx="4.4" ry="3.8" fill="#f2f3ef" opacity="0.80"/><ellipse cx="1211" cy="593" rx="4.1" ry="4.5" fill="#f2f3ef" opacity="0.85"/><ellipse cx="1244" cy="593" rx="2.4" ry="2.8" fill="#f2f3ef" opacity="0.83"/><ellipse cx="1232" cy="609" rx="2.5" ry="3.1" fill="#f2f3ef" opacity="0.71"/><ellipse cx="1199" cy="673" rx="3.5" ry="3.5" fill="#ece9c4" opacity="0.66"/><ellipse cx="1144" cy="657" rx="2.1" ry="2.1" fill="#ece9c4" opacity="0.66"/><ellipse cx="1189" cy="632" rx="2.2" ry="1.9" fill="#ece9c4" opacity="0.57"/><ellipse cx="1175" cy="631" rx="2.5" ry="2.4" fill="#ece9c4" opacity="0.70"/><ellipse cx="1165" cy="659" rx="2.3" ry="2.4" fill="#ece9c4" opacity="0.57"/><ellipse cx="1141" cy="659" rx="3.3" ry="3.5" fill="#ece9c4" opacity="0.59"/><ellipse cx="1076" cy="647" rx="2.9" ry="2.8" fill="#ece9c4" opacity="0.69"/><ellipse cx="1196" cy="660" rx="3.3" ry="3.0" fill="#ece9c4" opacity="0.54"/><ellipse cx="1194" cy="645" rx="3.1" ry="2.8" fill="#ece9c4" opacity="0.59"/><ellipse cx="1269" cy="639" rx="2.2" ry="2.3" fill="#ece9c4" opacity="0.55"/><ellipse cx="1282" cy="667" rx="2.4" ry="2.0" fill="#ece9c4" opacity="0.58"/><ellipse cx="1127" cy="652" rx="2.0" ry="2.1" fill="#ece9c4" opacity="0.65"/><ellipse cx="1228" cy="618" rx="3.4" ry="3.2" fill="#ece9c4" opacity="0.60"/><ellipse cx="1155" cy="638" rx="2.6" ry="2.3" fill="#ece9c4" opacity="0.57"/><ellipse cx="1236" cy="664" rx="3.4" ry="3.2" fill="#ece9c4" opacity="0.70"/><ellipse cx="1190" cy="657" rx="2.0" ry="1.9" fill="#ece9c4" opacity="0.67"/><ellipse cx="1165" cy="658" rx="3.1" ry="3.8" fill="#ece9c4" opacity="0.56"/><ellipse cx="1287" cy="655" rx="2.5" ry="2.6" fill="#ece9c4" opacity="0.60"/><ellipse cx="1193" cy="686" rx="2.7" ry="3.3" fill="#ece9c4" opacity="0.62"/><ellipse cx="1139" cy="624" rx="2.0" ry="1.8" fill="#ece9c4" opacity="0.58"/><ellipse cx="1150" cy="649" rx="3.4" ry="3.3" fill="#ece9c4" opacity="0.56"/><ellipse cx="1152" cy="658" rx="3.1" ry="3.6" fill="#ece9c4" opacity="0.61"/><ellipse cx="1134" cy="674" rx="3.3" ry="4.0" fill="#ece9c4" opacity="0.60"/><ellipse cx="1214" cy="645" rx="2.8" ry="2.5" fill="#ece9c4" opacity="0.68"/><ellipse cx="1211" cy="640" rx="3.3" ry="4.0" fill="#ece9c4" opacity="0.59"/><ellipse cx="1216" cy="639" rx="1.8" ry="1.9" fill="#ece9c4" opacity="0.63"/><ellipse cx="1157" cy="684" rx="2.6" ry="2.3" fill="#ece9c4" opacity="0.62"/><ellipse cx="1178" cy="630" rx="2.1" ry="1.9" fill="#ece9c4" opacity="0.69"/><ellipse cx="1232" cy="669" rx="2.6" ry="2.5" fill="#ece9c4" opacity="0.67"/><ellipse cx="1117" cy="641" rx="3.4" ry="2.9" fill="#ece9c4" opacity="0.55"/><ellipse cx="1141" cy="526" rx="1.6" ry="1.5" fill="#eceee8" opacity="0.58"/><ellipse cx="1204" cy="531" rx="1.2" ry="1.0" fill="#eceee8" opacity="0.57"/><ellipse cx="1154" cy="547" rx="0.9" ry="1.0" fill="#eceee8" opacity="0.61"/><ellipse cx="1262" cy="529" rx="1.6" ry="1.3" fill="#eceee8" opacity="0.57"/><ellipse cx="1261" cy="538" rx="0.8" ry="0.9" fill="#eceee8" opacity="0.63"/><ellipse cx="1140" cy="512" rx="1.3" ry="1.4" fill="#eceee8" opacity="0.61"/><ellipse cx="1202" cy="532" rx="1.3" ry="1.4" fill="#eceee8" opacity="0.60"/><ellipse cx="1068" cy="548" rx="1.0" ry="0.8" fill="#eceee8" opacity="0.69"/><ellipse cx="1179" cy="519" rx="1.1" ry="1.3" fill="#eceee8" opacity="0.60"/><ellipse cx="1210" cy="537" rx="1.6" ry="1.8" fill="#eceee8" opacity="0.61"/><ellipse cx="1260" cy="525" rx="1.1" ry="1.1" fill="#eceee8" opacity="0.58"/><ellipse cx="1170" cy="486" rx="1.6" ry="1.8" fill="#eceee8" opacity="0.66"/><ellipse cx="1146" cy="497" rx="1.6" ry="1.4" fill="#eceee8" opacity="0.56"/><ellipse cx="1062" cy="545" rx="1.1" ry="1.0" fill="#eceee8" opacity="0.67"/><ellipse cx="1144" cy="498" rx="1.8" ry="1.9" fill="#eceee8" opacity="0.62"/><ellipse cx="1218" cy="549" rx="1.0" ry="1.2" fill="#eceee8" opacity="0.55"/><ellipse cx="1115" cy="523" rx="1.0" ry="1.1" fill="#eceee8" opacity="0.69"/><ellipse cx="1203" cy="515" rx="1.3" ry="1.1" fill="#eceee8" opacity="0.61"/><ellipse cx="1237" cy="527" rx="1.2" ry="1.3" fill="#eceee8" opacity="0.67"/><ellipse cx="1138" cy="509" rx="1.0" ry="1.1" fill="#eceee8" opacity="0.63"/><ellipse cx="1167" cy="541" rx="0.9" ry="0.9" fill="#eceee8" opacity="0.64"/><ellipse cx="1186" cy="547" rx="1.6" ry="1.3" fill="#eceee8" opacity="0.56"/><ellipse cx="1064" cy="508" rx="0.9" ry="1.0" fill="#eceee8" opacity="0.67"/><ellipse cx="1168" cy="523" rx="1.2" ry="1.5" fill="#eceee8" opacity="0.53"/><ellipse cx="1249" cy="523" rx="1.4" ry="1.2" fill="#eceee8" opacity="0.66"/><ellipse cx="1219" cy="524" rx="1.2" ry="1.0" fill="#eceee8" opacity="0.53"/><ellipse cx="1200" cy="521" rx="1.3" ry="1.5" fill="#eceee8" opacity="0.65"/><ellipse cx="1098" cy="533" rx="1.6" ry="1.6" fill="#eceee8" opacity="0.56"/><ellipse cx="1102" cy="515" rx="1.4" ry="1.2" fill="#eceee8" opacity="0.53"/><ellipse cx="1107" cy="547" rx="1.4" ry="1.5" fill="#eceee8" opacity="0.57"/><ellipse cx="1132" cy="560" rx="1.5" ry="1.5" fill="#eceee8" opacity="0.68"/><ellipse cx="1230" cy="543" rx="1.0" ry="1.1" fill="#eceee8" opacity="0.67"/><ellipse cx="1213" cy="511" rx="1.4" ry="1.3" fill="#eceee8" opacity="0.53"/><ellipse cx="1183" cy="528" rx="1.3" ry="1.4" fill="#eceee8" opacity="0.54"/><ellipse cx="1188" cy="533" rx="1.6" ry="1.7" fill="#eceee8" opacity="0.70"/><ellipse cx="1146" cy="519" rx="1.2" ry="1.0" fill="#eceee8" opacity="0.68"/><ellipse cx="1143" cy="532" rx="1.0" ry="1.2" fill="#eceee8" opacity="0.55"/><ellipse cx="1093" cy="560" rx="1.1" ry="1.1" fill="#eceee8" opacity="0.65"/><ellipse cx="1172" cy="520" rx="1.8" ry="2.0" fill="#eceee8" opacity="0.57"/><ellipse cx="1166" cy="527" rx="1.3" ry="1.5" fill="#eceee8" opacity="0.55"/><ellipse cx="1174" cy="529" rx="1.3" ry="1.5" fill="#eceee8" opacity="0.63"/><ellipse cx="1166" cy="521" rx="1.7" ry="1.9" fill="#eceee8" opacity="0.67"/><ellipse cx="1211" cy="525" rx="1.0" ry="0.9" fill="#eceee8" opacity="0.68"/><ellipse cx="1143" cy="531" rx="1.5" ry="1.5" fill="#eceee8" opacity="0.55"/><ellipse cx="1171" cy="512" rx="1.0" ry="0.9" fill="#eceee8" opacity="0.61"/><ellipse cx="1157" cy="500" rx="1.0" ry="1.0" fill="#eceee8" opacity="0.53"/><ellipse cx="1267" cy="527" rx="1.8" ry="1.8" fill="#eceee8" opacity="0.63"/><ellipse cx="1130" cy="518" rx="1.3" ry="1.6" fill="#eceee8" opacity="0.63"/><ellipse cx="1162" cy="533" rx="1.2" ry="1.2" fill="#eceee8" opacity="0.53"/><ellipse cx="1072" cy="523" rx="1.4" ry="1.6" fill="#eceee8" opacity="0.70"/><ellipse cx="1273" cy="522" rx="1.1" ry="1.3" fill="#eceee8" opacity="0.56"/><ellipse cx="1167" cy="511" rx="1.6" ry="1.9" fill="#eceee8" opacity="0.64"/><ellipse cx="1266" cy="525" rx="1.7" ry="2.0" fill="#eceee8" opacity="0.57"/><ellipse cx="1162" cy="552" rx="1.6" ry="1.4" fill="#eceee8" opacity="0.67"/><ellipse cx="1191" cy="542" rx="1.0" ry="1.3" fill="#eceee8" opacity="0.59"/><ellipse cx="1195" cy="521" rx="1.0" ry="1.0" fill="#eceee8" opacity="0.66"/><ellipse cx="1297" cy="527" rx="1.0" ry="1.2" fill="#eceee8" opacity="0.54"/><ellipse cx="1181" cy="519" rx="1.4" ry="1.7" fill="#eceee8" opacity="0.69"/><ellipse cx="1250" cy="510" rx="1.7" ry="1.9" fill="#eceee8" opacity="0.59"/><ellipse cx="1227" cy="505" rx="1.4" ry="1.6" fill="#eceee8" opacity="0.67"/></g>
</g></svg>
<svg class="abs" width="1300" height="823" viewBox="0 0 1300 823">
<defs>
<filter id="sh" x="-5%" y="-5%" width="110%" height="115%"><feGaussianBlur stdDeviation="0.7"/></filter>
<filter id="ib" x="-2%" y="-5%" width="104%" height="110%"><feGaussianBlur stdDeviation="1.3"/></filter>
<linearGradient id="blu" x1="0" y1="0" x2="0" y2="1"><stop offset="0" stop-color="#0a9fe0"/><stop offset="0.012" stop-color="#00adee"/><stop offset="0.975" stop-color="#00adee"/><stop offset="1" stop-color="#0787c4"/></linearGradient>
<filter id="glow" x="-10%" y="-20%" width="120%" height="140%"><feMorphology in="SourceAlpha" operator="dilate" radius="3.9" result="d"/><feGaussianBlur in="d" stdDeviation="1" result="b"/><feFlood flood-color="#ffffff"/><feComposite in2="b" operator="in" result="g"/><feMerge><feMergeNode in="g"/><feMergeNode in="g"/><feMergeNode in="g"/><feMergeNode in="SourceGraphic"/></feMerge></filter>
</defs>
<path d="M297.5 261.3 H1101.8 V561.1 A59.5 59.5 0 0 1 1042.3 620.6 H238.0 V320.8 A59.5 59.5 0 0 1 297.5 261.3 Z" fill="#a3a59e" fill-opacity="0.85" filter="url(#sh)"/>
<rect x="241.5" y="264.5" width="857.5" height="352" fill="none" stroke="#a4a4a4" stroke-width="1"/>
<path d="M297.4 261.8 H1101.0 V560.8 A58.5 58.5 0 0 1 1042.5 619.3 H238.9 V320.3 A58.5 58.5 0 0 1 297.4 261.8 Z" fill="#fbfaf8"/>
<clipPath id="bc"><path d="M297.3 264.3 H1097.2 V559.7 A55.5 55.5 0 0 1 1041.7 615.2 H241.8 V319.8 A55.5 55.5 0 0 1 297.3 264.3 Z"/></clipPath>
<path d="M297.3 264.3 H1097.2 V559.7 A55.5 55.5 0 0 1 1041.7 615.2 H241.8 V319.8 A55.5 55.5 0 0 1 297.3 264.3 Z" fill="#00acec"/>
<g clip-path="url(#bc)"><path d="M297.3 264.3 H1097.2 V559.7 A55.5 55.5 0 0 1 1041.7 615.2 H241.8 V319.8 A55.5 55.5 0 0 1 297.3 264.3 Z" fill="none" stroke="#00689c" stroke-opacity="0.42" stroke-width="6" filter="url(#ib)"/><path d="M241.4 300 V616" stroke="#00689c" stroke-opacity="0.55" stroke-width="5" filter="url(#ib)"/><path d="M300 268.3 H1097" stroke="#19c4ff" stroke-opacity="0.8" stroke-width="1.6" filter="url(#ib)"/><path d="M241 615.6 H1098" stroke="#005f92" stroke-opacity="0.7" stroke-width="4" filter="url(#ib)"/><path d="M297.3 264.3 H1097.2 V559.7 A55.5 55.5 0 0 1 1041.7 615.2 H241.8 V319.8 A55.5 55.5 0 0 1 297.3 264.3 Z" fill="none" stroke="#9ee8ff" stroke-width="1.6"/></g>
<path d="M1099 264.5 V616.5 M241.5 320 V616.5 M1042 616.5 H1099" fill="none" stroke="#b8aeae" stroke-opacity="0.6" stroke-width="1"/>
<line x1="669.5" y1="244" x2="669.5" y2="260" stroke="#858585" stroke-width="1"/>
<circle cx="241.5" cy="264.5" r="3.7" fill="#ffffff" stroke="#7c7c7c" stroke-width="1.4"/>
<circle cx="670" cy="264.5" r="3.7" fill="#ffffff" stroke="#7c7c7c" stroke-width="1.4"/>
<circle cx="241.5" cy="440.5" r="3.7" fill="#ffffff" stroke="#7c7c7c" stroke-width="1.4"/>
<circle cx="1099" cy="440.5" r="3.7" fill="#ffffff" stroke="#7c7c7c" stroke-width="1.4"/>
<circle cx="1099" cy="616.5" r="3.7" fill="#ffffff" stroke="#7c7c7c" stroke-width="1.4"/>
<circle cx="300" cy="264.5" r="3.5" fill="#ffa31a" stroke="#c08c3c" stroke-width="1.2"/>
<circle cx="1098.5" cy="264.5" r="3.5" fill="#ffa31a" stroke="#c08c3c" stroke-width="1.2"/>
<path d="M672.02 241.30 A6.0 6.0 0 1 1 675.14 235.16" fill="none" stroke="#7c7c7c" stroke-width="3.8"/><path d="M671.6 233.6 L682.4 233.6 L677.2 241 Z" fill="#7c7c7c" stroke="#7c7c7c" stroke-width="1.2" stroke-linejoin="round"/>
<path d="M672.02 241.30 A6.0 6.0 0 1 1 675.14 235.16" fill="none" stroke="#f3f7f9" stroke-width="1.5"/><path d="M673.8 234.6 L680.2 234.6 L677.1 239 Z" fill="#f3f7f9"/>
<path d="M293 541.5 L487 401.2 L480.2 394.3 L502.8 396.2 L497.1 416.8 L493.5 408.8 L296 542.5 Z" fill="#fb3b2d"/>
<g filter="url(#glow)" font-family="Liberation Sans" font-size="40" fill="#ea0000"><text x="164.4" y="594" textLength="220.6" lengthAdjust="spacingAndGlyphs">Нажать для</text><text x="103.6" y="640.8">добавления текста</text></g>
</svg>
<svg class="abs" width="1300" height="823" viewBox="0 0 1300 823">
<g fill="#2212f0">
<rect x="197" y="357" width="40" height="41" rx="9"/>
<rect x="232" y="371" width="96" height="19" rx="8"/>
<circle cx="199" cy="378" r="4"/>
<circle cx="203" cy="360" r="5"/>
<circle cx="215" cy="358.5" r="4.5"/>
<circle cx="228" cy="359" r="5"/>
<circle cx="236" cy="366" r="4"/>
<circle cx="210" cy="396" r="5"/>
<circle cx="225" cy="396.5" r="5"/>
<circle cx="236" cy="392" r="5"/>
<circle cx="270.2" cy="365.5" r="5"/>
<circle cx="286.2" cy="366.8" r="5"/>
<circle cx="305.8" cy="359.4" r="4.8"/>
<circle cx="244" cy="393.6" r="4.5"/>
<circle cx="267.4" cy="393" r="4.8"/>
<circle cx="277.4" cy="395" r="4.8"/>
<circle cx="318.9" cy="393.9" r="4.8"/>
<circle cx="255" cy="371" r="4"/>
<circle cx="300" cy="371" r="4"/>
<circle cx="322" cy="373" r="4"/>
</g>
<g><path d="M203.2 364.6 L214 363.4 L216 390.6 L204.6 391.6 Z" fill="#a8ecff"/><path d="M204.6 364.6 V391.4 M206.4 364.4 V391.2" stroke="#eaffff" stroke-width="0.8"/><path d="M209.6 363 L221.6 364.6 L225.6 369 L225.6 391.6 L207.6 391.6 Z" fill="#e2f9ff"/><path d="M209.4 362.6 L213 362 L221.8 364.4" fill="none" stroke="#bff2ff" stroke-width="1"/><g stroke="#1fbde4" stroke-width="1.3"><path d="M212.6 370.4 L222.4 373.4 M212 373.4 L222 376.4 M211.4 376.4 L221.4 379.4 M210.8 379.4 L220 382.2"/></g><rect x="212" y="383.2" width="14" height="8.8" fill="#9feaff"/><rect x="212" y="383.2" width="5" height="8.8" fill="#5fd8f6"/><g stroke="#1fbde4" stroke-width="1"><path d="M218.4 385.4 H224.6 M218.4 387.6 H224.6 M218.4 389.8 H224.6 M213 385.6 H216 M213 388.6 H216"/></g></g>
<text x="229.4" y="385.2" textLength="92.5" lengthAdjust="spacingAndGlyphs" font-family="Liberation Serif" font-weight="bold" font-size="15" fill="#ffffff">WorKProekT</text>
</svg>
<div id="vline" class="abs"></div><div id="hline" class="abs"></div><div id="hline2" class="abs"></div><div id="status" class="abs"></div>
<div class="abs" style="left:1039px;top:806px;width:30px;height:17px;background:#454545"></div>
<svg class="abs" width="1300" height="823" viewBox="0 0 1300 823">
<path d="M889 815.8 H897 M889 818 H897 M889 813.6 H897" stroke="#f2f2f2" stroke-width="0.9"/><path d="M891 812.4 L893 810 L895 812.4 Z" fill="#f2f2f2"/>
<text x="900.6" y="817.4" textLength="35.9" lengthAdjust="spacingAndGlyphs" font-family="Liberation Sans" font-size="9.8" font-weight="normal" fill="#f2f2f2" stroke="#f2f2f2" stroke-width="0.55" >Заметки</text>
<path d="M953.4 809 H964 V816 H958.4 L955.6 818.8 V816 H953.4 Z" fill="#f2f2f2"/>
<text x="967.6" y="817.4" textLength="55.4" lengthAdjust="spacingAndGlyphs" font-family="Liberation Sans" font-size="9.8" font-weight="normal" fill="#f2f2f2" stroke="#f2f2f2" stroke-width="0.55" >Примечания</text>
<rect x="1048.4" y="808.8" width="11.4" height="10.6" fill="#f2f2f2"/><rect x="1052.6" y="810.8" width="5.6" height="3.6" fill="#454545"/><path d="M1050.4 816.6 H1058" stroke="#454545" stroke-width="1"/><path d="M1050.6 810 V815" stroke="#9a9a9a" stroke-width="0.8"/>
<rect x="1080.4" y="809.4" width="4.8" height="4.4" fill="#f2f2f2"/>
<rect x="1086.6" y="809.4" width="4.8" height="4.4" fill="#f2f2f2"/>
<rect x="1080.4" y="815.2" width="4.8" height="4.4" fill="#f2f2f2"/>
<rect x="1086.6" y="815.2" width="4.8" height="4.4" fill="#f2f2f2"/>
<path d="M1110.8 810 C1112.6 809.4 1114.2 809.6 1115.6 810.8 V819.4 C1114.2 818.4 1112.6 818.2 1110.8 818.8 Z M1120.8 810 C1119 809.4 1117.4 809.6 1116 810.8 V819.4 C1117.4 818.4 1119 818.2 1120.8 818.8 Z" fill="none" stroke="#f2f2f2" stroke-width="0.9"/><path d="M1112 811 V817.6 M1113.4 811 V817.6 M1118.2 811 V817.6 M1119.6 811 V817.6" stroke="#f2f2f2" stroke-width="0.5"/>
<path d="M1142 809.6 H1151.6 M1142.8 809.6 V814.6 H1150.8 V809.6 M1146.8 814.6 V818.6 M1144.6 819 H1149" fill="none" stroke="#f2f2f2" stroke-width="1.1"/><rect x="1144" y="811" width="5.6" height="2.6" fill="#f2f2f2"/>
<path d="M1167.3 813.9 H1171.3" stroke="#f2f2f2" stroke-width="1.3"/><path d="M1174.7 813.9 H1256" stroke="#e6e6e6" stroke-width="1.1"/><rect x="1215.9" y="808.2" width="3.8" height="11.6" fill="#f2f2f2"/><path d="M1259.4 813.9 H1266.8 M1263.1 810.2 V817.6" stroke="#f2f2f2" stroke-width="1.3"/>
<text x="1273.5" y="817.6" textLength="24.1" lengthAdjust="spacingAndGlyphs" font-family="Liberation Sans" font-size="10.2" font-weight="normal" fill="#f2f2f2" stroke="#f2f2f2" stroke-width="0.28" >114 %</text>
</svg>
<div id="tabbar" class="abs"></div><div id="acttab" class="abs"></div><div id="ribbon" class="abs"></div>
<div class="abs sep" style="left:9px"></div>
<div class="abs sep" style="left:468px"></div>
<div class="abs sep" style="left:755px"></div>
<div class="abs sep" style="left:883px"></div>
<div class="abs sep" style="left:1168px"></div>
<div class="abs gal" style="left:17px;top:31px;width:333px;height:48px"></div>
<div class="abs gi" style="left:21px"></div>
<div class="abs gi" style="left:66.5px"></div>
<div class="abs gi" style="left:112px"></div>
<div class="abs gi" style="left:158px"></div>
<div class="abs gi" style="left:203.5px"></div>
<div class="abs gi" style="left:249px"></div>
<div class="abs gi" style="left:295px"></div>
<div class="abs gal" style="left:476px;top:31px;width:152px;height:48px"></div>
<div class="abs gi" style="left:480px"></div>
<div class="abs gi" style="left:526px"></div>
<div class="abs gi" style="left:571.5px"></div>
<div class="abs sb" style="left:339px;top:31px;width:12px;height:18px;background:#d2d2d2"></div>
<div class="abs sb" style="left:339px;top:48px;width:12px;height:17px"></div>
<div class="abs sb" style="left:339px;top:64px;width:12px;height:15px"></div>
<div class="abs sb" style="left:615px;top:31px;width:12px;height:18px;background:#d2d2d2"></div>
<div class="abs sb" style="left:615px;top:48px;width:12px;height:17px"></div>
<div class="abs sb" style="left:615px;top:64px;width:12px;height:15px"></div>
<div class="abs" style="left:1234px;top:35px;width:59px;height:18px;background:#e3e3e3;border:1px solid #9c9c9c;box-sizing:border-box"></div>
<div class="abs" style="left:1236px;top:60px;width:59px;height:19px;background:#e3e3e3;border:1px solid #9c9c9c;box-sizing:border-box"></div>
<svg class="abs" width="1300" height="110" viewBox="0 0 1300 110">
<text x="3.2" y="17.4" textLength="57.3" lengthAdjust="spacingAndGlyphs" font-family="Liberation Sans" font-size="10.6" font-weight="normal" fill="#ffffff" stroke="#ffffff" stroke-width="0.28" >Конструктор</text>
<text x="82.6" y="17.4" textLength="45.4" lengthAdjust="spacingAndGlyphs" font-family="Liberation Sans" font-size="10.6" font-weight="normal" fill="#ffffff" stroke="#ffffff" stroke-width="0.28" >Переходы</text>
<text x="150.0" y="17.4" textLength="46.6" lengthAdjust="spacingAndGlyphs" font-family="Liberation Sans" font-size="10.6" font-weight="normal" fill="#ffffff" stroke="#ffffff" stroke-width="0.28" >Анимация</text>
<text x="218.8" y="17.4" textLength="51.2" lengthAdjust="spacingAndGlyphs" font-family="Liberation Sans" font-size="10.6" font-weight="normal" fill="#ffffff" stroke="#ffffff" stroke-width="0.28" >Слайд-шоу</text>
<text x="292.0" y="17.4" textLength="74.5" lengthAdjust="spacingAndGlyphs" font-family="Liberation Sans" font-size="10.6" font-weight="normal" fill="#ffffff" stroke="#ffffff" stroke-width="0.28" >Рецензирование</text>
<text x="388.5" y="17.4" textLength="16.5" lengthAdjust="spacingAndGlyphs" font-family="Liberation Sans" font-size="10.6" font-weight="normal" fill="#ffffff" stroke="#ffffff" stroke-width="0.28" >Вид</text>
<text x="426.8" y="17.4" textLength="37.4" lengthAdjust="spacingAndGlyphs" font-family="Liberation Sans" font-size="10.6" font-weight="normal" fill="#ffffff" stroke="#ffffff" stroke-width="0.28" >Справка</text>
<text x="486.5" y="17.4" textLength="65.4" lengthAdjust="spacingAndGlyphs" font-family="Liberation Sans" font-size="10.6" font-weight="normal" fill="#ffffff" stroke="#ffffff" stroke-width="0.28" >ISPRING FREE 7</text>
<text x="596.8" y="17.4" textLength="34.4" lengthAdjust="spacingAndGlyphs" font-family="Liberation Sans" font-size="10.6" font-weight="normal" fill="#3a3a3a" stroke="#3a3a3a" stroke-width="0.28" >Формат</text>
<text x="698.9" y="17.4" textLength="103.1" lengthAdjust="spacingAndGlyphs" font-family="Liberation Sans" font-size="10.3" font-weight="normal" fill="#ffffff" stroke="#ffffff" stroke-width="0.6" >Что вы хотите сделать?</text>
<text x="1240.6" y="17.4" textLength="65.9" lengthAdjust="spacingAndGlyphs" font-family="Liberation Sans" font-size="10.3" font-weight="normal" fill="#ffffff" stroke="#ffffff" stroke-width="0.6" >Общий доступ</text>
<g fill="none" stroke="#fff" stroke-width="1.1"><path d="M680.3 16.2 C680.3 14.3 678.6 13.6 678.6 11.4 A4.4 4.4 0 0 1 687.4 11.4 C687.4 13.6 685.7 14.3 685.7 16.2 Z"/><path d="M680.8 18.2 H685.2 M681.5 20.2 H684.5"/></g>
<g fill="none" stroke="#fff" stroke-width="1.2"><circle cx="1230" cy="11" r="3.4"/><path d="M1224.6 20.5 C1224.8 16.5 1227 15 1230 15 C1231.6 15 1232.6 15.4 1233.4 16"/><path d="M1233.8 15.2 V20.6 M1231.1 17.9 H1236.5"/></g>
<rect x="25.6" y="40.4" width="30.4" height="29.8" rx="5.5" fill="#fff" stroke="#333333" stroke-width="1.3"/>
<text x="32.3" y="58.3" textLength="17.5" lengthAdjust="spacingAndGlyphs" font-family="Liberation Sans" font-size="10.4" font-weight="normal" fill="#333" stroke="#333" stroke-width="0.15" >Абв</text>
<rect x="71.1" y="40.4" width="30.4" height="29.8" rx="5.5" fill="#fff" stroke="#c8513d" stroke-width="1.3"/>
<text x="77.8" y="58.3" textLength="17.5" lengthAdjust="spacingAndGlyphs" font-family="Liberation Sans" font-size="10.4" font-weight="normal" fill="#333" stroke="#333" stroke-width="0.15" >Абв</text>
<rect x="116.6" y="40.4" width="30.4" height="29.8" rx="5.5" fill="#fff" stroke="#f0923c" stroke-width="1.3"/>
<text x="123.3" y="58.3" textLength="17.5" lengthAdjust="spacingAndGlyphs" font-family="Liberation Sans" font-size="10.4" font-weight="normal" fill="#333" stroke="#333" stroke-width="0.15" >Абв</text>
<rect x="162.6" y="40.4" width="30.4" height="29.8" rx="5.5" fill="#fff" stroke="#c9a57e" stroke-width="1.3"/>
<text x="169.3" y="58.3" textLength="17.5" lengthAdjust="spacingAndGlyphs" font-family="Liberation Sans" font-size="10.4" font-weight="normal" fill="#333" stroke="#333" stroke-width="0.15" >Абв</text>
<rect x="208.1" y="40.4" width="30.4" height="29.8" rx="5.5" fill="#fff" stroke="#9aab8a" stroke-width="1.3"/>
<text x="214.8" y="58.3" textLength="17.5" lengthAdjust="spacingAndGlyphs" font-family="Liberation Sans" font-size="10.4" font-weight="normal" fill="#333" stroke="#333" stroke-width="0.15" >Абв</text>
<rect x="253.6" y="40.4" width="30.4" height="29.8" rx="5.5" fill="#fff" stroke="#aab97c" stroke-width="1.3"/>
<text x="260.3" y="58.3" textLength="17.5" lengthAdjust="spacingAndGlyphs" font-family="Liberation Sans" font-size="10.4" font-weight="normal" fill="#333" stroke="#333" stroke-width="0.15" >Абв</text>
<rect x="299.6" y="40.4" width="30.4" height="29.8" rx="5.5" fill="#fff" stroke="#5cc0b0" stroke-width="1.3"/>
<text x="306.3" y="58.3" textLength="17.5" lengthAdjust="spacingAndGlyphs" font-family="Liberation Sans" font-size="10.4" font-weight="normal" fill="#333" stroke="#333" stroke-width="0.15" >Абв</text>
<text x="499.2" y="69.2" text-anchor="middle" font-family="Liberation Sans" font-size="32.5" fill="#111" stroke="#111" stroke-width="1.1">A</text>
<text x="545.8" y="69.2" text-anchor="middle" font-family="Liberation Sans" font-size="32.5" fill="#c2300e" stroke="#c2300e" stroke-width="1.1">A</text>
<text x="591.3" y="69" text-anchor="middle" font-family="Liberation Sans" font-size="31" font-weight="bold" fill="#fcd9ab" stroke="#f0801e" stroke-width="2.8" paint-order="stroke" stroke-linejoin="round">A</text>
<path d="M342.6 41.2 l2.4 -2.2 l2.4 2.2 z" fill="#b4b4b4"/>
<path d="M342.0 55.0 h6 l-3.0 3.2 z" fill="#222"/>
<path d="M342 69 h6" stroke="#222" stroke-width="1"/>
<path d="M342.0 71.3 h6 l-3.0 3.2 z" fill="#222"/>
<path d="M618.6 41.2 l2.4 -2.2 l2.4 2.2 z" fill="#b4b4b4"/>
<path d="M618.0 55.0 h6 l-3.0 3.2 z" fill="#222"/>
<path d="M618 69 h6" stroke="#222" stroke-width="1"/>
<path d="M618.0 71.3 h6 l-3.0 3.2 z" fill="#222"/>
<rect x="355.7" y="40.8" width="13.3" height="2.9" fill="#00a8e8"/>
<path d="M361.6 32 L366.4 36.4 L361.6 40.4 L357.4 36.2 Z" fill="#fff" stroke="#3a3a3a" stroke-width="1.1"/><path d="M360.4 31.4 A1.6 1.6 0 0 1 363.2 32.6 M361.6 31 V34.6" fill="none" stroke="#3a3a3a" stroke-width="1"/><path d="M366.4 34.2 C369 36 369.4 38.8 367.8 40 C366 38.8 366.2 36.4 366.4 34.2Z" fill="#1b4f86"/>
<rect x="355.7" y="59.2" width="13.3" height="2.9" fill="#00a8e8"/>
<path d="M356.2 58 V50.2 H364" fill="none" stroke="#5a5a5a" stroke-width="1.3"/><path d="M359.6 58.6 L360.6 55.2 L366 49.8 L368.6 52.4 L363.2 57.8 Z" fill="#1d5796"/>
<path d="M359.3 71 H367.4 L364.6 77 H356.4 Z" fill="#fff" stroke="#4a4a4a" stroke-width="0.8"/><path d="M367.6 71.6 L368.6 72.6 L365.6 78.6 H357.6 L356.6 77.4 H364.8 Z" fill="#3a3a3a"/>
<text x="371.2" y="41.9" textLength="73.8" lengthAdjust="spacingAndGlyphs" font-family="Liberation Sans" font-size="10.5" font-weight="normal" fill="#262626" stroke="#262626" stroke-width="0.28" >Заливка фигуры</text>
<path d="M447.5 37.0 h5 l-2.5 2.8 z" fill="#3a3a3a"/>
<text x="371.2" y="60.4" textLength="69.3" lengthAdjust="spacingAndGlyphs" font-family="Liberation Sans" font-size="10.5" font-weight="normal" fill="#262626" stroke="#262626" stroke-width="0.28" >Контур фигуры</text>
<path d="M443.0 55.6 h5 l-2.5 2.8 z" fill="#3a3a3a"/>
<text x="371.2" y="79.0" textLength="78.8" lengthAdjust="spacingAndGlyphs" font-family="Liberation Sans" font-size="10.5" font-weight="normal" fill="#262626" stroke="#262626" stroke-width="0.28" >Эффекты фигуры</text>
<path d="M452.5 74.2 h5 l-2.5 2.8 z" fill="#3a3a3a"/>
<text x="205.5" y="98.0" textLength="54.0" lengthAdjust="spacingAndGlyphs" font-family="Liberation Sans" font-size="9.7" font-weight="normal" fill="#262626" stroke="#262626" stroke-width="0.28" >Стили фигур</text>
<path d="M460 97.0 V92.5 H464.5" fill="none" stroke="#555" stroke-width="1"/><path d="M465.5 94.7 V98.0 H462.2 Z" fill="#3a3a3a"/><path d="M461.8 94.3 L464.6 97.1" stroke="#3a3a3a" stroke-width="1"/>
<text x="639.2" y="41" text-anchor="middle" font-family="Liberation Sans" font-size="11.5" font-weight="bold" fill="#111">A</text><rect x="632.3" y="41.4" width="13.4" height="2.7" fill="#111"/>
<text x="639.2" y="58.8" text-anchor="middle" font-family="Liberation Sans" font-size="12" font-weight="bold" fill="#fff" stroke="#2a2a2a" stroke-width="1.5" paint-order="stroke" stroke-linejoin="round">A</text><rect x="632.3" y="59.9" width="13.4" height="2.7" fill="#111"/>
<text x="639.2" y="79.4" text-anchor="middle" font-family="Liberation Sans" font-size="13.5" font-weight="bold" fill="#a6dbf6" stroke="#1f6fa8" stroke-width="2.2" paint-order="stroke" stroke-linejoin="round">A</text>
<text x="647.7" y="41.9" textLength="66.8" lengthAdjust="spacingAndGlyphs" font-family="Liberation Sans" font-size="10.5" font-weight="normal" fill="#262626" stroke="#262626" stroke-width="0.28" >Заливка текста</text>
<path d="M717.0 37.0 h5 l-2.5 2.8 z" fill="#3a3a3a"/>
<text x="647.7" y="60.4" textLength="62.3" lengthAdjust="spacingAndGlyphs" font-family="Liberation Sans" font-size="10.5" font-weight="normal" fill="#262626" stroke="#262626" stroke-width="0.28" >Контур текста</text>
<path d="M712.0 55.6 h5 l-2.5 2.8 z" fill="#3a3a3a"/>
<text x="647.7" y="79.0" textLength="89.9" lengthAdjust="spacingAndGlyphs" font-family="Liberation Sans" font-size="10.5" font-weight="normal" fill="#262626" stroke="#262626" stroke-width="0.28" >Текстовые эффекты</text>
<path d="M740.0 74.2 h5 l-2.5 2.8 z" fill="#3a3a3a"/>
<text x="574.0" y="98.0" textLength="63.6" lengthAdjust="spacingAndGlyphs" font-family="Liberation Sans" font-size="9.7" font-weight="normal" fill="#262626" stroke="#262626" stroke-width="0.28" >Стили WordArt</text>
<path d="M746.5 97.0 V92.5 H751.0" fill="none" stroke="#555" stroke-width="1"/><path d="M752.0 94.7 V98.0 H748.7 Z" fill="#3a3a3a"/><path d="M748.3 94.3 L751.1 97.1" stroke="#3a3a3a" stroke-width="1"/>
<rect x="808.4" y="32.6" width="22.4" height="22.6" rx="1.2" fill="#fff" stroke="#555" stroke-width="1"/><circle cx="825.2" cy="38.2" r="2.4" fill="#f0b243"/><path d="M810 54 V51 L816 44 L819.5 47.8 L817.5 50 V54 Z M820.6 46.8 L822.6 44.8 L825.6 47.8 H821.6 Z" fill="#0c5ea4"/><rect x="818.2" y="49.5" width="14.2" height="7.2" rx="0.8" fill="#fff" stroke="#5a5a5a" stroke-width="1"/><path d="M820.2 52 H829.8 M820.2 54.2 H829.8" stroke="#8a8a8a" stroke-width="0.8"/>
<text x="786.7" y="69.6" textLength="65.0" lengthAdjust="spacingAndGlyphs" font-family="Liberation Sans" font-size="10.5" font-weight="normal" fill="#262626" stroke="#262626" stroke-width="0.28" >Замещающий</text>
<text x="808.0" y="82.0" textLength="22.5" lengthAdjust="spacingAndGlyphs" font-family="Liberation Sans" font-size="10.5" font-weight="normal" fill="#262626" stroke="#262626" stroke-width="0.28" >текст</text>
<text x="759.4" y="98.0" textLength="120.6" lengthAdjust="spacingAndGlyphs" font-family="Liberation Sans" font-size="9.7" font-weight="normal" fill="#262626" stroke="#262626" stroke-width="0.28" >Специальные возможности</text>
<rect x="919.6" y="42.6" width="12" height="12.6" fill="#fff" stroke="#555" stroke-width="1"/><rect x="910.6" y="32" width="18" height="18" fill="#f5c15f"/>
<rect x="973.3" y="32" width="18" height="18" fill="#f5c15f"/><rect x="981.8" y="42.4" width="13" height="12.8" fill="#fff" stroke="#555" stroke-width="1"/>
<text x="892.5" y="69.6" textLength="58.1" lengthAdjust="spacingAndGlyphs" font-family="Liberation Sans" font-size="10.5" font-weight="normal" fill="#262626" stroke="#262626" stroke-width="0.28" >Переместить</text>
<text x="903.0" y="82.0" textLength="31.0" lengthAdjust="spacingAndGlyphs" font-family="Liberation Sans" font-size="10.5" font-weight="normal" fill="#262626" stroke="#262626" stroke-width="0.28" >вперед</text>
<path d="M936.0 77.6 h5 l-2.5 2.8 z" fill="#3a3a3a"/>
<text x="955.2" y="69.6" textLength="58.2" lengthAdjust="spacingAndGlyphs" font-family="Liberation Sans" font-size="10.5" font-weight="normal" fill="#262626" stroke="#262626" stroke-width="0.28" >Переместить</text>
<text x="969.0" y="82.0" textLength="24.0" lengthAdjust="spacingAndGlyphs" font-family="Liberation Sans" font-size="10.5" font-weight="normal" fill="#262626" stroke="#262626" stroke-width="0.28" >назад</text>
<path d="M995.4 77.6 h5 l-2.5 2.8 z" fill="#3a3a3a"/>
<rect x="1032" y="32.5" width="10" height="9.6" fill="#fff" stroke="#555" stroke-width="1"/><rect x="1032" y="44.5" width="10" height="9.8" fill="#fff" stroke="#555" stroke-width="1"/><path d="M1038.4 37.6 H1050 V43.8 H1046 V47.6 H1043.6 V43.4 H1038.4 Z" fill="#f5c15f"/><path d="M1046.6 44.2 V54.6 L1049 52.4 L1050.8 56.2 L1052.4 55.4 L1050.6 51.8 L1053.6 51.6 Z" fill="#fff" stroke="#444" stroke-width="0.8"/>
<text x="1023.5" y="69.6" textLength="37.0" lengthAdjust="spacingAndGlyphs" font-family="Liberation Sans" font-size="10.5" font-weight="normal" fill="#262626" stroke="#262626" stroke-width="0.28" >Область</text>
<text x="1017.6" y="82.0" textLength="48.8" lengthAdjust="spacingAndGlyphs" font-family="Liberation Sans" font-size="10.5" font-weight="normal" fill="#262626" stroke="#262626" stroke-width="0.28" >выделения</text>
<text x="996.8" y="98.0" textLength="57.2" lengthAdjust="spacingAndGlyphs" font-family="Liberation Sans" font-size="9.7" font-weight="normal" fill="#262626" stroke="#262626" stroke-width="0.28" >Упорядочить</text>
<path d="M1074.4 32 V42.8" stroke="#555" stroke-width="1.1"/><rect x="1075" y="34.4" width="8.2" height="4" fill="#f5c15f"/><rect x="1075" y="32" width="4.4" height="2.2" fill="none" stroke="#555" stroke-width="0.7"/><path d="M1076 40.8 L1079 38.6 V40 H1083 V41.6 H1079 V43 Z" fill="#1d5c9d"/>
<g fill="#fff" stroke="#555" stroke-width="1"><rect x="1074" y="52" width="6.4" height="6" rx="1.3"/><rect x="1077" y="54.6" width="6.4" height="6" rx="1.3"/></g><g fill="#5f5f5f"><rect x="1071.8" y="50" width="1.6" height="1.6"/><rect x="1082.8" y="50" width="1.6" height="1.6"/><rect x="1071.8" y="60.4" width="1.6" height="1.6"/><rect x="1082.8" y="60.4" width="1.6" height="1.6"/></g>
<path d="M1079.4 69.6 L1083.4 79 H1079.4 Z" fill="#333"/><path d="M1078 72.6 L1078 79 H1073.6 Z" fill="#fff"/><path d="M1073.4 73.4 C1073.4 71 1075 70 1077 70.2" fill="none" stroke="#1d5c9d" stroke-width="1.1"/><path d="M1076.2 68.8 L1078.4 70.4 L1076.2 72 Z" fill="#1d5c9d"/>
<text x="1087.7" y="41.9" textLength="48.0" lengthAdjust="spacingAndGlyphs" font-family="Liberation Sans" font-size="10.5" font-weight="normal" fill="#262626" stroke="#262626" stroke-width="0.28" >Выровнять</text>
<path d="M1138.0 37.0 h5 l-2.5 2.8 z" fill="#3a3a3a"/>
<text x="1087.7" y="60.4" textLength="62.8" lengthAdjust="spacingAndGlyphs" font-family="Liberation Sans" font-size="10.5" font-weight="normal" fill="#8a8a8a" stroke="#8a8a8a" stroke-width="0.28" >Группировать</text>
<path d="M1152.5 55.6 h5 l-2.5 2.8 z" fill="#8a8a8a"/>
<text x="1087.7" y="79.0" textLength="47.1" lengthAdjust="spacingAndGlyphs" font-family="Liberation Sans" font-size="10.5" font-weight="normal" fill="#262626" stroke="#262626" stroke-width="0.28" >Повернуть</text>
<path d="M1137.4 74.2 h5 l-2.5 2.8 z" fill="#3a3a3a"/>
<rect x="1185.8" y="37.6" width="4.2" height="13" fill="#d8d8d8" stroke="#555" stroke-width="0.9"/><path d="M1177.4 41.2 L1180.4 37.4 L1183.4 41.2 Z M1177.4 47 L1180.4 50.8 L1183.4 47 Z" fill="#1d6fb0"/><circle cx="1180.4" cy="44.1" r="1.5" fill="#c8c8c8" stroke="#555" stroke-width="0.8"/>
<rect x="1177.6" y="62.8" width="13" height="4.6" fill="#d8d8d8" stroke="#555" stroke-width="0.9"/><path d="M1177.6 63 V70.4 M1190.6 63 V70.4" stroke="#555" stroke-width="0.9"/><path d="M1180.8 70 L1177.2 72.8 L1180.8 75.6 Z M1187.4 70 L1191 72.8 L1187.4 75.6 Z" fill="#1d6fb0"/><circle cx="1184.1" cy="72.8" r="1.4" fill="#c8c8c8" stroke="#1d6fb0" stroke-width="0.8"/>
<text x="1193.5" y="47.8" textLength="34.1" lengthAdjust="spacingAndGlyphs" font-family="Liberation Sans" font-size="10.5" font-weight="normal" fill="#262626" stroke="#262626" stroke-width="0.28" >Высота:</text>
<text x="1193.5" y="73.6" textLength="38.2" lengthAdjust="spacingAndGlyphs" font-family="Liberation Sans" font-size="10.5" font-weight="normal" fill="#262626" stroke="#262626" stroke-width="0.28" >Ширина:</text>
<text x="1238.0" y="47.8" textLength="35.8" lengthAdjust="spacingAndGlyphs" font-family="Liberation Sans" font-size="10.5" font-weight="normal" fill="#262626" stroke="#262626" stroke-width="0.28" >10,04 см</text>
<text x="1238.7" y="73.6" textLength="36.3" lengthAdjust="spacingAndGlyphs" font-family="Liberation Sans" font-size="10.5" font-weight="normal" fill="#262626" stroke="#262626" stroke-width="0.28" >24,47 см</text>
<path d="M1283.8 41.400000000000006 l2.2 -2.6 l2.2 2.6 z M1283.8 47.0 l2.2 2.6 l2.2 -2.6 z" fill="#222"/>
<path d="M1285.3 67.2 l2.2 -2.6 l2.2 2.6 z M1285.3 72.8 l2.2 2.6 l2.2 -2.6 z" fill="#222"/>
<text x="1212.0" y="98.0" textLength="30.4" lengthAdjust="spacingAndGlyphs" font-family="Liberation Sans" font-size="9.7" font-weight="normal" fill="#262626" stroke="#262626" stroke-width="0.28" >Размер</text>
<path d="M1290.8 97.0 V92.5 H1295.3" fill="none" stroke="#555" stroke-width="1"/><path d="M1296.3 94.7 V98.0 H1293.0 Z" fill="#3a3a3a"/><path d="M1292.6 94.3 L1295.3999999999999 97.1" stroke="#3a3a3a" stroke-width="1"/>
</svg>
<div class="abs" style="left:510px;top:230px;width:119px;height:52px;background:#f0f0f0;border:1px solid #d2d2d2;box-sizing:border-box;box-shadow:1px 1px 3px rgba(0,0,0,0.18)"></div>
<div class="abs" style="left:510px;top:294px;width:207px;height:372px;background:#f0f0f0;border:1px solid #d2d2d2;box-sizing:border-box;box-shadow:1px 2px 4px rgba(0,0,0,0.25)"></div>
<div class="abs" style="left:531px;top:335px;width:185px;height:18px;background:#e1e1e1"></div>
<div class="abs" style="left:536px;top:418px;width:180px;height:1px;background:#e0e0e0"></div>
<div class="abs" style="left:536px;top:478px;width:180px;height:1px;background:#e0e0e0"></div>
<div class="abs" style="left:536px;top:500px;width:180px;height:1px;background:#e0e0e0"></div>
<div class="abs" style="left:536px;top:521.5px;width:180px;height:1px;background:#e0e0e0"></div>
<div class="abs" style="left:536px;top:542.5px;width:180px;height:1px;background:#e0e0e0"></div>
<div class="abs" style="left:536px;top:563.5px;width:180px;height:1px;background:#e0e0e0"></div>
<div class="abs" style="left:536px;top:643px;width:180px;height:1px;background:#e0e0e0"></div>
<div class="abs" style="left:697px;top:440px;width:1px;height:17px;background:#dcdcdc"></div>
<div class="abs" style="left:697px;top:460px;width:1px;height:17px;background:#dcdcdc"></div>
<div class="abs" style="left:506px;top:376px;width:216px;height:26px;border:2px solid #ea3a2e;border-radius:3px;box-sizing:border-box"></div>
<svg class="abs" width="1300" height="823" viewBox="0 0 1300 823">
<path d="M531 253 H524.4 A3 3 0 0 1 521.4 250 V240.8 A3 3 0 0 1 524.4 237.8 H533.4 A3 3 0 0 1 536.4 240.8 V245" fill="#fff" stroke="#3b3b3b" stroke-width="1.3"/><path d="M540.4 240 L542.2 241.6 L535.8 249.6 L533.6 247.8 Z" fill="#333"/><path d="M533.2 248.2 L535.6 250.2 C534.4 253.6 530.6 255 526.6 255 C529.8 253.4 530.4 250.4 533.2 248.2Z" fill="#1e5fa3"/>
<rect x="557.2" y="251.2" width="19.3" height="3.8" fill="#00a8e8"/><path d="M566.4 237.6 L573.6 244.2 L567.4 250 L561 243.6 Z" fill="#fff" stroke="#3b3b3b" stroke-width="1"/><path d="M566.6 235.6 A1.8 1.8 0 0 1 568.6 238.4 M566.6 236 V241.6" fill="none" stroke="#3b3b3b" stroke-width="0.9"/><path d="M573.8 242.6 C576.4 244.8 576.6 247.8 575 249 C573.4 247.6 573.6 245 573.8 242.6Z" fill="#1e5fa3"/>
<rect x="597" y="251.2" width="19.3" height="3.8" fill="#00a8e8"/><path d="M598 249.6 V237.6 H612" fill="none" stroke="#4a4a4a" stroke-width="1.2"/><path d="M603.4 249.8 L604.6 246.2 L613.6 237 L616 239.4 L606.8 248.6 Z" fill="#1e5fa3"/>
<path d="M540.3 244.2 h4.4 l-2.2 2.6 z" fill="#333"/>
<path d="M577.8 244.2 h4.4 l-2.2 2.6 z" fill="#333"/>
<path d="M617.8 244.2 h4.4 l-2.2 2.6 z" fill="#333"/>
<text x="517.0" y="269.0" textLength="24.8" lengthAdjust="spacingAndGlyphs" font-family="Liberation Sans" font-size="9.4" font-weight="normal" fill="#363636" stroke="#363636" stroke-width="0.28" >Стиль</text>
<text x="549.5" y="269.0" textLength="34.3" lengthAdjust="spacingAndGlyphs" font-family="Liberation Sans" font-size="9.4" font-weight="normal" fill="#363636" stroke="#363636" stroke-width="0.28" >Заливка</text>
<text x="592.0" y="269.0" textLength="29.5" lengthAdjust="spacingAndGlyphs" font-family="Liberation Sans" font-size="9.4" font-weight="normal" fill="#363636" stroke="#363636" stroke-width="0.28" >Контур</text>
<text x="537.8" y="308.4" textLength="41.2" lengthAdjust="spacingAndGlyphs" font-family="Liberation Sans" font-size="9.8" font-weight="normal" fill="#363636" stroke="#363636" stroke-width="0.32" >Вырезать</text>
<text x="537.8" y="327.8" textLength="52.6" lengthAdjust="spacingAndGlyphs" font-family="Liberation Sans" font-size="9.8" font-weight="normal" fill="#363636" stroke="#363636" stroke-width="0.32" >Копировать</text>
<text x="537.8" y="391.2" textLength="69.2" lengthAdjust="spacingAndGlyphs" font-family="Liberation Sans" font-size="9.8" font-weight="normal" fill="#363636" stroke="#363636" stroke-width="0.32" >Изменить текст</text>
<text x="537.8" y="411.4" textLength="110.5" lengthAdjust="spacingAndGlyphs" font-family="Liberation Sans" font-size="9.8" font-weight="normal" fill="#363636" stroke="#363636" stroke-width="0.32" >Начать изменение узлов</text>
<text x="537.8" y="432.2" textLength="62.7" lengthAdjust="spacingAndGlyphs" font-family="Liberation Sans" font-size="9.8" font-weight="normal" fill="#8c8c8c" stroke="#8c8c8c" stroke-width="0.32" >Группировать</text>
<text x="537.8" y="451.6" textLength="82.5" lengthAdjust="spacingAndGlyphs" font-family="Liberation Sans" font-size="9.8" font-weight="normal" fill="#363636" stroke="#363636" stroke-width="0.32" >На передний план</text>
<text x="537.8" y="471.1" textLength="70.2" lengthAdjust="spacingAndGlyphs" font-family="Liberation Sans" font-size="9.8" font-weight="normal" fill="#363636" stroke="#363636" stroke-width="0.32" >На задний план</text>
<text x="537.8" y="493.2" textLength="66.9" lengthAdjust="spacingAndGlyphs" font-family="Liberation Sans" font-size="9.8" font-weight="normal" fill="#363636" stroke="#363636" stroke-width="0.32" >Гиперссылка...</text>
<text x="537.8" y="514.4" textLength="115.8" lengthAdjust="spacingAndGlyphs" font-family="Liberation Sans" font-size="9.8" font-weight="normal" fill="#363636" stroke="#363636" stroke-width="0.32" >Интеллектуальный поиск</text>
<text x="537.8" y="535.4" textLength="112.6" lengthAdjust="spacingAndGlyphs" font-family="Liberation Sans" font-size="9.8" font-weight="normal" fill="#363636" stroke="#363636" stroke-width="0.32" >Сохранить как рисунок...</text>
<text x="537.8" y="556.8" textLength="47.2" lengthAdjust="spacingAndGlyphs" font-family="Liberation Sans" font-size="9.8" font-weight="normal" fill="#363636" stroke="#363636" stroke-width="0.32" >Перевести</text>
<text x="537.8" y="577.8" textLength="142.7" lengthAdjust="spacingAndGlyphs" font-family="Liberation Sans" font-size="9.8" font-weight="normal" fill="#363636" stroke="#363636" stroke-width="0.32" >Изменить замещающий текст...</text>
<text x="537.8" y="597.6" textLength="159.2" lengthAdjust="spacingAndGlyphs" font-family="Liberation Sans" font-size="9.8" font-weight="normal" fill="#363636" stroke="#363636" stroke-width="0.32" >Назначить фигурой по умолчанию</text>
<text x="537.8" y="617.0" textLength="102.0" lengthAdjust="spacingAndGlyphs" font-family="Liberation Sans" font-size="9.8" font-weight="normal" fill="#363636" stroke="#363636" stroke-width="0.32" >Размер и положение...</text>
<text x="537.8" y="636.8" textLength="79.9" lengthAdjust="spacingAndGlyphs" font-family="Liberation Sans" font-size="9.8" font-weight="normal" fill="#363636" stroke="#363636" stroke-width="0.32" >Формат фигуры...</text>
<text x="537.8" y="657.6" textLength="94.0" lengthAdjust="spacingAndGlyphs" font-family="Liberation Sans" font-size="9.8" font-weight="normal" fill="#363636" stroke="#363636" stroke-width="0.32" >Создать примечание</text>
<text x="538.9" y="347.0" textLength="95.5" lengthAdjust="spacingAndGlyphs" font-family="Liberation Sans" font-size="9.8" font-weight="bold" fill="#363636" stroke="#363636" stroke-width="0.1" >Параметры вставки:</text>
<path d="M543.6 309.8 H549.6" stroke="#363636" stroke-width="0.8"/>
<path d="M537.8 329.2 H544.6" stroke="#363636" stroke-width="0.8"/>
<path d="M573 392.6 H578.6" stroke="#363636" stroke-width="0.8"/>
<path d="M549.4 412.8 H554.4" stroke="#363636" stroke-width="0.8"/>
<path d="M575 472.4 H580" stroke="#363636" stroke-width="0.8"/>
<path d="M556.6 494.6 H561.6" stroke="#363636" stroke-width="0.8"/>
<path d="M537.8 515.8 H545" stroke="#363636" stroke-width="0.8"/>
<path d="M548.4 536.8 H553.4" stroke="#363636" stroke-width="0.8"/>
<path d="M537.8 558.2 H545.2" stroke="#363636" stroke-width="0.8"/>
<path d="M619.4 579.2 H626.8" stroke="#363636" stroke-width="0.8"/>
<path d="M537.8 599.0 H545" stroke="#363636" stroke-width="0.8"/>
<path d="M606 618.4 H613.2" stroke="#363636" stroke-width="0.8"/>
<path d="M537.8 638.2 H546" stroke="#363636" stroke-width="0.8"/>
<path d="M615.6 659.0 H621" stroke="#363636" stroke-width="0.8"/>
<path d="M537.8 433.6 H543" stroke="#8c8c8c" stroke-width="0.8"/>
<path d="M704.4 426.0 L707.6 429.2 L704.4 432.4 Z" fill="#555"/>
<path d="M704.4 445.5 L707.6 448.7 L704.4 451.9 Z" fill="#555"/>
<path d="M704.4 465.0 L707.6 468.2 L704.4 471.4 Z" fill="#555"/>
<path d="M517.4 299.2 L524.4 307.8 M525.6 299.2 L518.6 307.8" stroke="#2b2b2b" stroke-width="1.9" fill="none"/><circle cx="518.2" cy="309.4" r="2.2" fill="none" stroke="#2d6db5" stroke-width="1.5"/><circle cx="524.8" cy="309.4" r="2.2" fill="none" stroke="#2d6db5" stroke-width="1.5"/>
<g fill="#fff" stroke="#3a3a3a" stroke-width="1.25"><path d="M515.4 319.5 H520.6 L522.6 321.5 V327.5 H515.4 Z"/><path d="M519.6 322.8 H524.6 L526.8 325 V330.4 H519.6 Z"/></g><path d="M517 322 H520 M517 324 H519 M521.4 326.4 H525 M521.4 328.4 H525" stroke="#5b8fc7" stroke-width="0.8"/>
<path d="M516 339 H524.4 V343 H520 V350 H516 Z" fill="#f0ab4c"/><path d="M518.4 338.4 H522 M520.2 337.2 V338.4" stroke="#333" stroke-width="1.4"/><path d="M520.8 343.8 H525.4 L527.6 346 V350.4 H520.8 Z" fill="#fff" stroke="#444" stroke-width="1"/>
<path d="M537 359.4 H551.4 V366 M537 359.4 V373.2 H543.4" fill="none" stroke="#f0ab4c" stroke-width="1.6"/><rect x="538.4" y="360.6" width="11.6" height="11.6" fill="#fff"/><path d="M541.2 358.8 H547 V357.4 H545.4 A1.4 1.4 0 0 0 542.8 357.4 H541.2 Z" fill="#222"/><text x="548.4" y="374" text-anchor="middle" font-family="Liberation Sans" font-weight="bold" font-size="12.5" fill="#111">A</text>
<rect x="515.5" y="383.5" width="11.8" height="9.4" fill="#fff" stroke="#444" stroke-width="1"/><text x="517" y="389.4" font-family="Liberation Sans" font-weight="bold" font-size="5.8" fill="#1b4f86" stroke="#1b4f86" stroke-width="0.3">A</text><path d="M522 386 H525.6 M522 388 H525.6 M517.2 390.8 H525.6" stroke="#777" stroke-width="0.7"/>
<path d="M516.2 405 L521.4 408.6 L526.4 403.4 M516.2 405 V412.8 H526.4 V410" fill="none" stroke="#444" stroke-width="0.9" stroke-dasharray="1.6 1.2"/><g fill="#1b4e8a"><rect x="515" y="403.8" width="2.4" height="2.4"/><rect x="520.2" y="407.4" width="2.4" height="2.4"/><rect x="525.2" y="402.4" width="2.4" height="2.4"/><rect x="515" y="411.6" width="2.4" height="2.4"/><rect x="525.2" y="411.6" width="2.4" height="2.4"/></g>
<g fill="none" stroke="#6a6a6a" stroke-width="0.9"><rect x="517.6" y="425.8" width="5" height="5"/><rect x="520" y="428.2" width="5" height="5"/></g><g fill="#5a5a5a"><rect x="515" y="423.4" width="2" height="2"/><rect x="525.6" y="423.4" width="2" height="2"/><rect x="515" y="433" width="2" height="2"/><rect x="525.6" y="433" width="2" height="2"/><rect x="520.4" y="423.4" width="1.6" height="1.2"/><rect x="520.4" y="434" width="1.6" height="1.2"/><rect x="515" y="428.4" width="1.2" height="1.6"/><rect x="526.4" y="428.4" width="1.2" height="1.6"/></g>
<rect x="518" y="445.8" width="7" height="6.6" fill="#f0ab4c"/><path d="M515.4 447 V443.4 H519 M524 454 H527.4 V450.4" fill="none" stroke="#444" stroke-width="1"/>
<rect x="518.2" y="464.8" width="5" height="5" fill="#f0ab4c"/><rect x="520.2" y="466.8" width="3" height="3" fill="#f0ab4c"/><rect x="515.4" y="462.4" width="3.6" height="3.6" fill="#fff" stroke="#444" stroke-width="0.9"/><rect x="522.8" y="469.2" width="4.2" height="4.2" fill="#fff" stroke="#444" stroke-width="0.9"/>
<g fill="none" stroke="#555" stroke-width="0.9"><path d="M516 489.4 A5 5 0 0 1 526 489.4 M516 489.4 H526 M521 484.4 V489.4 M518.6 485.4 C517.8 486.8 517.8 488 518 489.4 M523.4 485.4 C524.2 486.8 524.2 488 524 489.4"/></g><g fill="none" stroke="#1b4e8a" stroke-width="1.5"><rect x="516" y="491.2" width="6.2" height="3.6" rx="1.8"/><rect x="521" y="491.2" width="6.2" height="3.6" rx="1.8"/></g>
<circle cx="523" cy="509.4" r="4.3" fill="#fff" stroke="#1b4e8a" stroke-width="1.4"/><path d="M519.8 512.8 L515.6 517" stroke="#1b4e8a" stroke-width="1.8"/><path d="M523 508.6 V511.8" stroke="#222" stroke-width="1.2"/><circle cx="523" cy="507" r="0.7" fill="#222"/>
<text x="514.6" y="559.6" font-family="Liberation Sans" font-weight="bold" font-size="8" fill="#2a8ad4">a</text><path d="M515.6 549.4 H518.8 M515.6 549.4 V552.4 M515.8 549.6 L519 552.8" stroke="#1b4e8a" stroke-width="1.1" fill="none"/><text x="521.4" y="554.4" font-family="Liberation Sans" font-weight="bold" font-size="7.4" fill="#1d7a2a">あ</text><path d="M522.4 556.4 L526.4 560 M526.6 557 V560.2 H523.4" stroke="#1d7a2a" stroke-width="1.1" fill="none"/>
<rect x="515.4" y="568.6" width="10.6" height="10.4" fill="#fff" stroke="#444" stroke-width="0.9"/><circle cx="523.2" cy="571.2" r="0.9" fill="#f0ab4c"/><path d="M516.4 578 V575.6 L519 572.8 L520.8 574.8 L522 573.8 L523 575 V578 Z" fill="#1e5fa3"/><rect x="520.4" y="576.6" width="7" height="3.8" fill="#fff" stroke="#555" stroke-width="0.8"/>
<rect x="522.6" y="607.6" width="4.6" height="12" fill="#fff" stroke="#444" stroke-width="0.9"/><path d="M515.4 610.8 L518.2 607.4 L521 610.8 Z M515.4 616.6 L518.2 620 L521 616.6 Z" fill="#1e5fa3"/><path d="M518.2 610 V617.4" stroke="#1e5fa3" stroke-width="1"/><circle cx="518.2" cy="613.7" r="1.3" fill="#fff" stroke="#444" stroke-width="0.7"/>
<path d="M518.6 627.6 L523 631.4 L519.4 635.2 L515.4 631.6 Z" fill="#fff" stroke="#444" stroke-width="0.9"/><path d="M518.4 626.6 V630" stroke="#444" stroke-width="0.8"/><path d="M527.4 629.4 L528.2 630.2 L523.6 635.6 L522.4 634.6 Z" fill="#333"/><path d="M522.2 634.8 L523.6 636 C522.6 638.6 519.6 640 516.6 640.2 C519 638.8 519.8 636.6 522.2 634.8Z" fill="#1e5fa3"/>
<path d="M519.6 650.6 H527 V658 H521.6 L518.8 660.8 V658 H516.6 V654.4" fill="none" stroke="#444" stroke-width="0.9"/><path d="M515 650.4 H519.2 M517.1 648.2 V652.6" stroke="#1a8a3a" stroke-width="1.3"/>
</svg>
</body></html>
